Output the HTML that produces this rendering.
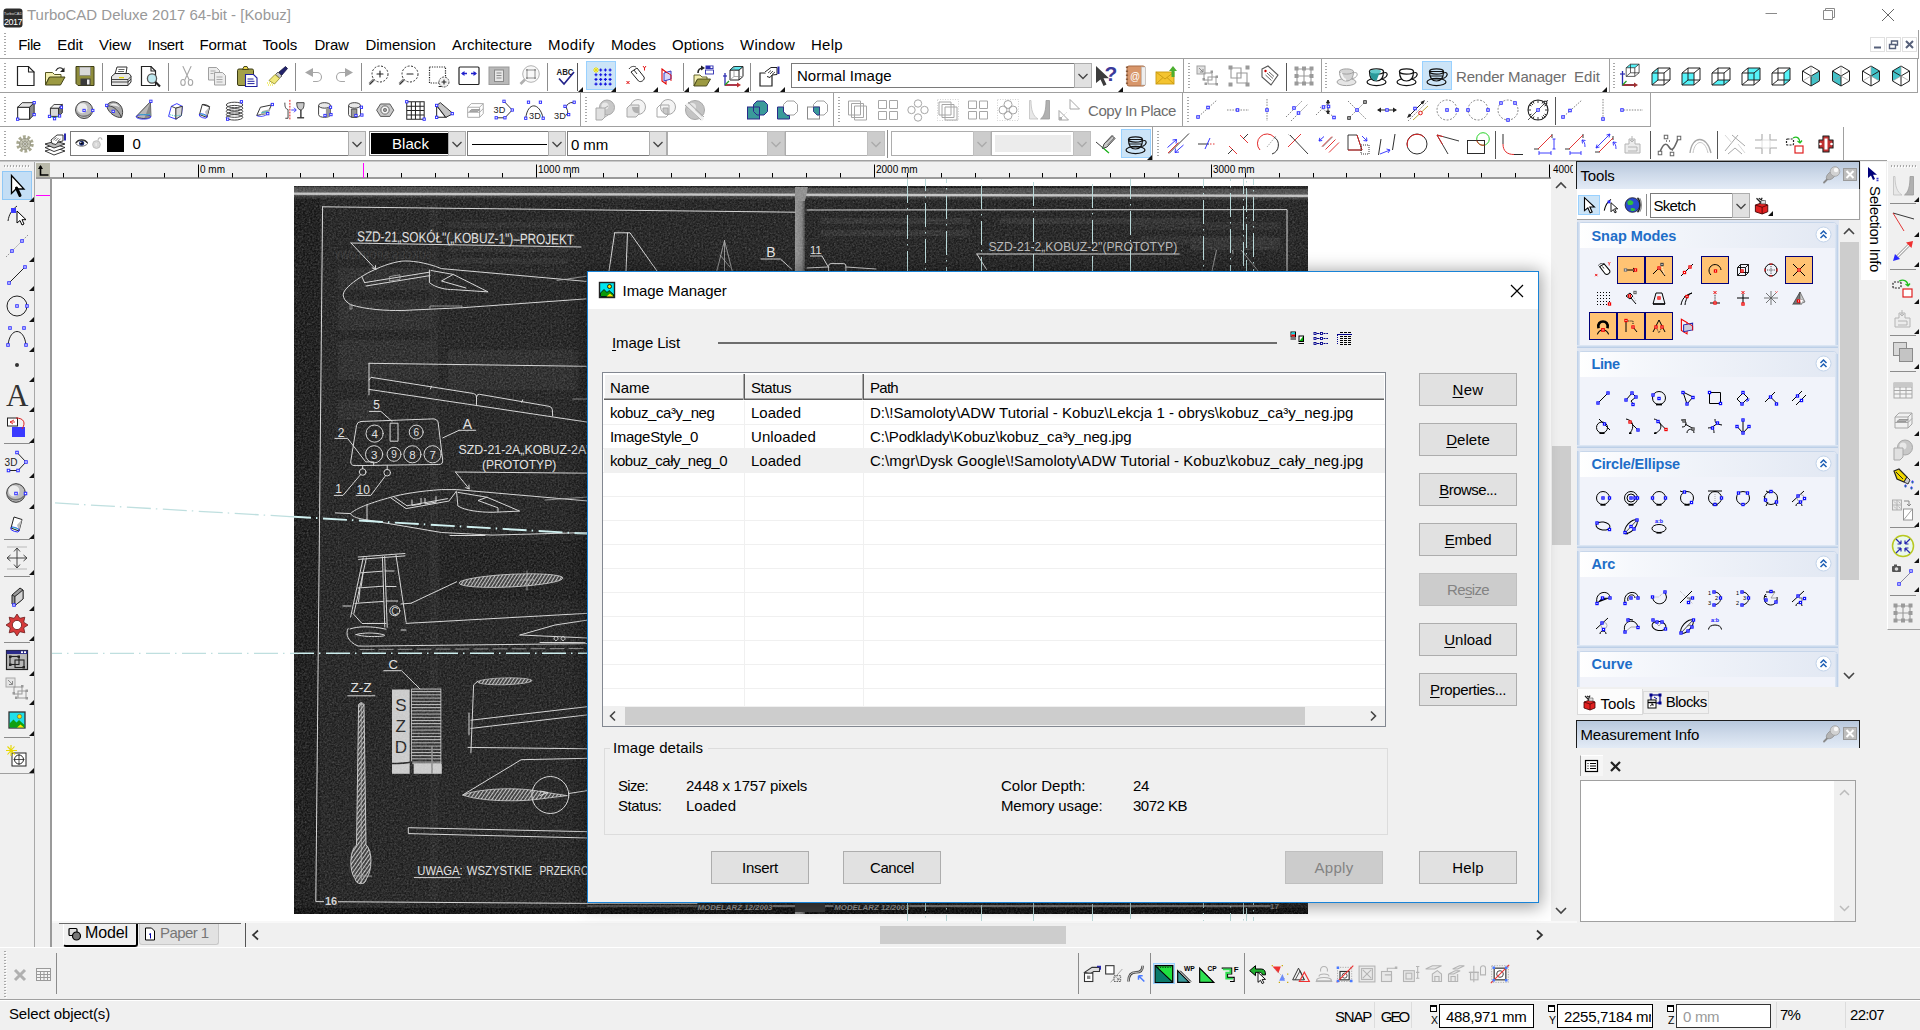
<!DOCTYPE html>
<html><head><meta charset="utf-8"><title>TurboCAD Deluxe 2017 64-bit - [Kobuz]</title>
<style>
html,body{margin:0;padding:0;}
body{width:1920px;height:1030px;overflow:hidden;background:#f0f0f0;position:relative;font-family:"Liberation Sans",sans-serif;font-size:15px;}
.a{position:absolute;display:block;box-sizing:border-box;}
.t{position:absolute;white-space:pre;display:block;}
u{text-decoration:underline;text-underline-offset:2px;text-decoration-thickness:1px;}
svg{overflow:visible;}
svg text{font-family:"Liberation Sans",sans-serif;}
</style></head><body>
<div class="a" style="left:0px;top:0px;width:1920px;height:30px;background:#fff;"></div>
<svg class="a" style="left:3px;top:8px;" width="20" height="20" viewBox="0 0 20 20"><rect x="0.5" y="0.5" width="19" height="19" rx="3" fill="#2b2b2b"/><text x="10" y="7" font-size="4" fill="#ddd" text-anchor="middle">TurboCAD</text><text x="10" y="16.5" font-size="9" fill="#fff" text-anchor="middle" letter-spacing="-0.5">2017</text></svg>
<span class="t" style="left:27px;top:7.30px;font-size:15px;line-height:15px;color:#999;letter-spacing:-0.016px;">TurboCAD Deluxe 2017 64-bit - [Kobuz]</span>
<svg class="a" style="left:1764px;top:4px;" width="20" height="20" viewBox="0 0 20 20"><path d="M1.500 9.500h11.500" stroke="#8a8a8a" stroke-width="1" fill="none"/></svg>
<svg class="a" style="left:1822px;top:7px;" width="14" height="14" viewBox="0 0 14 14"><path d="M1.500 3.500h9v9h-9z M3.500 3.500v-2h9v9h-2" stroke="#8a8a8a" stroke-width="1" fill="none"/></svg>
<svg class="a" style="left:1881px;top:8px;" width="14" height="14" viewBox="0 0 14 14"><path d="M1 1l12 12M13 1L1 13" stroke="#666" stroke-width="1" fill="none"/></svg>
<div class="a" style="left:0px;top:30px;width:1920px;height:131px;background:#fff;"></div>
<span class="t" style="left:18.3px;top:37.30px;font-size:15px;line-height:15px;color:#000;letter-spacing:-0.418px;">File</span>
<span class="t" style="left:57.3px;top:37.30px;font-size:15px;line-height:15px;color:#000;letter-spacing:-0.037px;">Edit</span>
<span class="t" style="left:99px;top:37.30px;font-size:15px;line-height:15px;color:#000;letter-spacing:-0.061px;">View</span>
<span class="t" style="left:147.8px;top:37.30px;font-size:15px;line-height:15px;color:#000;letter-spacing:-0.336px;">Insert</span>
<span class="t" style="left:199.4px;top:37.30px;font-size:15px;line-height:15px;color:#000;letter-spacing:-0.101px;">Format</span>
<span class="t" style="left:262.4px;top:37.30px;font-size:15px;line-height:15px;color:#000;letter-spacing:-0.043px;">Tools</span>
<span class="t" style="left:314.4px;top:37.30px;font-size:15px;line-height:15px;color:#000;letter-spacing:-0.151px;">Draw</span>
<span class="t" style="left:365.5px;top:37.30px;font-size:15px;line-height:15px;color:#000;letter-spacing:-0.062px;">Dimension</span>
<span class="t" style="left:452px;top:37.30px;font-size:15px;line-height:15px;color:#000;letter-spacing:-0.003px;">Architecture</span>
<span class="t" style="left:548px;top:37.30px;font-size:15px;line-height:15px;color:#000;letter-spacing:0.470px;">Modify</span>
<span class="t" style="left:611px;top:37.30px;font-size:15px;line-height:15px;color:#000;letter-spacing:-0.004px;">Modes</span>
<span class="t" style="left:672px;top:37.30px;font-size:15px;line-height:15px;color:#000;letter-spacing:0.044px;">Options</span>
<span class="t" style="left:740px;top:37.30px;font-size:15px;line-height:15px;color:#000;letter-spacing:0.275px;">Window</span>
<span class="t" style="left:811px;top:37.30px;font-size:15px;line-height:15px;color:#000;letter-spacing:0.287px;">Help</span>
<div class="a" style="left:4px;top:33px;width:2px;height:23px;background-image:repeating-linear-gradient(to bottom,#a8a8a8 0 1px,transparent 1px 3px);"></div>
<div class="a" style="left:5px;top:34px;width:2px;height:23px;background-image:repeating-linear-gradient(to bottom,#fff 0 1px,transparent 1px 3px);opacity:.9;"></div>
<div class="a" style="left:1870px;top:37px;width:15px;height:15px;background:#fff;border:1px solid #e0e0e0;"></div>
<div class="a" style="left:1886px;top:37px;width:15px;height:15px;background:#fff;border:1px solid #e0e0e0;"></div>
<div class="a" style="left:1902px;top:37px;width:15px;height:15px;background:#fff;border:1px solid #e0e0e0;"></div>
<svg class="a" style="left:1870px;top:37px;" width="15" height="15" viewBox="0 0 15 15"><path d="M4 10.5h7" stroke="#56607a" stroke-width="2" fill="none"/></svg>
<svg class="a" style="left:1886px;top:37px;" width="15" height="15" viewBox="0 0 15 15"><path d="M3.5 7.5h6v4h-6z M5.5 7v-3h6v4h-2" stroke="#56607a" stroke-width="1.4" fill="none"/></svg>
<svg class="a" style="left:1902px;top:37px;" width="15" height="15" viewBox="0 0 15 15"><path d="M4 4l7 7M11 4l-7 7" stroke="#56607a" stroke-width="2" fill="none"/></svg>
<div class="a" style="left:0px;top:58px;width:1918px;height:1px;background:#a0a0a0;"></div>
<div class="a" style="left:1918px;top:30px;width:1px;height:29px;background:#a0a0a0;"></div>
<div class="a" style="left:0px;top:59px;width:1184px;height:34px;background:#fff;border-right:1px solid #a0a0a0;border-bottom:1px solid #a0a0a0;"></div>
<div class="a" style="left:4px;top:63px;width:2px;height:26px;background-image:repeating-linear-gradient(to bottom,#a8a8a8 0 1px,transparent 1px 3px);"></div>
<div class="a" style="left:5px;top:64px;width:2px;height:26px;background-image:repeating-linear-gradient(to bottom,#fff 0 1px,transparent 1px 3px);opacity:.9;"></div>
<div class="a" style="left:1184px;top:59px;width:138px;height:34px;background:#fff;border-right:1px solid #a0a0a0;border-bottom:1px solid #a0a0a0;"></div>
<div class="a" style="left:1188px;top:63px;width:2px;height:26px;background-image:repeating-linear-gradient(to bottom,#a8a8a8 0 1px,transparent 1px 3px);"></div>
<div class="a" style="left:1189px;top:64px;width:2px;height:26px;background-image:repeating-linear-gradient(to bottom,#fff 0 1px,transparent 1px 3px);opacity:.9;"></div>
<div class="a" style="left:1322px;top:59px;width:288px;height:34px;background:#fff;border-right:1px solid #a0a0a0;border-bottom:1px solid #a0a0a0;"></div>
<div class="a" style="left:1325px;top:63px;width:2px;height:26px;background-image:repeating-linear-gradient(to bottom,#a8a8a8 0 1px,transparent 1px 3px);"></div>
<div class="a" style="left:1326px;top:64px;width:2px;height:26px;background-image:repeating-linear-gradient(to bottom,#fff 0 1px,transparent 1px 3px);opacity:.9;"></div>
<div class="a" style="left:1610px;top:59px;width:308px;height:34px;background:#fff;border-right:1px solid #a0a0a0;border-bottom:1px solid #a0a0a0;"></div>
<div class="a" style="left:1613px;top:63px;width:2px;height:26px;background-image:repeating-linear-gradient(to bottom,#a8a8a8 0 1px,transparent 1px 3px);"></div>
<div class="a" style="left:1614px;top:64px;width:2px;height:26px;background-image:repeating-linear-gradient(to bottom,#fff 0 1px,transparent 1px 3px);opacity:.9;"></div>
<div class="a" style="left:0px;top:93px;width:581px;height:34px;background:#fff;border-right:1px solid #a0a0a0;border-bottom:1px solid #a0a0a0;"></div>
<div class="a" style="left:4px;top:97px;width:2px;height:26px;background-image:repeating-linear-gradient(to bottom,#a8a8a8 0 1px,transparent 1px 3px);"></div>
<div class="a" style="left:5px;top:98px;width:2px;height:26px;background-image:repeating-linear-gradient(to bottom,#fff 0 1px,transparent 1px 3px);opacity:.9;"></div>
<div class="a" style="left:581px;top:93px;width:253px;height:34px;background:#fff;border-right:1px solid #a0a0a0;border-bottom:1px solid #a0a0a0;"></div>
<div class="a" style="left:585px;top:97px;width:2px;height:26px;background-image:repeating-linear-gradient(to bottom,#a8a8a8 0 1px,transparent 1px 3px);"></div>
<div class="a" style="left:586px;top:98px;width:2px;height:26px;background-image:repeating-linear-gradient(to bottom,#fff 0 1px,transparent 1px 3px);opacity:.9;"></div>
<div class="a" style="left:834px;top:93px;width:349px;height:34px;background:#fff;border-right:1px solid #a0a0a0;border-bottom:1px solid #a0a0a0;"></div>
<div class="a" style="left:838px;top:97px;width:2px;height:26px;background-image:repeating-linear-gradient(to bottom,#a8a8a8 0 1px,transparent 1px 3px);"></div>
<div class="a" style="left:839px;top:98px;width:2px;height:26px;background-image:repeating-linear-gradient(to bottom,#fff 0 1px,transparent 1px 3px);opacity:.9;"></div>
<div class="a" style="left:1183px;top:93px;width:468px;height:34px;background:#fff;border-right:1px solid #a0a0a0;border-bottom:1px solid #a0a0a0;"></div>
<div class="a" style="left:1187px;top:97px;width:2px;height:26px;background-image:repeating-linear-gradient(to bottom,#a8a8a8 0 1px,transparent 1px 3px);"></div>
<div class="a" style="left:1188px;top:98px;width:2px;height:26px;background-image:repeating-linear-gradient(to bottom,#fff 0 1px,transparent 1px 3px);opacity:.9;"></div>
<div class="a" style="left:0px;top:127px;width:1153px;height:34px;background:#fff;border-right:1px solid #a0a0a0;border-bottom:1px solid #a0a0a0;"></div>
<div class="a" style="left:4px;top:131px;width:2px;height:26px;background-image:repeating-linear-gradient(to bottom,#a8a8a8 0 1px,transparent 1px 3px);"></div>
<div class="a" style="left:5px;top:132px;width:2px;height:26px;background-image:repeating-linear-gradient(to bottom,#fff 0 1px,transparent 1px 3px);opacity:.9;"></div>
<div class="a" style="left:1153px;top:127px;width:691px;height:34px;background:#fff;border-right:1px solid #a0a0a0;border-bottom:1px solid #a0a0a0;"></div>
<div class="a" style="left:1157px;top:131px;width:2px;height:26px;background-image:repeating-linear-gradient(to bottom,#a8a8a8 0 1px,transparent 1px 3px);"></div>
<div class="a" style="left:1158px;top:132px;width:2px;height:26px;background-image:repeating-linear-gradient(to bottom,#fff 0 1px,transparent 1px 3px);opacity:.9;"></div>
<div class="a" style="left:0px;top:160px;width:1887px;height:1px;background:#a0a0a0;"></div>
<div class="a" style="left:0px;top:161px;width:1576px;height:1px;background:#c8c8c8;"></div>
<div class="a" style="left:791px;top:63px;width:301px;height:25px;background:#fff;border:1px solid #7a7a7a;"></div>
<div class="a" style="left:1074px;top:63px;width:18px;height:25px;background:#e1e1e1;border:1px solid #adadad;"></div>
<svg class="a" style="left:1077px;top:71.5px;" width="12" height="8" viewBox="0 0 12 8"><path d="M1.5 2l4.5 4.5L10.5 2" stroke="#444" stroke-width="1.3" fill="none"/></svg>
<span class="t" style="left:797px;top:67.80px;font-size:15px;line-height:15px;color:#000;letter-spacing:0.042px;">Normal Image</span>
<div class="a" style="left:70px;top:131px;width:296px;height:25px;background:#fff;border:1px solid #7a7a7a;"></div>
<div class="a" style="left:348px;top:131px;width:18px;height:25px;background:#e1e1e1;border:1px solid #adadad;"></div>
<svg class="a" style="left:351px;top:139.5px;" width="12" height="8" viewBox="0 0 12 8"><path d="M1.5 2l4.5 4.5L10.5 2" stroke="#444" stroke-width="1.3" fill="none"/></svg>
<div class="a" style="left:107px;top:135px;width:17px;height:17px;background:#000;"></div>
<span class="t" style="left:132.5px;top:136.30px;font-size:15px;line-height:15px;color:#000;">0</span>
<div class="a" style="left:369px;top:131px;width:97px;height:25px;background:#fff;border:1px solid #7a7a7a;"></div>
<div class="a" style="left:371px;top:133px;width:77px;height:21px;background:#000;"></div>
<span class="t" style="left:392px;top:136.30px;font-size:15px;line-height:15px;color:#fff;letter-spacing:0.064px;">Black</span>
<div class="a" style="left:448px;top:131px;width:18px;height:25px;background:#e1e1e1;border:1px solid #adadad;"></div>
<svg class="a" style="left:451px;top:139.5px;" width="12" height="8" viewBox="0 0 12 8"><path d="M1.5 2l4.5 4.5L10.5 2" stroke="#444" stroke-width="1.3" fill="none"/></svg>
<div class="a" style="left:467px;top:131px;width:99px;height:25px;background:#fff;border:1px solid #7a7a7a;"></div>
<div class="a" style="left:548px;top:131px;width:18px;height:25px;background:#e1e1e1;border:1px solid #adadad;"></div>
<svg class="a" style="left:551px;top:139.5px;" width="12" height="8" viewBox="0 0 12 8"><path d="M1.5 2l4.5 4.5L10.5 2" stroke="#444" stroke-width="1.3" fill="none"/></svg>
<div class="a" style="left:472px;top:144px;width:75px;height:1px;background:#000;"></div>
<div class="a" style="left:567px;top:131px;width:100px;height:25px;background:#fff;border:1px solid #7a7a7a;"></div>
<div class="a" style="left:649px;top:131px;width:18px;height:25px;background:#e1e1e1;border:1px solid #adadad;"></div>
<svg class="a" style="left:652px;top:139.5px;" width="12" height="8" viewBox="0 0 12 8"><path d="M1.5 2l4.5 4.5L10.5 2" stroke="#444" stroke-width="1.3" fill="none"/></svg>
<span class="t" style="left:571px;top:137.30px;font-size:15px;line-height:15px;color:#000;letter-spacing:-0.125px;">0 mm</span>
<div class="a" style="left:667px;top:131px;width:118px;height:25px;background:#fff;border:1px solid #adadad;"></div>
<div class="a" style="left:767px;top:131px;width:18px;height:25px;background:#cccccc;border:1px solid #bfbfbf;"></div>
<svg class="a" style="left:770px;top:139.5px;" width="12" height="8" viewBox="0 0 12 8"><path d="M1.5 2l4.5 4.5L10.5 2" stroke="#aaa" stroke-width="1.3" fill="none"/></svg>
<div class="a" style="left:785px;top:131px;width:100px;height:25px;background:#fff;border:1px solid #adadad;"></div>
<div class="a" style="left:867px;top:131px;width:18px;height:25px;background:#cccccc;border:1px solid #bfbfbf;"></div>
<svg class="a" style="left:870px;top:139.5px;" width="12" height="8" viewBox="0 0 12 8"><path d="M1.5 2l4.5 4.5L10.5 2" stroke="#aaa" stroke-width="1.3" fill="none"/></svg>
<div class="a" style="left:887px;top:130px;width:1px;height:28px;background:#8c8c8c;"></div>
<div class="a" style="left:891px;top:131px;width:100px;height:25px;background:#fff;border:1px solid #adadad;"></div>
<div class="a" style="left:973px;top:131px;width:18px;height:25px;background:#cccccc;border:1px solid #bfbfbf;"></div>
<svg class="a" style="left:976px;top:139.5px;" width="12" height="8" viewBox="0 0 12 8"><path d="M1.5 2l4.5 4.5L10.5 2" stroke="#aaa" stroke-width="1.3" fill="none"/></svg>
<div class="a" style="left:991px;top:131px;width:100px;height:25px;background:#fff;border:1px solid #adadad;"></div>
<div class="a" style="left:1073px;top:131px;width:18px;height:25px;background:#cccccc;border:1px solid #bfbfbf;"></div>
<svg class="a" style="left:1076px;top:139.5px;" width="12" height="8" viewBox="0 0 12 8"><path d="M1.5 2l4.5 4.5L10.5 2" stroke="#aaa" stroke-width="1.3" fill="none"/></svg>
<div class="a" style="left:995px;top:135px;width:76px;height:17px;background:#ececec;"></div>
<span class="t" style="left:1456px;top:69.30px;font-size:15px;line-height:15px;color:#6d6d6d;letter-spacing:-0.183px;">Render Manager</span>
<span class="t" style="left:1574px;top:69.30px;font-size:15px;line-height:15px;color:#6d6d6d;letter-spacing:0.038px;">Edit</span>
<span class="t" style="left:1088px;top:103.30px;font-size:15px;line-height:15px;color:#6d6d6d;letter-spacing:-0.414px;">Copy In Place</span>
<div class="a" style="left:0px;top:162px;width:35px;height:612px;background:#f0f0f0;border-right:1px solid #a8a8a8;border-bottom:1px solid #a0a0a0;"></div>
<div class="a" style="left:4px;top:165px;width:26px;height:2px;background-image:repeating-linear-gradient(to right,#a8a8a8 0 1px,transparent 1px 3px);"></div>
<div class="a" style="left:5px;top:166px;width:26px;height:2px;background-image:repeating-linear-gradient(to right,#fff 0 1px,transparent 1px 3px);opacity:.9;"></div>
<div class="a" style="left:2px;top:171px;width:30px;height:29px;background:#c4def5;border:1px solid #90c8f6;"></div>
<div class="a" style="left:4px;top:443px;width:26px;height:1px;background:#8c8c8c;"></div>
<div class="a" style="left:4px;top:539px;width:26px;height:1px;background:#8c8c8c;"></div>
<div class="a" style="left:4px;top:576px;width:26px;height:1px;background:#8c8c8c;"></div>
<div class="a" style="left:4px;top:642px;width:26px;height:1px;background:#8c8c8c;"></div>
<div class="a" style="left:4px;top:737px;width:26px;height:1px;background:#8c8c8c;"></div>
<div class="a" style="left:36px;top:163px;width:1515px;height:15px;background:#f0f0f0;"></div>
<div class="a" style="left:36px;top:177px;width:1515px;height:2px;background:#9a9a9a;"></div>
<div class="a" style="left:35px;top:179px;width:15px;height:768px;background:#f0f0f0;"></div>
<div class="a" style="left:34px;top:774px;width:1px;height:173px;background:#a8a8a8;"></div>
<div class="a" style="left:50px;top:177px;width:2px;height:770px;background:#9a9a9a;"></div>
<div class="a" style="left:36px;top:163px;width:14px;height:14px;background:#b9b9aa;"></div>
<svg class="a" style="left:37px;top:164px;" width="13" height="13" viewBox="0 0 13 13"><path d="M3.5 2v9h8" stroke="#000" stroke-width="1.6" fill="none"/><path d="M1 5l2.5-4 2.5 4z" fill="#000"/></svg>
<svg class="a" style="left:0px;top:163px;" width="1552" height="15" viewBox="0 0 1552 15"><path d="M63.5 10v4.500M97.5 10v4.500M131.5 10v4.500M164.5 10v4.500M198.5 1.500v13M232.5 10v4.500M266.5 10v4.500M300.5 10v4.500M333.5 10v4.500M367.5 10v4.500M401.5 10v4.500M435.5 10v4.500M468.5 10v4.500M502.5 10v4.500M536.5 1.500v13M570.5 10v4.500M603.5 10v4.500M637.5 10v4.500M671.5 10v4.500M705.5 10v4.500M739.5 10v4.500M772.5 10v4.500M806.5 10v4.500M840.5 10v4.500M874.5 1.500v13M907.5 10v4.500M941.5 10v4.500M975.5 10v4.500M1009.5 10v4.500M1042.5 10v4.500M1076.5 10v4.500M1110.5 10v4.500M1144.5 10v4.500M1178.5 10v4.500M1211.5 1.500v13M1245.5 10v4.500M1279.5 10v4.500M1313.5 10v4.500M1346.5 10v4.500M1380.5 10v4.500M1414.5 10v4.500M1448.5 10v4.500M1481.5 10v4.500M1515.5 10v4.500M1549.5 1.500v13" stroke="#000" stroke-width="1" fill="none"/></svg>
<span class="t" style="left:200px;top:164.53px;font-size:10px;line-height:10px;color:#000;">0 mm</span>
<span class="t" style="left:538px;top:164.53px;font-size:10px;line-height:10px;color:#000;">1000 mm</span>
<span class="t" style="left:876px;top:164.53px;font-size:10px;line-height:10px;color:#000;">2000 mm</span>
<span class="t" style="left:1213px;top:164.53px;font-size:10px;line-height:10px;color:#000;">3000 mm</span>
<div class="a" style="left:1551px;top:163px;width:26px;height:16px;background:#f0f0f0;"></div>
<span class="t" style="left:1553px;top:164.53px;font-size:10px;line-height:10px;color:#000;">4000</span>
<div class="a" style="left:363px;top:163px;width:1px;height:15px;background:#ff00ff;"></div>
<div class="a" style="left:36px;top:195px;width:14px;height:1px;background:#ff00ff;"></div>
<div class="a" style="left:52px;top:179px;width:1499px;height:742px;background:#fff;"></div>
<div class="a" style="left:1551px;top:179px;width:22px;height:742px;background:#f0f0f0;"></div>
<svg class="a" style="left:1554px;top:180px;" width="14" height="10" viewBox="0 0 14 10"><path d="M2 8l5-5 5 5" stroke="#444" stroke-width="1.6" fill="none"/></svg>
<svg class="a" style="left:1554px;top:906px;" width="14" height="10" viewBox="0 0 14 10"><path d="M2 2l5 5 5-5" stroke="#444" stroke-width="1.6" fill="none"/></svg>
<div class="a" style="left:1552px;top:446px;width:19px;height:99px;background:#cdcdcd;"></div>
<div class="a" style="left:1573px;top:162px;width:4px;height:760px;background:#f0f0f0;"></div>
<div class="a" style="left:52px;top:921px;width:1525px;height:2px;background:#f8f8f8;"></div>
<div class="a" style="left:52px;top:923px;width:1500px;height:24px;background:#f0f0f0;"></div>
<div class="a" style="left:50px;top:921px;width:2px;height:26px;background:#9a9a9a;"></div>
<div class="a" style="left:63px;top:923px;width:75px;height:24px;background:#f0f0f0;border-right:2px solid #000;border-bottom:2px solid #000;border-left:1px solid #fff;border-radius:0 0 3px 3px;"></div>
<span class="t" style="left:85px;top:925.21px;font-size:16px;line-height:16px;color:#000;letter-spacing:-0.116px;">Model</span>
<svg class="a" style="left:68px;top:927px;" width="14" height="14" viewBox="0 0 14 14"><rect x="1" y="1.5" width="8" height="7" rx="1" fill="#ddd" stroke="#000" stroke-width="1.2"/><circle cx="8.5" cy="9" r="4" fill="#777" stroke="#000" stroke-width="1.2"/></svg>
<div class="a" style="left:139px;top:923px;width:80px;height:22px;background:#e2e2e2;border:1px solid #c8c8c8;border-top:none;border-radius:0 0 3px 3px;"></div>
<div class="a" style="left:59px;top:923px;width:182px;height:1px;background:#696969;"></div>
<span class="t" style="left:160px;top:925.30px;font-size:15px;line-height:15px;color:#777;letter-spacing:-0.577px;">Paper 1</span>
<svg class="a" style="left:144px;top:927px;" width="12" height="14" viewBox="0 0 12 14"><path d="M1.5 1h6l3 3v9h-9z" fill="#fff" stroke="#000" stroke-width="1"/><path d="M5 7.5l1.5-1v5" stroke="#00a" stroke-width="1" fill="none"/></svg>
<div class="a" style="left:245px;top:923px;width:1px;height:24px;background:#555;"></div>
<svg class="a" style="left:250px;top:929px;" width="10" height="12" viewBox="0 0 10 12"><path d="M8 1.5L3 6l5 4.5" stroke="#333" stroke-width="1.7" fill="none"/></svg>
<svg class="a" style="left:1535px;top:929px;" width="10" height="12" viewBox="0 0 10 12"><path d="M2 1.5L7 6l-5 4.5" stroke="#333" stroke-width="1.7" fill="none"/></svg>
<div class="a" style="left:880px;top:926px;width:186px;height:18px;background:#cdcdcd;"></div>
<svg class="a" style="left:0;top:0;" width="1560" height="925" viewBox="0 0 1560 925"><defs><linearGradient id="topband" x1="0" y1="0" x2="0" y2="1"><stop offset="0" stop-color="#0c0c0c"/><stop offset="0.08" stop-color="#444"/><stop offset="0.46" stop-color="#4e4e4e"/><stop offset="0.54" stop-color="#c2c2c2"/><stop offset="0.64" stop-color="#c2c2c2"/><stop offset="0.74" stop-color="#3c3c3c"/><stop offset="1" stop-color="#1d1d1d"/></linearGradient><linearGradient id="fold" x1="0" y1="0" x2="1" y2="0"><stop offset="0" stop-color="#8e8e8e"/><stop offset="0.7" stop-color="#7c7c7c"/><stop offset="1" stop-color="#3a3a3a"/></linearGradient><pattern id="hat" width="3" height="3" patternUnits="userSpaceOnUse" patternTransform="rotate(-55)"><rect width="3" height="3" fill="#3a3a3a"/><path d="M0 0.5h3" stroke="#cfcfcf" stroke-width="0.9"/></pattern><pattern id="hlines" width="4" height="3.2" patternUnits="userSpaceOnUse"><rect width="4" height="3.2" fill="#2a2a2a"/><path d="M0 0.5h4" stroke="#cfcfcf" stroke-width="0.9"/></pattern><filter id="grain" x="0" y="0" width="100%" height="100%"><feTurbulence type="fractalNoise" baseFrequency="0.55" numOctaves="2" seed="7" result="n"/><feColorMatrix type="matrix" values="0 0 0 0 1  0 0 0 0 1  0 0 0 0 1  0.9 0.9 0.9 0 -1.05"/></filter><clipPath id="imgclip"><rect x="294" y="186" width="1014" height="728"/></clipPath></defs><g clip-path="url(#imgclip)"><rect x="294" y="186" width="1014" height="728" fill="#1d1d1d"/><rect x="294" y="186" width="26" height="728" fill="#151515"/><rect x="430" y="200" width="8" height="700" fill="#232323"/><rect x="440" y="540" width="148" height="60" fill="#181818"/><rect x="290" y="186" width="1024" height="13" fill="url(#topband)" transform="rotate(0.12 294 186)"/><rect x="294" y="908" width="1014" height="6" fill="#0a0a0a"/><rect x="795" y="187" width="10" height="727" fill="url(#fold)"/><path d="M795 187h13l-3 14h-10z" fill="#8a8a8a"/><rect x="338" y="268" width="92" height="22" fill="#262626" rx="2"/><rect x="338" y="300" width="96" height="30" fill="#262626" rx="2"/><rect x="338" y="340" width="100" height="40" fill="#262626" rx="2"/><rect x="338" y="400" width="40" height="20" fill="#262626" rx="2"/><rect x="448" y="222" width="128" height="6" fill="#262626" rx="2"/><rect x="448" y="234" width="128" height="6" fill="#262626" rx="2"/><rect x="448" y="246" width="120" height="6" fill="#262626" rx="2"/><rect x="448" y="258" width="120" height="6" fill="#262626" rx="2"/><rect x="448" y="350" width="130" height="40" fill="#262626" rx="2"/><rect x="1130" y="222" width="150" height="8" fill="#262626" rx="2"/><rect x="1140" y="236" width="140" height="8" fill="#262626" rx="2"/><text transform="translate(432 259) scale(-1 1)" font-size="11" font-weight="bold" fill="#2d2d2d" textLength="98" lengthAdjust="spacingAndGlyphs">SUKCES SPORTOWY</text><path d="M322.6 206.8L795 212.2M807 210L1287 209.6V640" stroke="#d4d4d4" stroke-width="1" fill="none" stroke-linecap="round" stroke-linejoin="round" stroke-width="1.9"/><path d="M322.6 206.8L315.8 901.6L588 903.4H697M773 906H833M910 906H1270" stroke="#d4d4d4" stroke-width="1" fill="none" stroke-linecap="round" stroke-linejoin="round" stroke-width="1.9"/><path d="M588 906h109" stroke="#a8a8a8" stroke-width="0.8" fill="none" stroke-linecap="round" stroke-linejoin="round"/><text x="357" y="241.2" font-size="14.5" fill="#e0e0e0" textLength="217" lengthAdjust="spacingAndGlyphs" transform="rotate(0.9 357 243)">SZD-21„SOKÓŁ"(„KOBUZ-1")–PROJEKT</text><path d="M351 243L581 247M351 243L375.8 269.3M375.8 269.3l-3.6-1.4M375.8 269.3l-.4-3.8" stroke="#d4d4d4" stroke-width="1" fill="none" stroke-linecap="round" stroke-linejoin="round"/><path d="M586 281.4L441.5 268.6C425 262 410 260.5 401.9 261.1C380 264 352 280 344.5 291C342 295 343 300 350.6 304.7C366 309.5 386 310.8 401.9 310.5L462.5 307.7L586 298.9" stroke="#d4d4d4" stroke-width="1" fill="none" stroke-linecap="round" stroke-linejoin="round"/><path d="M364.6 282.6L429.9 272.1M366 286L430 275.6M364.6 282.6L362 277M401.9 261.1" stroke="#d4d4d4" stroke-width="1" fill="none" stroke-linecap="round" stroke-linejoin="round"/><path d="M390 276.5l10-1.7v4.5l-10 1.7z" stroke="#a8a8a8" stroke-width="0.8" fill="none" stroke-linecap="round" stroke-linejoin="round"/><path d="M429.4 270L429.4 282.6C436 288 446 289.6 453.2 289.6L488.1 291.9L453.2 274.4L431 270.5M453.2 274.4L441.5 281L466 288" stroke="#d4d4d4" stroke-width="1" fill="none" stroke-linecap="round" stroke-linejoin="round"/><path d="M350 304v5h2v-4.5M430 308.5v-2.5h32v2" stroke="#a8a8a8" stroke-width="0.8" fill="none" stroke-linecap="round" stroke-linejoin="round"/><path d="M557 280.5l29-4.2" stroke="#a8a8a8" stroke-width="0.8" fill="none" stroke-linecap="round" stroke-linejoin="round"/><path d="M369 363.3V394.8M369 363.3L586.200 366.300M369 380L371 377.300L473.500 393.500q3 .6 3 3.500v7.500M476.500 397q0-3 3-2.700L549 406.300q3.200 .6 3.400 3.500l.2 6M369 389.400L588 422.200M431.500 386.300l-1 2.500M522.700 399.800l-1 2.500" stroke="#d4d4d4" stroke-width="1" fill="none" stroke-linecap="round" stroke-linejoin="round"/><path d="M573 399h15" stroke="#a8a8a8" stroke-width="0.8" fill="none" stroke-linecap="round" stroke-linejoin="round"/><text x="376.6" y="409.4" font-size="12" fill="#e0e0e0" text-anchor="middle">5</text><path d="M369.5 411.4H380.9L392.2 421.5" stroke="#d4d4d4" stroke-width="1" fill="none" stroke-linecap="round" stroke-linejoin="round"/><path d="M361 421.5L433 418.9Q437.5 418.8 438.2 423L442.7 460Q443.2 464.5 438.5 464.5L355 465.6Q350.2 465.6 350.8 461L356.5 425.5Q357 421.6 361 421.5Z" stroke="#d4d4d4" stroke-width="1" fill="none" stroke-linecap="round" stroke-linejoin="round"/><circle cx="374.6" cy="433.6" r="8.6" stroke="#d4d4d4" stroke-width="1" fill="none" stroke-linecap="round" stroke-linejoin="round"/><text x="374.6" y="437.8" font-size="11.5" fill="#e0e0e0" text-anchor="middle">4</text><circle cx="416.2" cy="432.1" r="7" stroke="#d4d4d4" stroke-width="1" fill="none" stroke-linecap="round" stroke-linejoin="round"/><text x="416.2" y="435.7" font-size="10" fill="#e0e0e0" text-anchor="middle">6</text><circle cx="374.1" cy="454.3" r="8.6" stroke="#d4d4d4" stroke-width="1" fill="none" stroke-linecap="round" stroke-linejoin="round"/><text x="374.1" y="458.5" font-size="11.5" fill="#e0e0e0" text-anchor="middle">3</text><circle cx="394" cy="454.3" r="7" stroke="#d4d4d4" stroke-width="1" fill="none" stroke-linecap="round" stroke-linejoin="round"/><text x="394" y="457.9" font-size="10" fill="#e0e0e0" text-anchor="middle">9</text><circle cx="412.4" cy="454.3" r="8.6" stroke="#d4d4d4" stroke-width="1" fill="none" stroke-linecap="round" stroke-linejoin="round"/><text x="412.4" y="458.5" font-size="11.5" fill="#e0e0e0" text-anchor="middle">8</text><circle cx="432.6" cy="454.3" r="8.6" stroke="#d4d4d4" stroke-width="1" fill="none" stroke-linecap="round" stroke-linejoin="round"/><text x="432.6" y="458.5" font-size="11.5" fill="#e0e0e0" text-anchor="middle">7</text><rect x="390.5" y="423.2" width="7.5" height="18" stroke="#d4d4d4" stroke-width="1" fill="none" stroke-linecap="round" stroke-linejoin="round"/><text x="467.5" y="428.6" font-size="14" fill="#e0e0e0" text-anchor="middle">A</text><path d="M459.1 430.3H475.6M459.1 430.3L442.7 437.9" stroke="#d4d4d4" stroke-width="1" fill="none" stroke-linecap="round" stroke-linejoin="round"/><text x="341.2" y="437" font-size="12" fill="#e0e0e0" text-anchor="middle">2</text><path d="M334.9 438.4H347.6L365.7 461.9h8v3.5" stroke="#d4d4d4" stroke-width="1" fill="none" stroke-linecap="round" stroke-linejoin="round"/><text x="338.7" y="493.2" font-size="12" fill="#e0e0e0" text-anchor="middle">1</text><path d="M334.2 495.4H343L360.6 474.6" stroke="#d4d4d4" stroke-width="1" fill="none" stroke-linecap="round" stroke-linejoin="round"/><circle cx="362.7" cy="472" r="3.3" stroke="#d4d4d4" stroke-width="1" fill="none" stroke-linecap="round" stroke-linejoin="round"/><text x="363.2" y="493.6" font-size="12" fill="#e0e0e0" text-anchor="middle">10</text><path d="M356.1 495.4H370.8L385.6 475.6" stroke="#d4d4d4" stroke-width="1" fill="none" stroke-linecap="round" stroke-linejoin="round"/><circle cx="387.2" cy="472.7" r="3.3" stroke="#d4d4d4" stroke-width="1" fill="none" stroke-linecap="round" stroke-linejoin="round"/><path d="M362.7 468.7v-3M387.2 469.4v-3.6" stroke="#d4d4d4" stroke-width="1" fill="none" stroke-linecap="round" stroke-linejoin="round"/><text x="458.6" y="454.3" font-size="13.5" fill="#e0e0e0" textLength="132" lengthAdjust="spacingAndGlyphs">SZD-21-2A„KOBUZ-2A"</text><text x="481.9" y="468.7" font-size="13.5" fill="#e0e0e0" textLength="74.4" lengthAdjust="spacingAndGlyphs">(PROTOTYP)</text><path d="M455.4 472L588 473.2M455.4 472L469.2 488.9l-3.6-1.2M469.2 488.9l-.3-3.8" stroke="#d4d4d4" stroke-width="1" fill="none" stroke-linecap="round" stroke-linejoin="round"/><path d="M335.4 512.9L350.6 513.6M588 501L456.6 489.6L441.5 489.6C420 491 402 494 391 497.2C372 502.5 356 508 350.6 513.6C352 517 360 519 367 519.9L441.5 532.5L492 535.1L588 532.5M367 504.8V519.9M450 535.5h35" stroke="#d4d4d4" stroke-width="1" fill="none" stroke-linecap="round" stroke-linejoin="round"/><path d="M391 498L406.1 508.6L449 501L456.6 490.9M394.5 497.3L407 505.8L447.5 498.7M412 500v5.5l9-1.5v-5.5M425 498.4v5.5l11-1.8v-5.6" stroke="#d4d4d4" stroke-width="1" fill="none" stroke-linecap="round" stroke-linejoin="round"/><path d="M456.6 492.1L457.9 506C465 510.5 480 512.3 492 512.3L519.7 511.1L486.9 497.2L458 492.4M486.9 497.2L478 500.5L498 507.8l0 4" stroke="#d4d4d4" stroke-width="1" fill="none" stroke-linecap="round" stroke-linejoin="round"/><path d="M545 500l43-3" stroke="#a8a8a8" stroke-width="0.8" fill="none" stroke-linecap="round" stroke-linejoin="round"/><path d="M358.2 557L404.9 553.5M358.6 559.4L405 555.9M363.2 557.8L350.6 617.1M366.4 558L354 613M396 555.3L406.1 622.2M384.7 556.5L387.2 627.2M382.4 556.8L384.8 627M361 572.8l21.5-1.6M358 588l25-1.8M355 603.4l28.5-2M353 613.5l9 10h24M363 573.5l-1.8 13M360 589l-1.5 13M385 571h9M386 586.5h10M386.3 601h11.5M343 606h8" stroke="#d4d4d4" stroke-width="1" fill="none" stroke-linecap="round" stroke-linejoin="round"/><circle cx="394.8" cy="610.8" r="5" stroke="#d4d4d4" stroke-width="1" fill="none" stroke-linecap="round" stroke-linejoin="round"/><text x="394.8" y="614.6" font-size="10" fill="#cfcfcf" text-anchor="middle">C</text><path d="M411.2 603.2L456.6 581.8M406.1 623.4L588 613.3M401 604l10.2-.8" stroke="#d4d4d4" stroke-width="1" fill="none" stroke-linecap="round" stroke-linejoin="round"/><ellipse cx="511" cy="580.6" rx="52" ry="6.3" fill="url(#hat)" stroke="#d0d0d0" stroke-width=".8" transform="rotate(-2.8 511 580.6)"/><path d="M527 571v19M521 580h13" stroke="#a8a8a8" stroke-width="0.8" fill="none" stroke-linecap="round" stroke-linejoin="round"/><path d="M348.1 628.5C345 634 348 642 358 646L365.7 646.1L588 643.6M350 629c8-3 22-3 36 .2M356 634.5c8-2 18-2 27 0s-18 3.5-27 0M401 630h5M520 635l35-10 33-5M520 635l68 3M540 642.5h45M556 636.5a2 2 0 1 0 .1 0M563 636.5a2 2 0 1 0 .1 0" stroke="#d4d4d4" stroke-width="1" fill="none" stroke-linecap="round" stroke-linejoin="round"/><path d="M360 649.5l228-1" stroke="#a8a8a8" stroke-width="0.8" fill="none" stroke-linecap="round" stroke-linejoin="round" stroke-dasharray="14 5"/><text x="393.3" y="668.6" font-size="13" fill="#e0e0e0" text-anchor="middle">C</text><path d="M383.8 670.7H401.5L420 689" stroke="#d4d4d4" stroke-width="1" fill="none" stroke-linecap="round" stroke-linejoin="round"/><text x="350.4" y="692.2" font-size="12.5" fill="#e0e0e0" textLength="21.2" lengthAdjust="spacingAndGlyphs">Z-Z</text><path d="M347.7 695.8H374.9" stroke="#d4d4d4" stroke-width="1" fill="none" stroke-linecap="round" stroke-linejoin="round"/><path d="M358.6 704.5q2.7-3.6 5.4 0L366 845C373 850 372 872 366.5 878.5q-1 5.5-6 5.2q-4.5-.3-5.6-5.2C349 871 349.5 850 356.5 845Z" fill="url(#hat)" stroke="#d0d0d0" stroke-width=".9"/><path d="M361.3 703v180M354.5 876h17M359 704.5h5" stroke="#a8a8a8" stroke-width="0.8" fill="none" stroke-linecap="round" stroke-linejoin="round"/><rect x="392" y="689.5" width="17.7" height="84.3" fill="#c9c9c9"/><text x="400.8" y="711" font-size="17" fill="#222" text-anchor="middle">S</text><text x="400.8" y="732" font-size="17" fill="#222" text-anchor="middle">Z</text><text x="400.8" y="752.5" font-size="17" fill="#222" text-anchor="middle">D</text><rect x="411.6" y="689" width="29.3" height="74.7" fill="url(#hlines)" stroke="#cfcfcf" stroke-width=".8"/><rect x="413.7" y="763.7" width="28.1" height="10.1" fill="#c9c9c9"/><path d="M392 763.5c8 0 17-1 19.5-1.5v12" stroke="#222" stroke-width="1.6" fill="none"/><path d="M432 746v28" stroke="#8a8a8a" stroke-width="1.6" fill="none"/><ellipse cx="504.8" cy="681.3" rx="27" ry="3.4" fill="url(#hat)" stroke="#d0d0d0" stroke-width=".7" transform="rotate(-1.5 504.8 681.3)"/><path d="M478 681L473.6 684.9L470.9 752.9M469 713v22M470.9 720.2L588 706.6M470.9 728.4L588 714.8M468.1 747.4L588 748.8M588 758.3L521.2 759.7L462.7 795" stroke="#d4d4d4" stroke-width="1" fill="none" stroke-linecap="round" stroke-linejoin="round"/><path d="M462.7 795C480 788 520 787 540 791.5L567.4 795.6L540 799C520 802 480 801.5 462.7 795Z" fill="url(#hat)" stroke="#d0d0d0" stroke-width=".8"/><circle cx="550.3" cy="795" r="18.5" stroke="#d4d4d4" stroke-width="1" fill="none" stroke-linecap="round" stroke-linejoin="round"/><path d="M568.8 793.5l19.2-3M540 791l8 1.5-8 3" stroke="#d4d4d4" stroke-width="1" fill="none" stroke-linecap="round" stroke-linejoin="round"/><path d="M588 831.7L408.3 827.7V833.6L588 838" stroke="#d4d4d4" stroke-width="1" fill="none" stroke-linecap="round" stroke-linejoin="round"/><text x="417.3" y="875.2" font-size="13.5" fill="#e0e0e0" textLength="45.4" lengthAdjust="spacingAndGlyphs">UWAGA:</text><text x="466.8" y="875.2" font-size="13.5" fill="#e0e0e0" textLength="65.3" lengthAdjust="spacingAndGlyphs">WSZYSTKIE</text><text x="539.4" y="875.2" font-size="13.5" fill="#e0e0e0" textLength="61.5" lengthAdjust="spacingAndGlyphs">PRZEKROJE</text><path d="M414.3 877.6H460" stroke="#d4d4d4" stroke-width="1" fill="none" stroke-linecap="round" stroke-linejoin="round"/><text x="325" y="905.4" font-size="11" font-weight="bold" fill="#cfcfcf">16</text><rect x="324" y="896" width="14" height="11" fill="#1d1d1d"/><text x="325" y="905.4" font-size="11" font-weight="bold" fill="#cfcfcf">16</text><text x="588" y="665" font-size="22" font-weight="bold" fill="#bbb">C</text><path d="M614.7 232.8L630 232.8L657 271M614.7 232.8L609 271M627.500 233l-1.500 38" stroke="#d4d4d4" stroke-width="1" fill="none" stroke-linecap="round" stroke-linejoin="round"/><path d="M724.5 240.5L716.8 271M724.5 240.5L732.2 271M724.5 240.5V271M720 255l10 12" stroke="#a8a8a8" stroke-width="0.8" fill="none" stroke-linecap="round" stroke-linejoin="round"/><text x="770.8" y="256.8" font-size="14" fill="#e0e0e0" text-anchor="middle">B</text><path d="M761 259H780.4L792 269.4" stroke="#d4d4d4" stroke-width="1" fill="none" stroke-linecap="round" stroke-linejoin="round"/><text x="815.8" y="254.2" font-size="11" fill="#e0e0e0" text-anchor="middle">11</text><path d="M810.4 256H822L828.6 267.5M828.6 271v-5q0-2.4 2.4-2.4h12.5q2.4 0 2.4 2.4v5M807 268l21 -1M846 267l30 2" stroke="#d4d4d4" stroke-width="1" fill="none" stroke-linecap="round" stroke-linejoin="round"/><text x="988.5" y="250.9" font-size="13.5" fill="#b4b4b4" textLength="188.8" lengthAdjust="spacingAndGlyphs">SZD-21-2„KOBUZ-2"(PROTOTYP)</text><path d="M976.9 254H1179.2M976.9 254L986.5 269.4" stroke="#d4d4d4" stroke-width="1" fill="none" stroke-linecap="round" stroke-linejoin="round"/><path d="M1217.7 244.4L1212 271M1217.7 244.4L1236 243.6L1258.2 271M1232 243.8l1 10" stroke="#a8a8a8" stroke-width="0.8" fill="none" stroke-linecap="round" stroke-linejoin="round"/><rect x="1190" y="238" width="90" height="12" fill="#2a2a2a" rx="2"/><rect x="820" y="218" width="150" height="6" fill="#2a2a2a" rx="2"/><rect x="820" y="230" width="150" height="6" fill="#2a2a2a" rx="2"/><rect x="1000" y="218" width="200" height="6" fill="#2a2a2a" rx="2"/><rect x="294" y="186" width="1014" height="728" filter="url(#grain)" opacity=".22"/><text x="697.5" y="909.5" font-size="7.5" font-weight="bold" font-style="italic" fill="#9a9a9a" textLength="75" lengthAdjust="spacingAndGlyphs">MODELARZ 12/2003</text><text x="834.3" y="909.5" font-size="7.5" font-weight="bold" font-style="italic" fill="#9a9a9a" textLength="75" lengthAdjust="spacingAndGlyphs">MODELARZ 12/2003</text><text x="1270" y="909" font-size="8" font-weight="bold" fill="#8a8a8a">17</text><rect x="795" y="902" width="30" height="10" fill="#3c3c3c"/></g><path d="M52 502.8L294 516.800" stroke="#bfdfdf" stroke-width="1.3" fill="none" stroke-dasharray="24 5 1.5 5.5" stroke-dashoffset="-3"/><path d="M294 516.800L588 533.800" stroke="#d2f2f2" stroke-width="1.900" fill="none" stroke-dasharray="24 5 1.5 5.5" stroke-dashoffset="7"/><path d="M52 653.3H294" stroke="#bfdfdf" stroke-width="1.3" fill="none" stroke-dasharray="24 5 1.5 5.5" stroke-dashoffset="14"/><path d="M294 653.300H588" stroke="#cdeeee" stroke-width="1.600" fill="none" stroke-dasharray="24 5 1.5 5.5" stroke-dashoffset="4"/><path d="M907.5 179V921" stroke="#b9d9d9" stroke-width="1" fill="none" stroke-dasharray="24 5 1.5 5.5" stroke-dashoffset="0"/><path d="M925.5 179V921" stroke="#b9d9d9" stroke-width="1" fill="none" stroke-dasharray="24 5 1.5 5.5" stroke-dashoffset="12"/><path d="M946.5 179V921" stroke="#b9d9d9" stroke-width="1" fill="none" stroke-dasharray="24 5 1.5 5.5" stroke-dashoffset="20"/><path d="M981.5 179V921" stroke="#b9d9d9" stroke-width="1" fill="none" stroke-dasharray="24 5 1.5 5.5" stroke-dashoffset="30"/><path d="M1033.5 179V921" stroke="#b9d9d9" stroke-width="1" fill="none" stroke-dasharray="24 5 1.5 5.5" stroke-dashoffset="33"/><path d="M1092.5 179V921" stroke="#b9d9d9" stroke-width="1" fill="none" stroke-dasharray="24 5 1.5 5.5" stroke-dashoffset="31"/><path d="M1130.5 179V921" stroke="#b9d9d9" stroke-width="1" fill="none" stroke-dasharray="24 5 1.5 5.5" stroke-dashoffset="4"/><path d="M1203.5 179V921" stroke="#b9d9d9" stroke-width="1" fill="none" stroke-dasharray="24 5 1.5 5.5" stroke-dashoffset="15"/><path d="M1230.5 179V921" stroke="#b9d9d9" stroke-width="1" fill="none" stroke-dasharray="24 5 1.5 5.5" stroke-dashoffset="22"/><path d="M1243.5 179V921" stroke="#b9d9d9" stroke-width="1" fill="none" stroke-dasharray="24 5 1.5 5.5" stroke-dashoffset="9"/><path d="M1246.5 179V921" stroke="#b9d9d9" stroke-width="1" fill="none" stroke-dasharray="24 5 1.5 5.5" stroke-dashoffset="27"/><path d="M1253.5 179V921" stroke="#b9d9d9" stroke-width="1" fill="none" stroke-dasharray="24 5 1.5 5.5" stroke-dashoffset="18"/></svg>
<div class="a" style="left:1576px;top:161px;width:284px;height:28px;background:linear-gradient(to bottom,#b7c7dc 0%,#cdd9e9 45%,#e3ebf6 100%);border-top:1px solid #1c1c1c;border-left:1px solid #1c1c1c;border-right:1px solid #1c1c1c;"></div>
<span class="t" style="left:1580.5px;top:167.70px;font-size:15px;line-height:15px;color:#000;letter-spacing:-0.163px;">Tools</span>
<svg class="a" style="left:1822px;top:165px;" width="20" height="20" viewBox="0 0 20 20"><path d="M2 17.500l5.500-5.500" stroke="#8a8a8a" stroke-width="1.800" stroke-linecap="round"/><ellipse cx="9" cy="10.500" rx="5.500" ry="3.200" fill="#b4b4b4" stroke="#8c8c8c" stroke-width=".7" transform="rotate(-40 9 10.500)"/><circle cx="13" cy="6.500" r="4.800" fill="#d2d2d2" stroke="#9a9a9a" stroke-width=".7"/><circle cx="14" cy="5" r="2.200" fill="#f8f8f8"/></svg>
<div class="a" style="left:1843px;top:168px;width:14px;height:13px;background:#bdbdbd;border:1px solid #9a9a9a;"></div>
<svg class="a" style="left:1843px;top:168px;" width="14" height="13" viewBox="0 0 14 13"><path d="M3.500 3l7 7M10.500 3l-7 7" stroke="#fff" stroke-width="2" fill="none"/></svg>
<div class="a" style="left:1577px;top:189px;width:283px;height:31px;background:#fff;border-right:1px solid #a0a0a0;border-bottom:1px solid #a0a0a0;"></div>
<div class="a" style="left:1578px;top:195px;width:22px;height:20px;background:#cce4f7;border:1px solid #99d1ff;"></div>
<div class="a" style="left:1646px;top:194px;width:1px;height:22px;background:#8c8c8c;"></div>
<div class="a" style="left:1650px;top:193px;width:100px;height:25px;background:#fff;border:1px solid #7a7a7a;"></div>
<div class="a" style="left:1732px;top:193px;width:18px;height:25px;background:#e1e1e1;border:1px solid #adadad;"></div>
<svg class="a" style="left:1735px;top:201.5px;" width="12" height="8" viewBox="0 0 12 8"><path d="M1.5 2l4.5 4.5L10.5 2" stroke="#444" stroke-width="1.3" fill="none"/></svg>
<span class="t" style="left:1653.4px;top:198.30px;font-size:15px;line-height:15px;color:#000;letter-spacing:-0.643px;">Sketch</span>
<div class="a" style="left:1577px;top:220px;width:283px;height:467px;background:#f0f0f0;"></div>
<div class="a" style="left:1577px;top:220px;width:262px;height:467px;background:#dfe6f2;"></div>
<div class="a" style="left:1839px;top:220px;width:21px;height:467px;background:#f0f0f0;"></div>
<div class="a" style="left:1840px;top:242px;width:19px;height:338px;background:#cdcdcd;"></div>
<svg class="a" style="left:1842px;top:226px;" width="14" height="10" viewBox="0 0 14 10"><path d="M2 8l5-5 5 5" stroke="#444" stroke-width="1.600" fill="none"/></svg>
<svg class="a" style="left:1842px;top:671px;" width="14" height="10" viewBox="0 0 14 10"><path d="M2 2l5 5 5-5" stroke="#444" stroke-width="1.600" fill="none"/></svg>
<div class="a" style="left:1577px;top:222px;width:261px;height:126px;background:#f1f3fa;border:1px solid #c7d6ea;border-radius:5px 5px 0 0;"></div>
<div class="a" style="left:1578px;top:223px;width:259px;height:25px;background:linear-gradient(to right,#ffffff 0%,#f6f8fc 20%,#e2e8f3 100%);border-radius:4px 4px 0 0;"></div>
<div class="a" style="left:1577px;top:222px;width:3px;height:126px;background:linear-gradient(to right,#b9cde6,#dfe8f5);"></div>
<div class="a" style="left:1835px;top:225px;width:3px;height:123px;background:linear-gradient(to left,#b9cde6,#dfe8f5);"></div>
<div class="a" style="left:1577px;top:345px;width:261px;height:3px;background:linear-gradient(to top,#b4c9e4,#e3ebf6);"></div>
<span class="t" style="left:1591.5px;top:228.73px;font-size:14.5px;line-height:14.5px;color:#1e6ec8;letter-spacing:-0.070px;font-weight:bold;">Snap Modes</span>
<svg class="a" style="left:1815px;top:226px;" width="17" height="17" viewBox="0 0 17 17"><circle cx="8.500" cy="8.500" r="7.500" fill="#fff" stroke="#c2d3ea" stroke-width="1"/><path d="M5.500 8l3-3 3 3M5.500 12l3-3 3 3" stroke="#1e5fb4" stroke-width="1.500" fill="none"/></svg>
<div class="a" style="left:1577px;top:350.5px;width:261px;height:97.5px;background:#f1f3fa;border:1px solid #c7d6ea;border-radius:5px 5px 0 0;"></div>
<div class="a" style="left:1578px;top:351.5px;width:259px;height:25px;background:linear-gradient(to right,#ffffff 0%,#f6f8fc 20%,#e2e8f3 100%);border-radius:4px 4px 0 0;"></div>
<div class="a" style="left:1577px;top:350.5px;width:3px;height:97.5px;background:linear-gradient(to right,#b9cde6,#dfe8f5);"></div>
<div class="a" style="left:1835px;top:353.5px;width:3px;height:94.5px;background:linear-gradient(to left,#b9cde6,#dfe8f5);"></div>
<div class="a" style="left:1577px;top:445px;width:261px;height:3px;background:linear-gradient(to top,#b4c9e4,#e3ebf6);"></div>
<span class="t" style="left:1591.5px;top:357.23px;font-size:14.5px;line-height:14.5px;color:#1e6ec8;letter-spacing:-0.452px;font-weight:bold;">Line</span>
<svg class="a" style="left:1815px;top:354.5px;" width="17" height="17" viewBox="0 0 17 17"><circle cx="8.500" cy="8.500" r="7.500" fill="#fff" stroke="#c2d3ea" stroke-width="1"/><path d="M5.500 8l3-3 3 3M5.500 12l3-3 3 3" stroke="#1e5fb4" stroke-width="1.500" fill="none"/></svg>
<div class="a" style="left:1577px;top:450.5px;width:261px;height:97.5px;background:#f1f3fa;border:1px solid #c7d6ea;border-radius:5px 5px 0 0;"></div>
<div class="a" style="left:1578px;top:451.5px;width:259px;height:25px;background:linear-gradient(to right,#ffffff 0%,#f6f8fc 20%,#e2e8f3 100%);border-radius:4px 4px 0 0;"></div>
<div class="a" style="left:1577px;top:450.5px;width:3px;height:97.5px;background:linear-gradient(to right,#b9cde6,#dfe8f5);"></div>
<div class="a" style="left:1835px;top:453.5px;width:3px;height:94.5px;background:linear-gradient(to left,#b9cde6,#dfe8f5);"></div>
<div class="a" style="left:1577px;top:545px;width:261px;height:3px;background:linear-gradient(to top,#b4c9e4,#e3ebf6);"></div>
<span class="t" style="left:1591.5px;top:457.23px;font-size:14.5px;line-height:14.5px;color:#1e6ec8;letter-spacing:-0.191px;font-weight:bold;">Circle/Ellipse</span>
<svg class="a" style="left:1815px;top:454.5px;" width="17" height="17" viewBox="0 0 17 17"><circle cx="8.500" cy="8.500" r="7.500" fill="#fff" stroke="#c2d3ea" stroke-width="1"/><path d="M5.500 8l3-3 3 3M5.500 12l3-3 3 3" stroke="#1e5fb4" stroke-width="1.500" fill="none"/></svg>
<div class="a" style="left:1577px;top:550.5px;width:261px;height:97.5px;background:#f1f3fa;border:1px solid #c7d6ea;border-radius:5px 5px 0 0;"></div>
<div class="a" style="left:1578px;top:551.5px;width:259px;height:25px;background:linear-gradient(to right,#ffffff 0%,#f6f8fc 20%,#e2e8f3 100%);border-radius:4px 4px 0 0;"></div>
<div class="a" style="left:1577px;top:550.5px;width:3px;height:97.5px;background:linear-gradient(to right,#b9cde6,#dfe8f5);"></div>
<div class="a" style="left:1835px;top:553.5px;width:3px;height:94.5px;background:linear-gradient(to left,#b9cde6,#dfe8f5);"></div>
<div class="a" style="left:1577px;top:645px;width:261px;height:3px;background:linear-gradient(to top,#b4c9e4,#e3ebf6);"></div>
<span class="t" style="left:1591.5px;top:557.23px;font-size:14.5px;line-height:14.5px;color:#1e6ec8;letter-spacing:-0.226px;font-weight:bold;">Arc</span>
<svg class="a" style="left:1815px;top:554.5px;" width="17" height="17" viewBox="0 0 17 17"><circle cx="8.500" cy="8.500" r="7.500" fill="#fff" stroke="#c2d3ea" stroke-width="1"/><path d="M5.500 8l3-3 3 3M5.500 12l3-3 3 3" stroke="#1e5fb4" stroke-width="1.500" fill="none"/></svg>
<div class="a" style="left:1577px;top:650.5px;width:261px;height:36.5px;background:#f1f3fa;border:1px solid #c7d6ea;border-radius:5px 5px 0 0;border-bottom:none;"></div>
<div class="a" style="left:1578px;top:651.5px;width:259px;height:25px;background:linear-gradient(to right,#ffffff 0%,#f6f8fc 20%,#e2e8f3 100%);border-radius:4px 4px 0 0;"></div>
<div class="a" style="left:1577px;top:650.5px;width:3px;height:36.5px;background:linear-gradient(to right,#b9cde6,#dfe8f5);"></div>
<div class="a" style="left:1835px;top:653.5px;width:3px;height:33.5px;background:linear-gradient(to left,#b9cde6,#dfe8f5);"></div>
<span class="t" style="left:1591.5px;top:657.23px;font-size:14.5px;line-height:14.5px;color:#1e6ec8;letter-spacing:-0.020px;font-weight:bold;">Curve</span>
<svg class="a" style="left:1815px;top:654.5px;" width="17" height="17" viewBox="0 0 17 17"><circle cx="8.500" cy="8.500" r="7.500" fill="#fff" stroke="#c2d3ea" stroke-width="1"/><path d="M5.500 8l3-3 3 3M5.500 12l3-3 3 3" stroke="#1e5fb4" stroke-width="1.500" fill="none"/></svg>
<div class="a" style="left:1617px;top:256px;width:28px;height:28px;background:#ffc373;border:1px solid #00007a;"></div>
<div class="a" style="left:1645px;top:256px;width:28px;height:28px;background:#ffc373;border:1px solid #00007a;"></div>
<div class="a" style="left:1701px;top:256px;width:28px;height:28px;background:#ffc373;border:1px solid #00007a;"></div>
<div class="a" style="left:1785px;top:256px;width:28px;height:28px;background:#ffc373;border:1px solid #00007a;"></div>
<div class="a" style="left:1589px;top:312px;width:28px;height:28px;background:#ffc373;border:1px solid #00007a;"></div>
<div class="a" style="left:1617px;top:312px;width:28px;height:28px;background:#ffc373;border:1px solid #00007a;"></div>
<div class="a" style="left:1645px;top:312px;width:28px;height:28px;background:#ffc373;border:1px solid #00007a;"></div>
<div class="a" style="left:1577px;top:687px;width:283px;height:33px;background:#f0f0f0;"></div>
<div class="a" style="left:1577px;top:689px;width:66px;height:26px;background:#fcfcfc;border:1px solid #dadada;border-top:none;"></div>
<div class="a" style="left:1643px;top:691px;width:66px;height:23px;background:#f0f0f0;border:1px solid #dadada;"></div>
<span class="t" style="left:1600.6px;top:695.70px;font-size:15px;line-height:15px;color:#000;letter-spacing:-0.103px;">Tools</span>
<span class="t" style="left:1665.8px;top:694.30px;font-size:15px;line-height:15px;color:#000;letter-spacing:-0.530px;">Blocks</span>
<div class="a" style="left:1576px;top:720px;width:284px;height:28px;background:linear-gradient(to bottom,#b7c7dc 0%,#cdd9e9 45%,#e3ebf6 100%);border-top:1px solid #1c1c1c;border-left:1px solid #1c1c1c;border-right:1px solid #1c1c1c;"></div>
<span class="t" style="left:1580.5px;top:726.70px;font-size:15px;line-height:15px;color:#000;letter-spacing:-0.131px;">Measurement Info</span>
<svg class="a" style="left:1822px;top:724px;" width="20" height="20" viewBox="0 0 20 20"><path d="M2 17.500l5.500-5.500" stroke="#8a8a8a" stroke-width="1.800" stroke-linecap="round"/><ellipse cx="9" cy="10.500" rx="5.500" ry="3.200" fill="#b4b4b4" stroke="#8c8c8c" stroke-width=".7" transform="rotate(-40 9 10.500)"/><circle cx="13" cy="6.500" r="4.800" fill="#d2d2d2" stroke="#9a9a9a" stroke-width=".7"/><circle cx="14" cy="5" r="2.200" fill="#f8f8f8"/></svg>
<div class="a" style="left:1843px;top:727px;width:14px;height:13px;background:#bdbdbd;border:1px solid #9a9a9a;"></div>
<svg class="a" style="left:1843px;top:727px;" width="14" height="13" viewBox="0 0 14 13"><path d="M3.500 3l7 7M10.500 3l-7 7" stroke="#fff" stroke-width="2" fill="none"/></svg>
<div class="a" style="left:1580px;top:755px;width:23px;height:21px;background:#f6f6f6;border-top:1px solid #fff;border-left:1px solid #a0a0a0;"></div>
<svg class="a" style="left:1585px;top:760px;" width="13" height="12" viewBox="0 0 13 12"><rect x="0.5" y="0.5" width="12" height="11" fill="#fff" stroke="#000" stroke-width="1.2"/><path d="M2.500 3.500h1M5 3.500h6M2.500 6h1M5 6h6M2.500 8.500h1M5 8.500h6" stroke="#000" stroke-width="1"/></svg>
<svg class="a" style="left:1609px;top:760px;" width="13" height="13" viewBox="0 0 13 13"><path d="M2 2l9 9M11 2l-9 9" stroke="#222" stroke-width="2.200" fill="none"/></svg>
<div class="a" style="left:1580px;top:780px;width:276px;height:142px;background:#fff;border:1px solid #a0a0a0;"></div>
<div class="a" style="left:1834px;top:781px;width:21px;height:140px;background:#f0f0f0;"></div>
<svg class="a" style="left:1838px;top:788px;" width="13" height="9" viewBox="0 0 13 9"><path d="M2 7l4.500-4.500 4.500 4.500" stroke="#bcbcbc" stroke-width="1.500" fill="none"/></svg>
<svg class="a" style="left:1838px;top:904px;" width="13" height="9" viewBox="0 0 13 9"><path d="M2 2l4.500 4.500 4.500-4.500" stroke="#bcbcbc" stroke-width="1.500" fill="none"/></svg>
<div class="a" style="left:1861px;top:162px;width:25px;height:118px;background:#fff;"></div>
<span class="t" style="left:1882.5px;top:185.7px;font-size:15px;line-height:15px;color:#000;transform-origin:0 0;transform:rotate(90deg);letter-spacing:-0.349px;">Selection Info</span>
<svg class="a" style="left:1866px;top:166px;" width="14" height="16" viewBox="0 0 14 16"><path d="M2 1v11l3-2.500 2 4.500 2-1-2-4.300h4z" fill="#00007a"/><path d="M10.500 12.500h2M10.500 14.500h2" stroke="#3a3ad0" stroke-width="1.600"/></svg>
<div class="a" style="left:1887px;top:162px;width:33px;height:468px;background:#f0f0f0;border-left:1px solid #fff;border-bottom:1px solid #a0a0a0;"></div>
<div class="a" style="left:1891px;top:165px;width:26px;height:2px;background-image:repeating-linear-gradient(to right,#a8a8a8 0 1px,transparent 1px 3px);"></div>
<div class="a" style="left:1892px;top:166px;width:26px;height:2px;background-image:repeating-linear-gradient(to right,#fff 0 1px,transparent 1px 3px);opacity:.9;"></div>
<div class="a" style="left:1890px;top:203px;width:26px;height:1px;background:#8c8c8c;"></div>
<div class="a" style="left:1890px;top:269px;width:26px;height:1px;background:#8c8c8c;"></div>
<div class="a" style="left:1890px;top:335px;width:26px;height:1px;background:#8c8c8c;"></div>
<div class="a" style="left:1890px;top:371px;width:26px;height:1px;background:#8c8c8c;"></div>
<div class="a" style="left:1890px;top:527px;width:26px;height:1px;background:#8c8c8c;"></div>
<div class="a" style="left:1890px;top:595px;width:26px;height:1px;background:#8c8c8c;"></div>
<div class="a" style="left:0px;top:947px;width:1920px;height:1px;background:#fff;"></div>
<div class="a" style="left:4px;top:951px;width:2px;height:46px;background-image:repeating-linear-gradient(to bottom,#a8a8a8 0 1px,transparent 1px 3px);"></div>
<div class="a" style="left:5px;top:952px;width:2px;height:46px;background-image:repeating-linear-gradient(to bottom,#fff 0 1px,transparent 1px 3px);opacity:.9;"></div>
<div class="a" style="left:56px;top:953px;width:1px;height:41px;background:#8c8c8c;"></div>
<svg class="a" style="left:13px;top:968px;" width="14" height="14" viewBox="0 0 14 14"><path d="M2 2l10 10M12 2L2 12" stroke="#b0b0b0" stroke-width="3" fill="none"/></svg>
<svg class="a" style="left:36px;top:968px;" width="15" height="14" viewBox="0 0 15 14"><rect x="0.5" y="0.5" width="14" height="12" fill="#f4f4f4" stroke="#9a9a9a"/><path d="M0.5 3.5h14M0.5 6.5h14M0.5 9.5h14M4.5 3.5v9M8 3.5v9M11.5 3.5v9" stroke="#9a9a9a" stroke-width="1" fill="none"/></svg>
<div class="a" style="left:1078px;top:953px;width:1px;height:41px;background:#8c8c8c;"></div>
<div class="a" style="left:1150px;top:953px;width:1px;height:41px;background:#8c8c8c;"></div>
<div class="a" style="left:1244px;top:953px;width:1px;height:41px;background:#8c8c8c;"></div>
<div class="a" style="left:1153px;top:963px;width:22px;height:21px;background:#cce4f7;border:1px solid #99d1ff;"></div>
<div class="a" style="left:0px;top:999px;width:1920px;height:1px;background:#a0a0a0;"></div>
<div class="a" style="left:0px;top:1000px;width:1920px;height:1px;background:#fff;"></div>
<span class="t" style="left:9px;top:1006.05px;font-size:15px;line-height:15px;color:#000;letter-spacing:-0.148px;">Select object(s)</span>
<span class="t" style="left:1335px;top:1008.80px;font-size:15px;line-height:15px;color:#000;letter-spacing:-1.212px;">SNAP</span>
<span class="t" style="left:1380.7px;top:1008.80px;font-size:15px;line-height:15px;color:#000;letter-spacing:-1.946px;">GEO</span>
<div class="a" style="left:1374px;top:1002px;width:1px;height:26px;background:#dcdcdc;"></div>
<div class="a" style="left:1411px;top:1002px;width:1px;height:26px;background:#dcdcdc;"></div>
<div class="a" style="left:1776px;top:1002px;width:1px;height:26px;background:#dcdcdc;"></div>
<div class="a" style="left:1845px;top:1002px;width:1px;height:26px;background:#dcdcdc;"></div>
<div class="a" style="left:1439px;top:1004px;width:95px;height:24px;background:#fff;border:1px solid #000;"></div>
<div class="a" style="left:1440px;top:1005px;width:92px;height:22px;overflow:hidden;"><span class="t" style="left:6px;top:3.80px;font-size:15px;line-height:15px;color:#000;letter-spacing:-0.3px;">488,971 mm</span></div>
<div class="a" style="left:1430px;top:1005px;width:7px;height:7px;background:#fff;border:1px solid #000;border-top-width:2px;"></div>
<span class="t" style="left:1431px;top:1015.11px;font-size:10.5px;line-height:10.5px;color:#000;">X</span>
<div class="a" style="left:1557px;top:1004px;width:96px;height:24px;background:#fff;border:1px solid #000;"></div>
<div class="a" style="left:1558px;top:1005px;width:93px;height:22px;overflow:hidden;"><span class="t" style="left:6px;top:3.80px;font-size:15px;line-height:15px;color:#000;letter-spacing:-0.3px;">2255,7184 mm</span></div>
<div class="a" style="left:1548px;top:1005px;width:7px;height:7px;background:#fff;border:1px solid #000;border-top-width:2px;"></div>
<span class="t" style="left:1549px;top:1015.11px;font-size:10.5px;line-height:10.5px;color:#000;">Y</span>
<div class="a" style="left:1676px;top:1004px;width:95px;height:24px;background:#fff;border:1px solid #333;"></div>
<div class="a" style="left:1677px;top:1005px;width:92px;height:22px;overflow:hidden;"><span class="t" style="left:6px;top:3.80px;font-size:15px;line-height:15px;color:#9a9a9a;letter-spacing:-0.3px;">0 mm</span></div>
<div class="a" style="left:1667px;top:1005px;width:7px;height:7px;background:#fff;border:1px solid #000;border-top-width:2px;"></div>
<span class="t" style="left:1668px;top:1015.11px;font-size:10.5px;line-height:10.5px;color:#000;">Z</span>
<span class="t" style="left:1780px;top:1007.30px;font-size:15px;line-height:15px;color:#000;letter-spacing:-0.840px;">7%</span>
<span class="t" style="left:1850px;top:1007.30px;font-size:15px;line-height:15px;color:#000;letter-spacing:-0.707px;">22:07</span>
<div class="a" style="left:587px;top:271px;width:952px;height:632px;background:#f0f0f0;border:1px solid #1883d7;box-shadow:0 2px 16px 2px rgba(0,0,0,.38);"></div>
<div class="a" style="left:588px;top:272px;width:950px;height:37px;background:#fff;"></div>
<svg class="a" style="left:599px;top:282px;" width="16" height="16" viewBox="0 0 16 16"><rect x="0.5" y="0.5" width="15" height="15" fill="#00e5ee" stroke="#222" stroke-width="1.4"/><path d="M1.5 14.5V11l3.5-3.5 3 3 2-2 4.5 4v2z" fill="#0a9a0a" stroke="#000" stroke-width=".8"/><circle cx="10.5" cy="4.5" r="2" fill="#ffe400" stroke="#000" stroke-width=".8"/><path d="M11 11.5l3.5 3h-7z" fill="#ffe400"/></svg>
<span class="t" style="left:622.6px;top:283.30px;font-size:15px;line-height:15px;color:#000;letter-spacing:-0.081px;">Image Manager</span>
<svg class="a" style="left:1509px;top:283px;" width="16" height="16" viewBox="0 0 16 16"><path d="M2 2l12 12M14 2L2 14" stroke="#000" stroke-width="1.2" fill="none"/></svg>
<span class="t" style="left:612px;top:335.30px;font-size:15px;line-height:15px;color:#000;letter-spacing:-0.120px;"><u>I</u>mage List</span>
<div class="a" style="left:718px;top:342px;width:559px;height:2px;background:#6d6d6d;"></div>
<svg class="a" style="left:1290px;top:331px;" width="16" height="16" viewBox="0 0 16 16"><rect x="1" y="1" width="4.500" height="5" fill="#fff" stroke="#000" stroke-width="1"/><rect x="1.500" y="1.500" width="3.500" height="2" fill="#00e0e8"/><rect x="1.500" y="3.500" width="3.500" height="2" fill="#e00000"/><path d="M.5 8h5.500" stroke="#000" stroke-width="1"/><rect x="9" y="5" width="4.500" height="5.500" fill="#fff" stroke="#000" stroke-width="1"/><path d="M9.500 10l3.500-4.500v4.500z" fill="#00b000"/><path d="M8.500 12.500h5.500" stroke="#000" stroke-width="1"/></svg>
<svg class="a" style="left:1313px;top:331px;" width="16" height="16" viewBox="0 0 16 16"><rect x="1" y="1.5" width="2" height="2" fill="#fff" stroke="#00008a" stroke-width=".9"/><path d="M3.500 2.5h3" stroke="#00008a" stroke-width="1"/><rect x="7.500" y="1.5" width="2" height="2" fill="#fff" stroke="#00008a" stroke-width=".9"/><path d="M10.500 2.5h4.500" stroke="#00008a" stroke-width="1" stroke-dasharray="2 .8"/><rect x="1" y="6.5" width="2" height="2" fill="#fff" stroke="#00008a" stroke-width=".9"/><path d="M3.500 7.5h3" stroke="#00008a" stroke-width="1"/><rect x="7.500" y="6.5" width="2" height="2" fill="#fff" stroke="#00008a" stroke-width=".9"/><path d="M10.500 7.5h4.500" stroke="#00008a" stroke-width="1" stroke-dasharray="2 .8"/><rect x="1" y="11.5" width="2" height="2" fill="#fff" stroke="#00008a" stroke-width=".9"/><path d="M3.500 12.5h3" stroke="#00008a" stroke-width="1"/><rect x="7.500" y="11.5" width="2" height="2" fill="#fff" stroke="#00008a" stroke-width=".9"/><path d="M10.500 12.5h4.500" stroke="#00008a" stroke-width="1" stroke-dasharray="2 .8"/></svg>
<svg class="a" style="left:1336px;top:331px;" width="16" height="16" viewBox="0 0 16 16"><path d="M1 3.500h15" stroke="#00008a" stroke-width="1"/><path d="M4 1.500h12" stroke="#000" stroke-width="1" stroke-dasharray="3 1"/><path d="M1.500 4v10" stroke="#00008a" stroke-width="1" stroke-dasharray="1 1"/><path d="M4 5.5h12" stroke="#000" stroke-width="1.200" stroke-dasharray="3 1"/><path d="M4 7.5h12" stroke="#000" stroke-width="1.200" stroke-dasharray="3 1"/><path d="M4 9.5h12" stroke="#000" stroke-width="1.200" stroke-dasharray="3 1"/><path d="M4 11.5h12" stroke="#000" stroke-width="1.200" stroke-dasharray="3 1"/><path d="M4 13.5h12" stroke="#000" stroke-width="1.200" stroke-dasharray="3 1"/></svg>
<div class="a" style="left:602px;top:372px;width:784px;height:355px;background:#fff;border:1px solid #828790;"></div>
<div class="a" style="left:605px;top:375px;width:779px;height:24px;background:#f0f0f0;"></div>
<div class="a" style="left:604px;top:398px;width:780px;height:1px;background:#a8a8a8;"></div>
<div class="a" style="left:604px;top:399px;width:780px;height:1px;background:#5f5f5f;"></div>
<div class="a" style="left:743px;top:374px;width:1px;height:26px;background:#a8a8a8;"></div>
<div class="a" style="left:744px;top:374px;width:1px;height:26px;background:#5f5f5f;"></div>
<div class="a" style="left:862px;top:374px;width:1px;height:26px;background:#a8a8a8;"></div>
<div class="a" style="left:863px;top:374px;width:1px;height:26px;background:#5f5f5f;"></div>
<span class="t" style="left:610px;top:379.80px;font-size:15px;line-height:15px;color:#000;letter-spacing:-0.128px;">Name</span>
<span class="t" style="left:751px;top:379.80px;font-size:15px;line-height:15px;color:#000;letter-spacing:-0.421px;">Status</span>
<span class="t" style="left:870px;top:379.80px;font-size:15px;line-height:15px;color:#000;letter-spacing:-0.714px;">Path</span>
<div class="a" style="left:603px;top:424px;width:782px;height:1px;background:#f0f0f0;"></div>
<div class="a" style="left:603px;top:448px;width:782px;height:1px;background:#f0f0f0;"></div>
<div class="a" style="left:603px;top:472px;width:782px;height:1px;background:#f0f0f0;"></div>
<div class="a" style="left:603px;top:496px;width:782px;height:1px;background:#f0f0f0;"></div>
<div class="a" style="left:603px;top:520px;width:782px;height:1px;background:#f0f0f0;"></div>
<div class="a" style="left:603px;top:544px;width:782px;height:1px;background:#f0f0f0;"></div>
<div class="a" style="left:603px;top:568px;width:782px;height:1px;background:#f0f0f0;"></div>
<div class="a" style="left:603px;top:592px;width:782px;height:1px;background:#f0f0f0;"></div>
<div class="a" style="left:603px;top:616px;width:782px;height:1px;background:#f0f0f0;"></div>
<div class="a" style="left:603px;top:640px;width:782px;height:1px;background:#f0f0f0;"></div>
<div class="a" style="left:603px;top:664px;width:782px;height:1px;background:#f0f0f0;"></div>
<div class="a" style="left:603px;top:688px;width:782px;height:1px;background:#f0f0f0;"></div>
<div class="a" style="left:603px;top:712px;width:782px;height:1px;background:#f0f0f0;"></div>
<div class="a" style="left:744px;top:401px;width:1px;height:305px;background:#f0f0f0;"></div>
<div class="a" style="left:863px;top:401px;width:1px;height:305px;background:#f0f0f0;"></div>
<div class="a" style="left:604px;top:449px;width:781px;height:23px;background:#f0f0f0;"></div>
<span class="t" style="left:610px;top:405.30px;font-size:15px;line-height:15px;color:#000;letter-spacing:-0.398px;">kobuz_ca³y_neg</span>
<span class="t" style="left:751px;top:405.30px;font-size:15px;line-height:15px;color:#000;letter-spacing:-0.009px;">Loaded</span>
<span class="t" style="left:870px;top:405.30px;font-size:15px;line-height:15px;color:#000;letter-spacing:0.011px;">D:\!Samoloty\ADW Tutorial - Kobuz\Lekcja 1 - obrys\kobuz_ca³y_neg.jpg</span>
<span class="t" style="left:610px;top:429.30px;font-size:15px;line-height:15px;color:#000;letter-spacing:-0.310px;">ImageStyle_0</span>
<span class="t" style="left:751px;top:429.30px;font-size:15px;line-height:15px;color:#000;letter-spacing:0.098px;">Unloaded</span>
<span class="t" style="left:870px;top:429.30px;font-size:15px;line-height:15px;color:#000;letter-spacing:-0.125px;">C:\Podklady\Kobuz\kobuz_ca³y_neg.jpg</span>
<span class="t" style="left:610px;top:453.30px;font-size:15px;line-height:15px;color:#000;letter-spacing:-0.506px;">kobuz_cały_neg_0</span>
<span class="t" style="left:751px;top:453.30px;font-size:15px;line-height:15px;color:#000;letter-spacing:-0.009px;">Loaded</span>
<span class="t" style="left:870px;top:453.30px;font-size:15px;line-height:15px;color:#000;letter-spacing:0.036px;">C:\mgr\Dysk Google\!Samoloty\ADW Tutorial - Kobuz\kobuz_cały_neg.jpg</span>
<div class="a" style="left:603px;top:706px;width:782px;height:20px;background:#f0f0f0;"></div>
<div class="a" style="left:625px;top:707px;width:680px;height:18px;background:#cdcdcd;"></div>
<svg class="a" style="left:608px;top:710px;" width="10" height="12" viewBox="0 0 10 12"><path d="M7 1.500L2.500 6l4.500 4.500" stroke="#444" stroke-width="1.600" fill="none"/></svg>
<svg class="a" style="left:1368px;top:710px;" width="10" height="12" viewBox="0 0 10 12"><path d="M3 1.500L7.500 6l-4.500 4.500" stroke="#444" stroke-width="1.600" fill="none"/></svg>
<div class="a" style="left:604px;top:748px;width:784px;height:87px;border:1px solid #dcdcdc;"></div>
<div class="a" style="left:610px;top:739px;width:98px;height:18px;background:#f0f0f0;"></div>
<span class="t" style="left:613px;top:740.30px;font-size:15px;line-height:15px;color:#000;letter-spacing:0.060px;">Image details</span>
<span class="t" style="left:618px;top:778.30px;font-size:15px;line-height:15px;color:#000;letter-spacing:-0.669px;">Size:</span>
<span class="t" style="left:686px;top:778.30px;font-size:15px;line-height:15px;color:#000;letter-spacing:-0.227px;">2448 x 1757 pixels</span>
<span class="t" style="left:618px;top:798.30px;font-size:15px;line-height:15px;color:#000;letter-spacing:-0.456px;">Status:</span>
<span class="t" style="left:686px;top:798.30px;font-size:15px;line-height:15px;color:#000;letter-spacing:-0.009px;">Loaded</span>
<span class="t" style="left:1001px;top:778.30px;font-size:15px;line-height:15px;color:#000;letter-spacing:0.024px;">Color Depth:</span>
<span class="t" style="left:1133px;top:778.30px;font-size:15px;line-height:15px;color:#000;letter-spacing:-0.342px;">24</span>
<span class="t" style="left:1001px;top:798.30px;font-size:15px;line-height:15px;color:#000;letter-spacing:-0.144px;">Memory usage:</span>
<span class="t" style="left:1133px;top:798.30px;font-size:15px;line-height:15px;color:#000;letter-spacing:-0.506px;">3072 KB</span>
<div class="a" style="left:1419px;top:373px;width:98px;height:33px;background:#e1e1e1;border:1px solid #adadad;"></div>
<span class="t" style="left:1452.5px;top:382.10px;font-size:15px;line-height:15px;color:#000;letter-spacing:0.331px;"><u>N</u>ew</span>
<div class="a" style="left:1419px;top:423px;width:98px;height:33px;background:#e1e1e1;border:1px solid #adadad;"></div>
<span class="t" style="left:1446.25px;top:432.10px;font-size:15px;line-height:15px;color:#000;letter-spacing:0.023px;"><u>D</u>elete</span>
<div class="a" style="left:1419px;top:473px;width:98px;height:33px;background:#e1e1e1;border:1px solid #adadad;"></div>
<span class="t" style="left:1439.25px;top:482.10px;font-size:15px;line-height:15px;color:#000;letter-spacing:-0.558px;"><u>B</u>rowse...</span>
<div class="a" style="left:1419px;top:523px;width:98px;height:33px;background:#e1e1e1;border:1px solid #adadad;"></div>
<span class="t" style="left:1444.75px;top:532.10px;font-size:15px;line-height:15px;color:#000;letter-spacing:-0.205px;"><u>E</u>mbed</span>
<div class="a" style="left:1419px;top:573px;width:98px;height:33px;background:#cccccc;border:1px solid #bfbfbf;"></div>
<span class="t" style="left:1447px;top:582.10px;font-size:15px;line-height:15px;color:#838383;letter-spacing:-0.642px;">Re<u>s</u>ize</span>
<div class="a" style="left:1419px;top:623px;width:98px;height:33px;background:#e1e1e1;border:1px solid #adadad;"></div>
<span class="t" style="left:1444.25px;top:632.10px;font-size:15px;line-height:15px;color:#000;letter-spacing:-0.006px;"><u>U</u>nload</span>
<div class="a" style="left:1419px;top:673px;width:98px;height:33px;background:#e1e1e1;border:1px solid #adadad;"></div>
<span class="t" style="left:1430px;top:682.10px;font-size:15px;line-height:15px;color:#000;letter-spacing:-0.374px;"><u>P</u>roperties...</span>
<div class="a" style="left:711px;top:851px;width:98px;height:33px;background:#e1e1e1;border:1px solid #adadad;"></div>
<span class="t" style="left:742px;top:860.10px;font-size:15px;line-height:15px;color:#000;letter-spacing:-0.252px;">Insert</span>
<div class="a" style="left:843px;top:851px;width:98px;height:33px;background:#e1e1e1;border:1px solid #adadad;"></div>
<span class="t" style="left:870px;top:860.10px;font-size:15px;line-height:15px;color:#000;letter-spacing:-0.449px;">Cancel</span>
<div class="a" style="left:1285px;top:851px;width:98px;height:33px;background:#cccccc;border:1px solid #bfbfbf;"></div>
<span class="t" style="left:1314.5px;top:860.10px;font-size:15px;line-height:15px;color:#838383;letter-spacing:0.296px;">Apply</span>
<div class="a" style="left:1419px;top:851px;width:98px;height:33px;background:#e1e1e1;border:1px solid #adadad;"></div>
<span class="t" style="left:1452.25px;top:860.10px;font-size:15px;line-height:15px;color:#000;letter-spacing:0.162px;">Help</span>
<svg class="a" style="left:13px;top:64px;" width="24" height="24" viewBox="0 0 24 24"><path d="M4.5 2.5h11l5.5 5.5v13.5h-16.500z" stroke="#222" stroke-width="1.2" fill="#fff" /><path d="M15.500 2.500v5.500h5.500" stroke="#222" stroke-width="1.1" fill="none" stroke-linecap="round" stroke-linejoin="round" /></svg>
<svg class="a" style="left:43px;top:64px;" width="24" height="24" viewBox="0 0 24 24"><path d="M2.500 8.500h7l2 2h6.500v3h-12l-3.500 7.500z" fill="#f3efb0" stroke="#555520" stroke-width="1"/><path d="M2.500 21l4-8h15.500l-4.500 8z" fill="#9c9a42" stroke="#444418" stroke-width="1"/><path d="M13 6.500c2-3.500 5.500-3.500 7.500-.5" stroke="#222" stroke-width="1.1" fill="none" stroke-linecap="round" stroke-linejoin="round" /><path d="M21.500 3.500v4.500h-4.500z" fill="#222"/></svg>
<svg class="a" style="left:73px;top:64px;" width="24" height="24" viewBox="0 0 24 24"><path d="M3 2.500h18v19h-16l-2-2z" fill="#8e8c3c" stroke="#3c3c14" stroke-width="1"/><rect x="6.500" y="3" width="11" height="8.500" fill="#d8d8d8" stroke="#777" stroke-width=".6"/><rect x="7.500" y="14.500" width="10" height="7" fill="#3a3a3a"/><rect x="14" y="15.500" width="2.500" height="5" fill="#eee"/></svg>
<div class="a" style="left:102px;top:63px;width:1px;height:28px;background:#8c8c8c;"></div>
<svg class="a" style="left:109px;top:64px;" width="24" height="24" viewBox="0 0 24 24"><path d="M6 10l2-7h10l-1 7" fill="#fff" stroke="#333" stroke-width="1"/><path d="M9.500 5.500h6M9 7.500h6" stroke="#555" stroke-width=".9"/><path d="M2.500 12.500l3.500-3h14l2 2.500v6l-3 3.500h-16.500z" fill="#e6e6e6" stroke="#333" stroke-width="1"/><path d="M2.500 15.500h16.500l3-3M2.500 18h16.500l3-3M19 15.500v6" stroke="#333" stroke-width=".9" fill="none"/><rect x="10" y="13" width="5" height="1.300" fill="#e8d800"/></svg>
<svg class="a" style="left:138px;top:64px;" width="24" height="24" viewBox="0 0 24 24"><path d="M3.500 2.500h9.500l4.500 4.500v14.500h-14z" stroke="#222" stroke-width="1.200" fill="#fff" /><path d="M13 2.500v4.500h4.500" stroke="#222" stroke-width="1.1" fill="none" stroke-linecap="round" stroke-linejoin="round" /><circle cx="14" cy="14.500" r="4.600" fill="#bfe9f0" stroke="#555" stroke-width="1.300"/><path d="M17.500 18l4.500 4.500" stroke="#222" stroke-width="2.200"/></svg>
<div class="a" style="left:168px;top:63px;width:1px;height:28px;background:#8c8c8c;"></div>
<svg class="a" style="left:175px;top:64px;" width="24" height="24" viewBox="0 0 24 24"><path d="M8 2.500l6 13M16 2.500l-6 13" stroke="#a6a6a6" stroke-width="1.1" fill="none" stroke-linecap="round" stroke-linejoin="round" /><ellipse cx="8" cy="18.500" rx="2.200" ry="3" stroke="#a6a6a6" stroke-width="1.1" fill="none" stroke-linecap="round" stroke-linejoin="round"/><ellipse cx="15.500" cy="18.500" rx="2.200" ry="3" stroke="#a6a6a6" stroke-width="1.1" fill="none" stroke-linecap="round" stroke-linejoin="round"/></svg>
<svg class="a" style="left:205px;top:64px;" width="24" height="24" viewBox="0 0 24 24"><path d="M3.500 3.500h8l3 3v9.500h-11z" fill="#ececec" stroke="#a0a0a0"/><path d="M9.500 8.500h8l3 3v9.500h-11z" fill="#ececec" stroke="#a0a0a0"/><path d="M5.500 7h5M5.500 9.500h3M11.500 13h6M11.500 15.500h6M11.500 18h6" stroke="#a8a8a8" stroke-width="1"/></svg>
<svg class="a" style="left:235px;top:64px;" width="24" height="24" viewBox="0 0 24 24"><rect x="2.500" y="5" width="16" height="16.500" rx="1.500" fill="#a3a04a" stroke="#3c3c14"/><path d="M7.500 5.500l1.500-3h3l1.500 3z" fill="#e9d44a" stroke="#3c3c14" stroke-width=".9"/><path d="M10.500 10.500h8l3.500 3.500v8.500h-11.500z" fill="#fff" stroke="#2020a0" stroke-width="1.100"/><path d="M12.500 15h6M12.500 17.300h7M12.500 19.600h7" stroke="#2020a0" stroke-width="1"/></svg>
<svg class="a" style="left:265px;top:64px;" width="24" height="24" viewBox="0 0 24 24"><path d="M20.500 2.500l2 2-6 7-3-3z" fill="#22226a" stroke="#111140" stroke-width=".8"/><path d="M13 8l4 4-2.500 2-4-3.500z" fill="#c8c8c8" stroke="#444" stroke-width=".8"/><path d="M10 10.500l4.500 4-5 5.500-5.500-3.500z" fill="#f0e87c" stroke="#8a8420" stroke-width=".8"/><path d="M2 19h6M3 21h5" stroke="#e8e000" stroke-width="1.200" stroke-dasharray="1 1"/></svg>
<div class="a" style="left:295px;top:63px;width:1px;height:28px;background:#8c8c8c;"></div>
<svg class="a" style="left:302px;top:64px;" width="24" height="24" viewBox="0 0 24 24"><path d="M10 8.500h5a4.500 4.500 0 0 1 0 9h-3.500" stroke="#a6a6a6" stroke-width="1.1" fill="none" stroke-linecap="round" stroke-linejoin="round" stroke-width="1.600"/><path d="M3 8.500l8-4.500v9z" fill="#a6a6a6"/></svg>
<svg class="a" style="left:332px;top:64px;" width="24" height="24" viewBox="0 0 24 24"><path d="M14 8.500h-5a4.500 4.500 0 0 0 0 9h3.500" stroke="#a6a6a6" stroke-width="1.1" fill="none" stroke-linecap="round" stroke-linejoin="round" stroke-width="1.600"/><path d="M21 8.500l-8-4.500v9z" fill="#a6a6a6"/></svg>
<div class="a" style="left:361px;top:63px;width:1px;height:28px;background:#8c8c8c;"></div>
<svg class="a" style="left:367px;top:64px;" width="24" height="24" viewBox="0 0 24 24"><circle cx="13" cy="10" r="8" stroke="#333" stroke-width="1" fill="#fff" stroke-dasharray="2 1.500"/><path d="M10 10h6M13 7v6" stroke="#222" stroke-width="1.1" fill="none" stroke-linecap="round" stroke-linejoin="round" /><path d="M7 15.500l-4.500 4.500" stroke="#888" stroke-width="2.600"/><path d="M6.500 16.500l-4 4" stroke="#333" stroke-width="1"/></svg>
<svg class="a" style="left:397px;top:64px;" width="24" height="24" viewBox="0 0 24 24"><circle cx="13" cy="10" r="8" stroke="#333" stroke-width="1" fill="#fff" stroke-dasharray="2 1.500"/><path d="M10 10h6" stroke="#222" stroke-width="1.1" fill="none" stroke-linecap="round" stroke-linejoin="round" /><path d="M7 15.500l-4.500 4.500" stroke="#888" stroke-width="2.600"/><path d="M6.500 16.500l-4 4" stroke="#333" stroke-width="1"/></svg>
<svg class="a" style="left:427px;top:64px;" width="24" height="24" viewBox="0 0 24 24"><rect x="2.500" y="3" width="16" height="16" stroke="#222" stroke-width="1.200" fill="none" stroke-dasharray="1.200 1.200"/><circle cx="17" cy="18" r="5" fill="#f0f0f0" stroke="#444" stroke-width=".9" stroke-dasharray="2 1"/><path d="M15 18h4M17 16v4M12 22.500h2" stroke="#222" stroke-width="1.1" fill="none" stroke-linecap="round" stroke-linejoin="round" /></svg>
<svg class="a" style="left:457px;top:64px;" width="24" height="24" viewBox="0 0 24 24"><rect x="2" y="3" width="20" height="17.500" rx="1" fill="#fff" stroke="#222" stroke-width="1.200"/><path d="M5 9.500h5M14 9.500h5" stroke="#2222cc" stroke-width="1.300"/><path d="M4 9.500l3.500-2.500v5zM20 9.500l-3.500-2.500v5z" fill="#2222cc"/></svg>
<svg class="a" style="left:487px;top:64px;" width="24" height="24" viewBox="0 0 24 24"><rect x="2" y="3" width="20" height="17.500" fill="#b8b8b8" stroke="#9a9a9a"/><rect x="7.500" y="6" width="9" height="11.500" fill="#e6e6e6" stroke="#8a8a8a"/><path d="M9.500 9h5M9.500 11.500h5M9.500 14h5" stroke="#8a8a8a"/></svg>
<svg class="a" style="left:518px;top:64px;" width="24" height="24" viewBox="0 0 24 24"><circle cx="13" cy="10" r="8.300" stroke="#b4b4b4" stroke-width="1" fill="#f8f8f8"/><rect x="9" y="6" width="8" height="8" fill="none" stroke="#9a9a9a" stroke-width="1.100"/><path d="M8 5h2v2h-2zM16 5h2v2h-2zM8 13h2v2h-2zM16 13h2v2h-2z" fill="#9a9a9a"/><path d="M7 15.500l-4.500 4.500" stroke="#b0b0b0" stroke-width="2.600"/></svg>
<div class="a" style="left:547px;top:63px;width:1px;height:28px;background:#8c8c8c;"></div>
<svg class="a" style="left:553px;top:64px;" width="24" height="24" viewBox="0 0 24 24"><text x="12" y="11" font-size="9.500" font-weight="bold" fill="#222" text-anchor="middle" textLength="17" lengthAdjust="spacingAndGlyphs">ABC</text><path d="M6 14.500l5 5.500 10-12" stroke="#22228a" stroke-width="1.700" fill="none"/></svg>
<div class="a" style="left:577px;top:63px;width:1px;height:28px;background:#555;"></div>
<svg class="a" style="left:578px;top:87px;" width="5" height="5" viewBox="0 0 5 5"><path d="M5 0v5h-5z" fill="#111"/></svg>
<div class="a" style="left:586px;top:61px;width:30px;height:29px;background:#cce4f7;border:1px solid #99d1ff;"></div>
<svg class="a" style="left:589px;top:64px;" width="24" height="24" viewBox="0 0 24 24"><path d="M5.5 10.7h3M7 9.2v3" stroke="#1010e0" stroke-width="1.100"/><path d="M5.5 15.4h3M7 13.9v3" stroke="#1010e0" stroke-width="1.100"/><path d="M5.5 20.1h3M7 18.6v3" stroke="#1010e0" stroke-width="1.100"/><path d="M10.2 6h3M11.7 4.5v3" stroke="#1010e0" stroke-width="1.100"/><path d="M10.2 10.7h3M11.7 9.2v3" stroke="#1010e0" stroke-width="1.100"/><path d="M10.2 15.4h3M11.7 13.9v3" stroke="#1010e0" stroke-width="1.100"/><path d="M10.2 20.1h3M11.7 18.6v3" stroke="#1010e0" stroke-width="1.100"/><path d="M14.9 6h3M16.4 4.5v3" stroke="#1010e0" stroke-width="1.100"/><path d="M14.9 10.7h3M16.4 9.2v3" stroke="#1010e0" stroke-width="1.100"/><path d="M14.9 15.4h3M16.4 13.9v3" stroke="#1010e0" stroke-width="1.100"/><path d="M14.9 20.1h3M16.4 18.6v3" stroke="#1010e0" stroke-width="1.100"/><path d="M19.6 6h3M21.1 4.5v3" stroke="#1010e0" stroke-width="1.100"/><path d="M19.6 10.7h3M21.1 9.2v3" stroke="#1010e0" stroke-width="1.100"/><path d="M19.6 15.4h3M21.1 13.9v3" stroke="#1010e0" stroke-width="1.100"/><path d="M19.6 20.1h3M21.1 18.6v3" stroke="#1010e0" stroke-width="1.100"/><path d="M4 6h6M7 3v6M5 4l4 4M9 4l-4 4" stroke="#f0e000" stroke-width="1"/></svg>
<svg class="a" style="left:611px;top:87px;" width="5" height="5" viewBox="0 0 5 5"><path d="M5 0v5h-5z" fill="#111"/></svg>
<svg class="a" style="left:624px;top:64px;" width="24" height="24" viewBox="0 0 24 24"><path d="M7 8l6-4 7 9c1.500 2.500-3 6-5.500 4z" fill="#fff" stroke="#222" stroke-width="1"/><path d="M10 6l3 4M5 5c2-3 5-3 7-2" stroke="#222" stroke-width=".9" fill="none"/><path d="M2.500 17l3 3M5.500 17l-3 3" stroke="#e00000" stroke-width="1"/><path d="M19 2l1.500 2 1.500-2M20.500 4v2.500" stroke="#e00000" stroke-width=".9" fill="none"/></svg>
<svg class="a" style="left:653px;top:87px;" width="5" height="5" viewBox="0 0 5 5"><path d="M5 0v5h-5z" fill="#111"/></svg>
<svg class="a" style="left:654px;top:64px;" width="24" height="24" viewBox="0 0 24 24"><path d="M8 5l4 3v12l-4-3z" fill="none" stroke="#e00000" stroke-width="1.100"/><path d="M10 9l7-2v8l-7 2z" fill="#d8d8f8" stroke="#3a3ac0" stroke-width="1"/><path d="M12 8l5 3v6" stroke="#e00000" stroke-width=".9" fill="none"/></svg>
<svg class="a" style="left:684px;top:87px;" width="5" height="5" viewBox="0 0 5 5"><path d="M5 0v5h-5z" fill="#111"/></svg>
<div class="a" style="left:683px;top:63px;width:1px;height:28px;background:#8c8c8c;"></div>
<svg class="a" style="left:691px;top:64px;" width="24" height="24" viewBox="0 0 24 24"><path d="M3 11h6l2 2h5v3h-10l-3 6z" fill="#f3efb0" stroke="#555520" stroke-width=".9"/><path d="M3 22l3.500-7h13l-4 7z" fill="#9c9a42" stroke="#444418" stroke-width=".9"/><path d="M7 9c0-3 2-5 5-5" stroke="#222" stroke-width="1.600" fill="none"/><path d="M10 1.500l4 2.500-4 2.500z" fill="#222"/><rect x="14.500" y="1.500" width="8" height="3.500" fill="#2a2ab0"/><rect x="14.500" y="6" width="8" height="4" fill="#fff" stroke="#2a2ab0" stroke-width=".9"/><rect x="19.500" y="2.300" width="2" height="1.800" fill="#fff"/></svg>
<svg class="a" style="left:714px;top:87px;" width="5" height="5" viewBox="0 0 5 5"><path d="M5 0v5h-5z" fill="#111"/></svg>
<svg class="a" style="left:721px;top:64px;" width="24" height="24" viewBox="0 0 24 24"><path d="M9 6l4-3.500h9v10l-4 3.500h-9z" fill="#fff" stroke="#222" stroke-width="1"/><path d="M9 6h9v10M18 6l4-3.500" stroke="#222" stroke-width="1" fill="none"/><path d="M9 6l4-3.500h9l-4 3.500z" fill="#5fe8f0" stroke="#222" stroke-width=".8"/><path d="M13 2.500v10h9M13 12.500l-4 3.500" stroke="#888" stroke-width=".7" fill="none"/><path d="M4 9v12h13" stroke="#2a2ab0" stroke-width="1.300" fill="none"/><path d="M2 12h4" stroke="#2a2ab0" stroke-width="1.200"/><path d="M4 21h14" stroke="#c03030" stroke-width="1.600"/><path d="M20 21l-4-2.500v5z" fill="#c03030"/><path d="M4 21l4-4" stroke="#20a020" stroke-width="1.300"/></svg>
<svg class="a" style="left:744px;top:87px;" width="5" height="5" viewBox="0 0 5 5"><path d="M5 0v5h-5z" fill="#111"/></svg>
<div class="a" style="left:750px;top:63px;width:1px;height:28px;background:#8c8c8c;"></div>
<svg class="a" style="left:757px;top:64px;" width="24" height="24" viewBox="0 0 24 24"><path d="M3 9h12v13h-12z" fill="#fff" stroke="#222" stroke-width="1.200"/><path d="M8 8l6-4.500h6v7l-5 .5-2 2.500-3-1" fill="#fff" stroke="#222" stroke-width="1"/><path d="M14 6.500l-3 2.500M16 7l-3 3M18 8l-3 2.500" stroke="#222" stroke-width=".8"/><path d="M21.500 2.500v7.500" stroke="#2a2ab0" stroke-width="2"/></svg>
<svg class="a" style="left:780px;top:87px;" width="5" height="5" viewBox="0 0 5 5"><path d="M5 0v5h-5z" fill="#111"/></svg>
<svg class="a" style="left:1094px;top:64px;" width="24" height="24" viewBox="0 0 24 24"><path d="M2 2v17l4.500-3.500 3 6.500 3-1.500-3-6.200h5.500z" fill="#3c3c3c"/><text x="17" y="17" font-size="21" font-weight="bold" fill="#3a3a9a" text-anchor="middle">?</text></svg>
<svg class="a" style="left:1118px;top:87px;" width="5" height="5" viewBox="0 0 5 5"><path d="M5 0v5h-5z" fill="#111"/></svg>
<svg class="a" style="left:1124px;top:64px;" width="24" height="24" viewBox="0 0 24 24"><rect x="3" y="2" width="18" height="20" rx="2" fill="#d8966a" stroke="#a86a44"/><rect x="17.500" y="3" width="4" height="18" fill="#eee" stroke="#bbb" stroke-width=".6"/><path d="M3 2.500v19" stroke="#8a5a3a" stroke-width="2.200" stroke-dasharray="1.500 2.500"/><text x="11" y="15.500" font-size="10" fill="#fff" text-anchor="middle">@</text></svg>
<svg class="a" style="left:1154px;top:64px;" width="24" height="24" viewBox="0 0 24 24"><rect x="2" y="8" width="18" height="12" fill="#f4c430" stroke="#c89a10" stroke-width=".9"/><path d="M2 8l9 7 9-7M2 20l7-6.500M20 20l-7-6.500" stroke="#c89a10" stroke-width=".9" fill="none"/><path d="M19 2l4 5h-2.500v6h-3v-6h-2.500z" fill="#4caf30"/></svg>
<svg class="a" style="left:1196px;top:64px;" width="24" height="24" viewBox="0 0 24 24"><rect x="1" y="2" width="8" height="8" fill="#e0e0e0" stroke="#a0a0a0"/><path d="M3 4l4 4M7 5v3h-3" stroke="#8a8a8a" stroke-width="1" fill="none"/><rect x="8" y="9" width="8" height="7" fill="none" stroke="#9a9a9a"/><rect x="12" y="13" width="8" height="7" fill="none" stroke="#9a9a9a"/><path d="M6.500 14h2.500v2.500h-2.500zM14.500 6.500h2.500v2.500h-2.500zM19.500 11.500h2.500v2.500h-2.500zM8.500 18.500h2.500v2.500h-2.500zM19.500 19h2.500v2.500h-2.500z" fill="#9a9a9a"/></svg>
<svg class="a" style="left:1227px;top:64px;" width="24" height="24" viewBox="0 0 24 24"><path d="M4 4h10v10h-10zM10 9h10v10h-10z" fill="none" stroke="#9a9a9a" stroke-width="1.100"/><path d="M1.500 1.500h4v4h-4zM18.500 1.500h4v4h-4zM1.500 18.500h4v4h-4zM18.500 18.500h4v4h-4z" fill="#9a9a9a"/></svg>
<svg class="a" style="left:1257px;top:64px;" width="24" height="24" viewBox="0 0 24 24"><path d="M5 5l6-3 10 9-7 10-9-8z" fill="#fff" stroke="#555" stroke-width="1.100"/><circle cx="8.500" cy="7" r="1.200" fill="#c00"/><path d="M10 9l6 5.500M8.500 11l6 5.500M12 8l5 4.500" stroke="#555" stroke-width=".9"/></svg>
<div class="a" style="left:1286px;top:63px;width:1px;height:28px;background:#555;"></div>
<svg class="a" style="left:1292px;top:64px;" width="24" height="24" viewBox="0 0 24 24"><path d="M5 5h14v14h-14zM12 5v14M5 12h14" fill="none" stroke="#9a9a9a" stroke-width="1.100"/><path d="M2.500 2.500h4v4h-4zM10 2.500h4v4h-4zM17.500 2.500h4v4h-4zM2.500 10h4v4h-4zM17.500 10h4v4h-4zM2.500 17.500h4v4h-4zM10 17.500h4v4h-4zM17.500 17.500h4v4h-4z" fill="#9a9a9a"/></svg>
<svg class="a" style="left:1335px;top:64px;" width="24" height="24" viewBox="0 0 24 24"><ellipse cx="11.500" cy="18" rx="9.500" ry="3.600" fill="#e6e6e6" stroke="#a0a0a0" stroke-width="1"/><path d="M4.500 7.500c0 6 2.500 9.500 7 9.500s7-3.500 7-9.500z" fill="#d4d4d4" stroke="#a0a0a0" stroke-width="1"/><ellipse cx="11.500" cy="7.500" rx="7" ry="2.600" fill="#d4d4d4" stroke="#a0a0a0" stroke-width="1"/><path d="M18.300 9c3.500-1.500 5 1 3 3.500c-1.200 1.500-3 2-4.500 2" fill="none" stroke="#a0a0a0" stroke-width="1"/><path d="M6 8.500c1 5 3 7 5 7.500" stroke="#f4f4f4" stroke-width="2" fill="none"/></svg>
<svg class="a" style="left:1365px;top:64px;" width="24" height="24" viewBox="0 0 24 24"><ellipse cx="11.500" cy="18" rx="9.500" ry="3.600" fill="#fff" stroke="#111" stroke-width="1.2"/><path d="M4.500 7.500c0 6 2.500 9.500 7 9.500s7-3.500 7-9.500z" fill="#fff" stroke="#111" stroke-width="1.2"/><ellipse cx="11.500" cy="7.500" rx="7" ry="2.600" fill="#fff" stroke="#111" stroke-width="1.2"/><path d="M18.300 9c3.500-1.500 5 1 3 3.500c-1.200 1.500-3 2-4.500 2" fill="none" stroke="#111" stroke-width="1.2"/><path d="M5 8.500c0 5 2 8 6.500 8.300l3-8z" fill="#2a9a9a"/><ellipse cx="10.500" cy="7.500" rx="5.500" ry="1.900" fill="#6cc"/></svg>
<svg class="a" style="left:1395px;top:64px;" width="24" height="24" viewBox="0 0 24 24"><ellipse cx="11.500" cy="18" rx="9.500" ry="3.600" fill="#fff" stroke="#111" stroke-width="1.2"/><path d="M4.500 7.500c0 6 2.500 9.500 7 9.500s7-3.500 7-9.500z" fill="#fff" stroke="#111" stroke-width="1.2"/><ellipse cx="11.500" cy="7.500" rx="7" ry="2.600" fill="#fff" stroke="#111" stroke-width="1.2"/><path d="M18.300 9c3.500-1.500 5 1 3 3.500c-1.200 1.500-3 2-4.500 2" fill="none" stroke="#111" stroke-width="1.2"/></svg>
<div class="a" style="left:1422px;top:61px;width:30px;height:29px;background:#cce4f7;border:1px solid #99d1ff;"></div>
<svg class="a" style="left:1425px;top:64px;" width="24" height="24" viewBox="0 0 24 24"><ellipse cx="11.500" cy="18" rx="9.500" ry="3.600" fill="none" stroke="#111" stroke-width="1.2"/><path d="M4.500 7.500c0 6 2.500 9.500 7 9.500s7-3.500 7-9.500z" fill="none" stroke="#111" stroke-width="1.2"/><ellipse cx="11.500" cy="7.500" rx="7" ry="2.600" fill="none" stroke="#111" stroke-width="1.2"/><path d="M18.300 9c3.500-1.500 5 1 3 3.500c-1.200 1.500-3 2-4.500 2" fill="none" stroke="#111" stroke-width="1.2"/><path d="M5.500 12h12M7.500 15h8" stroke="#111" stroke-width="1" fill="none"/></svg>
<svg class="a" style="left:1602px;top:87px;" width="5" height="5" viewBox="0 0 5 5"><path d="M5 0v5h-5z" fill="#111"/></svg>
<svg class="a" style="left:1618px;top:64px;" width="24" height="24" viewBox="0 0 24 24"><g transform="translate(6,-2) scale(.72)"><path d="M3 8l6-5h12l-6 5z" fill="#55f4fa"/><path d="M3 8h12v12h-12zM9 3h12v12h-12zM3 8l6-5M15 8l6-5M3 20l6-5M15 20l6-5" fill="none" stroke="#222" stroke-width="1"/></g><path d="M4.500 7v14h12" stroke="#2a2ab0" stroke-width="1.300" fill="none"/><path d="M2 10h5" stroke="#2a2ab0" stroke-width="1.200"/><path d="M4.500 21h13" stroke="#a03030" stroke-width="1.800"/><path d="M20 21l-4-2.500v5z" fill="#a03030"/><path d="M4.500 21l4-4" stroke="#20a020" stroke-width="1.300"/></svg>
<svg class="a" style="left:1649px;top:65px;" width="24" height="24" viewBox="0 0 24 24"><path d="M3 8l6-5v12l-6 5z" fill="#55f4fa"/><path d="M3 8h12v12h-12zM9 3h12v12h-12zM3 8l6-5M15 8l6-5M3 20l6-5M15 20l6-5" fill="none" stroke="#222" stroke-width="1"/></svg>
<svg class="a" style="left:1679px;top:65px;" width="24" height="24" viewBox="0 0 24 24"><path d="M3 8h12v12h-12z" fill="#55f4fa"/><path d="M3 8h12v12h-12zM9 3h12v12h-12zM3 8l6-5M15 8l6-5M3 20l6-5M15 20l6-5" fill="none" stroke="#222" stroke-width="1"/></svg>
<svg class="a" style="left:1709px;top:65px;" width="24" height="24" viewBox="0 0 24 24"><path d="M3 20l6-5h12l-6 5z" fill="#55f4fa"/><path d="M3 8h12v12h-12zM9 3h12v12h-12zM3 8l6-5M15 8l6-5M3 20l6-5M15 20l6-5" fill="none" stroke="#222" stroke-width="1"/></svg>
<svg class="a" style="left:1739px;top:65px;" width="24" height="24" viewBox="0 0 24 24"><path d="M9 3h12v12h-12z" fill="#55f4fa"/><path d="M3 8h12v12h-12zM9 3h12v12h-12zM3 8l6-5M15 8l6-5M3 20l6-5M15 20l6-5" fill="none" stroke="#222" stroke-width="1"/></svg>
<svg class="a" style="left:1769px;top:65px;" width="24" height="24" viewBox="0 0 24 24"><path d="M15 8l6-5v12l-6 5z" fill="#55f4fa"/><path d="M3 8h12v12h-12zM9 3h12v12h-12zM3 8l6-5M15 8l6-5M3 20l6-5M15 20l6-5" fill="none" stroke="#222" stroke-width="1"/></svg>
<svg class="a" style="left:1799px;top:64px;" width="24" height="24" viewBox="0 0 24 24"><path d="M12 12L20.500 7V17L12 22z" fill="#22b8c0" fill-opacity=".85"/><path d="M12 2L20.500 7V17L12 22L3.500 17V7z" fill="none" stroke="#222" stroke-width="1"/><path d="M12 12V22M12 12L3.500 7M12 12L20.500 7" stroke="#222" stroke-width="1"/><path d="M12 2v10M12 12L3.500 17M12 12L20.500 17" stroke="#9a9a9a" stroke-width=".7"/></svg>
<svg class="a" style="left:1829px;top:64px;" width="24" height="24" viewBox="0 0 24 24"><path d="M12 12L3.500 7V17L12 22z" fill="#22b8c0" fill-opacity=".85"/><path d="M12 2L20.500 7V17L12 22L3.500 17V7z" fill="none" stroke="#222" stroke-width="1"/><path d="M12 12V22M12 12L3.500 7M12 12L20.500 7" stroke="#222" stroke-width="1"/><path d="M12 2v10M12 12L3.500 17M12 12L20.500 17" stroke="#9a9a9a" stroke-width=".7"/></svg>
<svg class="a" style="left:1859px;top:64px;" width="24" height="24" viewBox="0 0 24 24"><path d="M12 2L20.500 7V17L12 12z" fill="#22b8c0" fill-opacity=".85"/><path d="M12 2L20.500 7V17L12 22L3.500 17V7z" fill="none" stroke="#222" stroke-width="1"/><path d="M12 12V22M12 12L3.500 7M12 12L20.500 7" stroke="#222" stroke-width="1"/><path d="M12 2v10M12 12L3.500 17M12 12L20.500 17" stroke="#9a9a9a" stroke-width=".7"/></svg>
<svg class="a" style="left:1889px;top:64px;" width="24" height="24" viewBox="0 0 24 24"><path d="M12 2L3.500 7V17L12 12z" fill="#22b8c0" fill-opacity=".85"/><path d="M12 2L20.500 7V17L12 22L3.500 17V7z" fill="none" stroke="#222" stroke-width="1"/><path d="M12 12V22M12 12L3.500 7M12 12L20.500 7" stroke="#222" stroke-width="1"/><path d="M12 2v10M12 12L3.500 17M12 12L20.500 17" stroke="#9a9a9a" stroke-width=".7"/></svg>
<svg class="a" style="left:14px;top:99px;" width="22" height="22" viewBox="0 0 24 24"><path d="M4 9h13v13h-13z" fill="#fff" stroke="#222" stroke-width="1.100"/><path d="M4 9l5-5h13l-5 5z" fill="#e4e4e4" stroke="#222" stroke-width="1"/><path d="M17 9l5-5v13l-5 5z" fill="#8e8e8e" stroke="#222" stroke-width="1"/><rect x="2.75" y="20.75" width="2.5" height="2.5" fill="#fff" stroke="#2a2aff" stroke-width="1"/><rect x="20.75" y="2.75" width="2.5" height="2.5" fill="#fff" stroke="#2a2aff" stroke-width="1"/><rect x="20.75" y="15.75" width="2.5" height="2.5" fill="#fff" stroke="#2a2aff" stroke-width="1"/></svg>
<svg class="a" style="left:44px;top:99px;" width="22" height="22" viewBox="0 0 24 24"><path d="M7 10h9v9h-9z" fill="#d8d8d8" stroke="#222" stroke-width="1"/><path d="M7 10l4-4h9l-4 4z" fill="#f0f0f0" stroke="#222" stroke-width=".9"/><path d="M16 10l4-4v9l-4 4z" fill="#777" stroke="#222" stroke-width=".9"/><path d="M7 19l4 2 5-2" stroke="#30c0c0" stroke-width=".9" fill="none"/><rect x="4.75" y="17.75" width="2.5" height="2.5" fill="#fff" stroke="#2a2aff" stroke-width="1"/><rect x="10.25" y="20.25" width="2.5" height="2.5" fill="#fff" stroke="#2a2aff" stroke-width="1"/><rect x="15.75" y="17.25" width="2.5" height="2.5" fill="#fff" stroke="#2a2aff" stroke-width="1"/><rect x="17.75" y="7.75" width="2.5" height="2.5" fill="#fff" stroke="#2a2aff" stroke-width="1"/></svg>
<svg class="a" style="left:74px;top:99px;" width="22" height="22" viewBox="0 0 24 24"><circle cx="11" cy="12" r="9.300" fill="#bdbdbd" stroke="#333" stroke-width="1"/><circle cx="9" cy="10" r="5.500" fill="#ececec"/><path d="M3 15c3 5 12 5 16 0" stroke="#777" stroke-width="1.500" fill="none"/><rect x="9.75" y="11.25" width="2.5" height="2.5" fill="#fff" stroke="#2a2aff" stroke-width="1"/><rect x="19.25" y="11.25" width="2.5" height="2.5" fill="#fff" stroke="#2a2aff" stroke-width="1"/></svg>
<svg class="a" style="left:104px;top:99px;" width="22" height="22" viewBox="0 0 24 24"><path d="M3 8c1-5 9-7 14-2c4 4 4 10 2 14c-5 1-14-4-16-12z" fill="#a8a8a8" stroke="#333" stroke-width="1"/><path d="M3 8c4-2 12 2 16 12" stroke="#333" stroke-width=".9" fill="none"/><path d="M6 7c4-4 9-2 11 2c-3-2-8-2-11-2z" fill="#e8e8e8"/><rect x="1.75" y="5.75" width="2.5" height="2.5" fill="#fff" stroke="#2a2aff" stroke-width="1"/><rect x="8.75" y="12.25" width="2.5" height="2.5" fill="#fff" stroke="#2a2aff" stroke-width="1"/></svg>
<svg class="a" style="left:133px;top:99px;" width="22" height="22" viewBox="0 0 24 24"><path d="M19 3l.5 16c-3 3-12 3-16 0z" fill="#b8b8b8" stroke="#333" stroke-width="1"/><path d="M19 3l.5 16c-2 1.500-5 2-7 2z" fill="#8a8a8a"/><ellipse cx="11.500" cy="19.500" rx="8" ry="2.500" fill="none" stroke="#2a2aff" stroke-width=".9"/><path d="M7 16.500c3 1 8 1 12 0" stroke="#30c0c0" stroke-width=".9" fill="none"/><rect x="18.25" y="1.25" width="2.5" height="2.5" fill="#fff" stroke="#2a2aff" stroke-width="1"/></svg>
<svg class="a" style="left:164px;top:99px;" width="22" height="22" viewBox="0 0 24 24"><path d="M8 8l6-3 6 3-1 10-6 4-8-3z" fill="#fff" stroke="#2a2aff" stroke-width="1"/><path d="M8 8l5 2 7-2M13 10v12" stroke="#222" stroke-width=".9" fill="none"/><path d="M13 10l7-2-1 10-6 4z" fill="#d8d8d8" stroke="#222" stroke-width=".8"/><path d="M6 17l6 1.500 7-1" stroke="#30c0c0" stroke-width=".9" stroke-dasharray="1.500 1" fill="none"/></svg>
<svg class="a" style="left:194px;top:99px;" width="22" height="22" viewBox="0 0 24 24"><path d="M9 6l8 2.500-3 11.500-8-3z" fill="#fff" stroke="#222" stroke-width="1"/><path d="M14 20l3-11.500c-2-2-6-3-8-2.500" fill="none" stroke="#222" stroke-width=".9"/><path d="M12 14l5-5.500-3 11.500z" fill="#bdbdbd"/><ellipse cx="10" cy="18.500" rx="4.500" ry="2" fill="none" stroke="#2a2aff" stroke-width=".9" transform="rotate(18 10 18.500)"/><path d="M7 16l6 2" stroke="#30c0c0" stroke-width=".9"/></svg>
<svg class="a" style="left:224px;top:99px;" width="22" height="22" viewBox="0 0 24 24"><ellipse cx="11.500" cy="6.5" rx="9" ry="3" fill="none" stroke="#333" stroke-width="1"/><ellipse cx="11.500" cy="10" rx="9" ry="3" fill="none" stroke="#333" stroke-width="1"/><ellipse cx="11.500" cy="13.5" rx="9" ry="3" fill="none" stroke="#333" stroke-width="1"/><ellipse cx="11.500" cy="17" rx="9" ry="3" fill="none" stroke="#333" stroke-width="1"/><ellipse cx="11.500" cy="20" rx="9" ry="3" fill="none" stroke="#333" stroke-width="1"/><rect x="17.75" y="1.75" width="2.5" height="2.5" fill="#fff" stroke="#2a2aff" stroke-width="1"/><rect x="2.75" y="20.75" width="2.5" height="2.5" fill="#fff" stroke="#2a2aff" stroke-width="1"/></svg>
<svg class="a" style="left:254px;top:99px;" width="22" height="22" viewBox="0 0 24 24"><path d="M7 9l12-2.500-4 9-12 2.500z" fill="#fff" stroke="#222" stroke-width="1"/><path d="M9 13l9-2-2 4.500-9 2z" fill="#b0b0b0"/><path d="M3 18c3 2 9 1 12-2" stroke="#2a2aff" stroke-width=".9" fill="none"/><path d="M8 15l7-1.500" stroke="#30c0c0" stroke-width=".9"/><rect x="18.75" y="4.75" width="2.5" height="2.5" fill="#fff" stroke="#2a2aff" stroke-width="1"/><rect x="13.75" y="14.75" width="2.5" height="2.5" fill="#fff" stroke="#2a2aff" stroke-width="1"/></svg>
<svg class="a" style="left:283px;top:99px;" width="22" height="22" viewBox="0 0 24 24"><path d="M2 4c0 5 1 7 3.500 7.500v9.500M5.500 21h-3" stroke="#333" stroke-width="1" fill="none"/><path d="M7.500 1v22" stroke="#e00000" stroke-width="1" stroke-dasharray="2 1.200"/><path d="M9 12h5M12 9.500l2.500 2.500-2.500 2.500" stroke="#2a2aff" stroke-width="1" fill="none"/><path d="M15 4h8c0 5-1 7.500-3.500 8v8.500h3.500-7.500 4v-8.500c-3-.5-4.500-3-4.500-8z" fill="#c8c8c8" stroke="#333" stroke-width="1"/></svg>
<svg class="a" style="left:314px;top:99px;" width="22" height="22" viewBox="0 0 24 24"><path d="M5 7v10c0 4 13 4 13 0v-10" fill="#fff" stroke="#333" stroke-width="1"/><ellipse cx="11.500" cy="7" rx="6.500" ry="3" fill="#e8e8e8" stroke="#333" stroke-width="1"/><path d="M13 10v10c3-.5 5-1.500 5-3v-10c0 1.500-2 2.700-5 3z" fill="#9a9a9a"/><rect x="16.75" y="7.75" width="2.5" height="2.5" fill="#fff" stroke="#2a2aff" stroke-width="1"/><rect x="10.75" y="16.75" width="2.5" height="2.5" fill="#fff" stroke="#2a2aff" stroke-width="1"/><rect x="17.25" y="15.75" width="2.5" height="2.5" fill="#fff" stroke="#2a2aff" stroke-width="1"/></svg>
<svg class="a" style="left:344px;top:99px;" width="22" height="22" viewBox="0 0 24 24"><path d="M5 7v10c0 4 13 4 13 0v-10" fill="#fff" stroke="#333" stroke-width="1"/><ellipse cx="11.500" cy="7" rx="6.500" ry="3" fill="#e8e8e8" stroke="#333" stroke-width="1"/><path d="M8 11v9h6v-9z" fill="#9a9a9a" stroke="#333" stroke-width=".8"/><rect x="17.75" y="7.75" width="2.5" height="2.5" fill="#fff" stroke="#2a2aff" stroke-width="1"/><rect x="11.75" y="16.75" width="2.5" height="2.5" fill="#fff" stroke="#2a2aff" stroke-width="1"/><rect x="18.25" y="16.25" width="2.5" height="2.5" fill="#fff" stroke="#2a2aff" stroke-width="1"/></svg>
<svg class="a" style="left:374px;top:99px;" width="22" height="22" viewBox="0 0 24 24"><path d="M6 4h12l5 8-5 8h-12l-5-8z" fill="#c8c8c8" stroke="#333" stroke-width="1" transform="translate(2 2) scale(.85)"/><circle cx="12" cy="12" r="4.500" fill="#f4f4f4" stroke="#555" stroke-width=".9"/><circle cx="12" cy="12" r="1.800" fill="#999" stroke="#555" stroke-width=".7"/></svg>
<svg class="a" style="left:404px;top:99px;" width="22" height="22" viewBox="0 0 24 24"><path d="M3 3h19v19h-19zM3 8h19M3 12.500h19M3 17.500h19M8 3v19M12.500 3v19M17.500 3v19" fill="none" stroke="#222" stroke-width="1.100"/><rect x="1.75" y="1.75" width="2.5" height="2.5" fill="#fff" stroke="#2a2aff" stroke-width="1"/><rect x="20.75" y="20.75" width="2.5" height="2.5" fill="#fff" stroke="#2a2aff" stroke-width="1"/></svg>
<svg class="a" style="left:433px;top:99px;" width="22" height="22" viewBox="0 0 24 24"><path d="M4 7v13h10z" fill="#fff" stroke="#222" stroke-width="1.100"/><path d="M4 7l4-3 14 12-8 4z" fill="#c4c4c4" stroke="#222" stroke-width="1"/><rect x="2.75" y="5.75" width="2.5" height="2.5" fill="#fff" stroke="#2a2aff" stroke-width="1"/><rect x="2.75" y="18.75" width="2.5" height="2.5" fill="#fff" stroke="#2a2aff" stroke-width="1"/><rect x="19.75" y="14.75" width="2.5" height="2.5" fill="#fff" stroke="#2a2aff" stroke-width="1"/></svg>
<svg class="a" style="left:464px;top:99px;" width="22" height="22" viewBox="0 0 24 24"><path d="M4 9l4-4h13v11l-4 4h-13zM4 9h13l4-4M17 9v11M4 14.500h13l4-4" fill="none" stroke="#a6a6a6" stroke-width="1"/><path d="M6 13.500l2-2h9l-2 2z" fill="#b0b0b0" stroke="#8a8a8a" stroke-width=".8"/></svg>
<svg class="a" style="left:493px;top:99px;" width="22" height="22" viewBox="0 0 24 24"><text x="7" y="15.500" font-size="10" fill="#222" text-anchor="middle">3D</text><path d="M12 2.500l9 9.500-8 8.500h-9" stroke="#222" stroke-width="1" fill="none"/><rect x="10.75" y="1.25" width="2.5" height="2.5" fill="#fff" stroke="#2a2aff" stroke-width="1"/><rect x="19.75" y="10.75" width="2.5" height="2.5" fill="#fff" stroke="#2a2aff" stroke-width="1"/><rect x="11.75" y="19.25" width="2.5" height="2.5" fill="#fff" stroke="#2a2aff" stroke-width="1"/><rect x="2.25" y="19.25" width="2.5" height="2.5" fill="#fff" stroke="#2a2aff" stroke-width="1"/></svg>
<svg class="a" style="left:523px;top:99px;" width="22" height="22" viewBox="0 0 24 24"><path d="M3 21c2-18 15-18 19 0" stroke="#222" stroke-width="1" fill="none"/><text x="13" y="21.500" font-size="10" fill="#222" text-anchor="middle">3D</text><rect x="1.75" y="19.75" width="2.5" height="2.5" fill="#fff" stroke="#2a2aff" stroke-width="1"/><rect x="20.75" y="19.75" width="2.5" height="2.5" fill="#fff" stroke="#2a2aff" stroke-width="1"/><rect x="4.75" y="2.25" width="2.5" height="2.5" fill="#fff" stroke="#2a2aff" stroke-width="1"/><rect x="17.75" y="2.25" width="2.5" height="2.5" fill="#fff" stroke="#2a2aff" stroke-width="1"/></svg>
<svg class="a" style="left:554px;top:99px;" width="22" height="22" viewBox="0 0 24 24"><text x="6.500" y="22" font-size="10" fill="#222" text-anchor="middle">3D</text><path d="M13 18c6-6-4-8 3-13c3-2 5-1 6 0" stroke="#222" stroke-width="1" fill="none"/><rect x="10.75" y="6.75" width="2.5" height="2.5" fill="#fff" stroke="#2a2aff" stroke-width="1"/><rect x="20.75" y="2.25" width="2.5" height="2.5" fill="#fff" stroke="#2a2aff" stroke-width="1"/><rect x="14.75" y="15.75" width="2.5" height="2.5" fill="#fff" stroke="#2a2aff" stroke-width="1"/></svg>
<svg class="a" style="left:593px;top:98px;" width="24" height="24" viewBox="0 0 24 24"><circle cx="14" cy="9.500" r="7.500" fill="#c8c8c8" stroke="#a8a8a8" stroke-width="1" /><circle cx="12" cy="8" r="3.500" fill="#e8e8e8"/><path d="M3 10h9v9l-3 3h-6z" fill="#e0e0e0" stroke="#a8a8a8" stroke-width="1" /><path d="M12 10l3-2M12 19l3-2" stroke="#a8a8a8" stroke-width="1"  fill="none"/></svg>
<svg class="a" style="left:623px;top:98px;" width="24" height="24" viewBox="0 0 24 24"><circle cx="15" cy="9" r="7.500" fill="#f4f4f4" stroke="#a8a8a8" stroke-width="1" /><path d="M4 10l3-3h9v9l-3 3h-9z" fill="#e4e4e4" stroke="#a8a8a8" stroke-width="1" /><path d="M9 9h7v6c-4 1-7-2-7-6z" fill="#b0b0b0"/></svg>
<svg class="a" style="left:653px;top:98px;" width="24" height="24" viewBox="0 0 24 24"><circle cx="15" cy="9" r="7.500" fill="#f4f4f4" stroke="#a8a8a8" stroke-width="1" /><path d="M4 10l3-3h9v9l-3 3h-9z" fill="none" stroke="#a8a8a8" stroke-width="1" /><path d="M10 10h5v6h-3c-2-1-2-3-2-6z" fill="#c8c8c8" stroke="#a8a8a8" stroke-width="1" /></svg>
<svg class="a" style="left:683px;top:98px;" width="24" height="24" viewBox="0 0 24 24"><circle cx="12" cy="12" r="9.500" fill="#c4c4c4" stroke="#a8a8a8" stroke-width="1" /><circle cx="9" cy="9" r="4" fill="#e6e6e6"/><path d="M3 6l17 16" stroke="#f0f0f0" stroke-width="3.500"/><path d="M2 7l16 15M5 4l16 15" stroke="#a8a8a8" stroke-width="1"  fill="none"/></svg>
<svg class="a" style="left:745px;top:98px;" width="24" height="24" viewBox="0 0 24 24"><rect x="2.500" y="9" width="12" height="12" fill="#3a9a9a" stroke="#2a2a8a" stroke-width="1"/><path d="M12 3h7l3.500 3.500v7l-3.500 3.500h-7l-3.500-3.500v-7z" fill="#3a9a9a" stroke="#2a2a8a" stroke-width="1"/><path d="M8.500 9h6v8" fill="none" stroke="#2a2a8a" stroke-width="1"/></svg>
<svg class="a" style="left:775px;top:98px;" width="24" height="24" viewBox="0 0 24 24"><path d="M12 3h7l3.500 3.500v7l-3.500 3.500h-7l-3.500-3.500v-7z" fill="#fff" stroke="#a0a0a0" stroke-width="1"/><path d="M2.500 9h6v5l3.500 3.500h2.500v3.500h-12z" fill="#3a9a9a" stroke="#2a2a8a" stroke-width="1"/></svg>
<svg class="a" style="left:805px;top:98px;" width="24" height="24" viewBox="0 0 24 24"><rect x="2.500" y="9" width="12" height="12" fill="#fff" stroke="#8a8a8a" stroke-width="1"/><path d="M12 3h7l3.500 3.500v7l-3.500 3.500h-7l-3.500-3.500v-7z" fill="none" stroke="#a0a0a0" stroke-width="1"/><path d="M8.500 9h6v8h-2.500l-3.500-3.500z" fill="#3a9a9a" stroke="#2a2a8a" stroke-width=".8"/></svg>
<svg class="a" style="left:846px;top:98px;" width="24" height="24" viewBox="0 0 24 24"><path d="M2.500 3h12v14h-12zM5.500 5.500h12v14h-12zM8.500 8h12v14h-12z" fill="none" stroke="#a6a6a6" stroke-width="1"/></svg>
<svg class="a" style="left:876px;top:98px;" width="24" height="24" viewBox="0 0 24 24"><path d="M2.500 2.500h8v8h-8zM13.500 2.500h8v8h-8zM2.500 13.500h8v8h-8zM13.500 13.500h8v8h-8z" fill="none" stroke="#a6a6a6" stroke-width="1"/></svg>
<svg class="a" style="left:906px;top:98px;" width="24" height="24" viewBox="0 0 24 24"><circle cx="12" cy="5.500" r="3.700" fill="none" stroke="#a6a6a6" stroke-width="1"/><circle cx="5.500" cy="12" r="3.700" fill="none" stroke="#a6a6a6" stroke-width="1"/><circle cx="18.500" cy="12" r="3.700" fill="none" stroke="#a6a6a6" stroke-width="1"/><circle cx="12" cy="19.500" r="3.700" fill="none" stroke="#a6a6a6" stroke-width="1"/></svg>
<svg class="a" style="left:936px;top:98px;" width="24" height="24" viewBox="0 0 24 24"><rect x="1.500" y="1.500" width="21" height="21" fill="none" stroke="#c8c8c8" stroke-width=".8" stroke-dasharray="1 1.500"/><path d="M3 4h12v13h-12zM6 6.500h12v13h-12zM9 9h12v13h-12z" fill="none" stroke="#a6a6a6" stroke-width="1"/></svg>
<svg class="a" style="left:966px;top:98px;" width="24" height="24" viewBox="0 0 24 24"><path d="M2.500 3h8v7.500h-8zM13.500 3h8v7.500h-8zM2.500 13.500h8v7.500h-8zM13.500 13.500h8v7.500h-8z" fill="none" stroke="#a6a6a6" stroke-width="1"/></svg>
<svg class="a" style="left:996px;top:98px;" width="24" height="24" viewBox="0 0 24 24"><rect x="1.500" y="1.500" width="21" height="21" fill="none" stroke="#c8c8c8" stroke-width=".8" stroke-dasharray="1 1.500"/><circle cx="12" cy="6.500" r="4" fill="none" stroke="#a6a6a6" stroke-width="1"/><circle cx="7" cy="12" r="4" fill="none" stroke="#a6a6a6" stroke-width="1"/><circle cx="17" cy="12" r="4" fill="none" stroke="#a6a6a6" stroke-width="1"/><circle cx="12" cy="17.500" r="4" fill="none" stroke="#a6a6a6" stroke-width="1"/></svg>
<svg class="a" style="left:1027px;top:98px;" width="24" height="24" viewBox="0 0 24 24"><path d="M2.500 2.500v18.500h8.500c-5-3-7-9-7-18.500z" fill="#e8e8e8" stroke="#c0c0c0" stroke-width=".8"/><path d="M19 2.500h3.500v18.500h-9c4-3 5.500-9 5.500-18.500z" fill="#b0b0b0" stroke="#9a9a9a" stroke-width=".8"/></svg>
<svg class="a" style="left:1057px;top:98px;" width="24" height="24" viewBox="0 0 24 24"><path d="M13 1.500v9.500h9.500z" fill="none" stroke="#a6a6a6" stroke-width="1"/><path d="M2 12.500v9.500h9.500z" fill="none" stroke="#a6a6a6" stroke-width="1"/><path d="M2 19h3v3h-3z" fill="#b0b0b0"/><path d="M5 19l5-5" stroke="#c8c8c8" stroke-width=".9" stroke-dasharray="1.500 1"/></svg>
<svg class="a" style="left:1195px;top:98px;" width="24" height="24" viewBox="0 0 24 24"><path d="M2 20L22 2" stroke="#777" stroke-width=".9" fill="none" stroke-dasharray="1.500 1.200"/><rect x="1.75" y="17.75" width="2.5" height="2.5" fill="#fff" stroke="#2a2aff" stroke-width="1"/><rect x="11.75" y="8.25" width="2.5" height="2.5" fill="#fff" stroke="#2a2aff" stroke-width="1"/></svg>
<svg class="a" style="left:1226px;top:98px;" width="24" height="24" viewBox="0 0 24 24"><path d="M1 12h22" stroke="#777" stroke-width=".9" fill="none" stroke-dasharray="1.500 1.200"/><rect x="10.25" y="10.75" width="2.5" height="2.5" fill="#fff" stroke="#2a2aff" stroke-width="1"/></svg>
<svg class="a" style="left:1255px;top:98px;" width="24" height="24" viewBox="0 0 24 24"><path d="M12 1v22" stroke="#777" stroke-width=".9" fill="none" stroke-dasharray="1.500 1.200"/><rect x="10.75" y="10.75" width="2.5" height="2.5" fill="#fff" stroke="#2a2aff" stroke-width="1"/></svg>
<svg class="a" style="left:1285px;top:98px;" width="24" height="24" viewBox="0 0 24 24"><path d="M1 19L17 3M6 23L23 6" stroke="#777" stroke-width=".9" fill="none" stroke-dasharray="1.500 1.200"/><rect x="7.75" y="8.75" width="2.5" height="2.5" fill="#fff" stroke="#2a2aff" stroke-width="1"/><rect x="12.25" y="13.75" width="2.5" height="2.5" fill="#fff" stroke="#2a2aff" stroke-width="1"/></svg>
<svg class="a" style="left:1315px;top:98px;" width="24" height="24" viewBox="0 0 24 24"><path d="M1 17L13 5M5 9l14 10" stroke="#777" stroke-width=".9" fill="none" stroke-dasharray="1.500 1.200"/><path d="M13 2v14M13 2l-1.500 3h3zM13 16l-1.500-3h3z" stroke="#222" stroke-width=".9" fill="#222"/><rect x="7.25" y="7.75" width="2.5" height="2.5" fill="#fff" stroke="#2a2aff" stroke-width="1"/><rect x="12.25" y="7.25" width="2.5" height="2.5" fill="#fff" stroke="#2a2aff" stroke-width="1"/><rect x="17.75" y="18.25" width="2.5" height="2.5" fill="#fff" stroke="#2a2aff" stroke-width="1"/></svg>
<svg class="a" style="left:1345px;top:98px;" width="24" height="24" viewBox="0 0 24 24"><path d="M3 3l18 18M3 21L21 3" stroke="#777" stroke-width=".9" fill="none" stroke-dasharray="1.500 1.200"/><rect x="10.75" y="10.75" width="2.5" height="2.5" fill="#fff" stroke="#2a2aff" stroke-width="1"/><rect x="18.75" y="2.75" width="2.5" height="2.5" fill="#fff" stroke="#222" stroke-width="1"/><rect x="2.75" y="18.75" width="2.5" height="2.5" fill="#fff" stroke="#222" stroke-width="1"/></svg>
<svg class="a" style="left:1375px;top:98px;" width="24" height="24" viewBox="0 0 24 24"><path d="M3 12h18" stroke="#222" stroke-width="1"/><path d="M2 12l4-2.500v5zM22 12l-4-2.500v5z" fill="#222"/><rect x="10.75" y="10.75" width="2.5" height="2.5" fill="#fff" stroke="#2a2aff" stroke-width="1"/></svg>
<svg class="a" style="left:1405px;top:98px;" width="24" height="24" viewBox="0 0 24 24"><path d="M3 19L19 3" stroke="#222" stroke-width="1"/><path d="M2 20l2-4.500 2.500 2.500zM20 2l-2 4.500-2.500-2.500z" fill="#222"/><path d="M8 22L23 8" stroke="#b0a020" stroke-width=".9"/><path d="M3 23L23 3" stroke="#777" stroke-width=".9" fill="none" stroke-dasharray="1.500 1.200"/><rect x="8.75" y="9.25" width="2.5" height="2.5" fill="#fff" stroke="#2a2aff" stroke-width="1"/><circle cx="15.500" cy="15" r="1.800" fill="#fff" stroke="#e00000" stroke-width=".9"/></svg>
<svg class="a" style="left:1435px;top:98px;" width="24" height="24" viewBox="0 0 24 24"><circle cx="12" cy="12" r="10" stroke="#777" stroke-width=".9" fill="none" stroke-dasharray="2 1.500"/><rect x="10.75" y="10.75" width="2.5" height="2.5" fill="#fff" stroke="#2a2aff" stroke-width="1"/><rect x="20.75" y="10.75" width="2.5" height="2.5" fill="#fff" stroke="#2a2aff" stroke-width="1"/></svg>
<svg class="a" style="left:1466px;top:98px;" width="24" height="24" viewBox="0 0 24 24"><circle cx="12" cy="12" r="10" stroke="#777" stroke-width=".9" fill="none" stroke-dasharray="2 1.500"/><rect x="0.75" y="10.75" width="2.5" height="2.5" fill="#fff" stroke="#2a2aff" stroke-width="1"/><rect x="20.75" y="10.75" width="2.5" height="2.5" fill="#fff" stroke="#2a2aff" stroke-width="1"/></svg>
<svg class="a" style="left:1496px;top:98px;" width="24" height="24" viewBox="0 0 24 24"><circle cx="12" cy="12" r="10" stroke="#777" stroke-width=".9" fill="none" stroke-dasharray="2 1.500"/><rect x="3.75" y="3.75" width="2.5" height="2.5" fill="#fff" stroke="#2a2aff" stroke-width="1"/><rect x="17.75" y="3.75" width="2.5" height="2.5" fill="#fff" stroke="#2a2aff" stroke-width="1"/><rect x="10.75" y="20.75" width="2.5" height="2.5" fill="#fff" stroke="#2a2aff" stroke-width="1"/></svg>
<svg class="a" style="left:1526px;top:98px;" width="24" height="24" viewBox="0 0 24 24"><circle cx="12" cy="12" r="10" stroke="#222" stroke-width="1.100" fill="none"/><path d="M12 2v3M12 19v3M2 12h3M19 12h3M5 5l2 2M17 17l2 2M19 5l-2 2M7 17l-2 2M7 3.500l1 2M17 3.500l-1 2M3.500 7l2 1M20.500 7l-2 1M3.500 17l2-1M20.500 17l-2-1M7 20.500l1-2M17 20.500l-1-2" stroke="#222" stroke-width=".9"/><path d="M2 22L22 2" stroke="#444" stroke-width=".9"/><rect x="10.75" y="10.75" width="2.5" height="2.5" fill="#fff" stroke="#2a2aff" stroke-width="1"/><rect x="18.25" y="3.25" width="2.5" height="2.5" fill="#fff" stroke="#222" stroke-width="1"/></svg>
<div class="a" style="left:1555px;top:97px;width:1px;height:28px;background:#555;"></div>
<svg class="a" style="left:1560px;top:98px;" width="24" height="24" viewBox="0 0 24 24"><path d="M2 20L22 2" stroke="#777" stroke-width=".9" fill="none" stroke-dasharray="1.500 1.200"/><rect x="1.75" y="17.75" width="2.5" height="2.5" fill="#fff" stroke="#2a2aff" stroke-width="1"/><rect x="8.75" y="11.25" width="2.5" height="2.5" fill="#fff" stroke="#2a2aff" stroke-width="1"/></svg>
<svg class="a" style="left:1591px;top:98px;" width="24" height="24" viewBox="0 0 24 24"><path d="M12 1v22" stroke="#777" stroke-width=".9" fill="none" stroke-dasharray="1.500 1.200"/><rect x="10.75" y="19.75" width="2.5" height="2.5" fill="#fff" stroke="#2a2aff" stroke-width="1"/></svg>
<svg class="a" style="left:1620px;top:98px;" width="24" height="24" viewBox="0 0 24 24"><path d="M1 12h22" stroke="#777" stroke-width=".9" fill="none" stroke-dasharray="1.500 1.200"/><rect x="0.75" y="10.75" width="2.5" height="2.5" fill="#fff" stroke="#2a2aff" stroke-width="1"/></svg>
<svg class="a" style="left:13px;top:132px;" width="24" height="24" viewBox="0 0 24 24"><circle cx="12" cy="12" r="7" fill="none" stroke="#a8a890" stroke-width="3.500" stroke-dasharray="2.700 1.700"/><circle cx="12" cy="12" r="5.500" fill="#c8c8b8" stroke="#8a8a78" stroke-width=".8"/><circle cx="12" cy="12" r="2.500" fill="#f0f0f0" stroke="#8a8a78" stroke-width=".8"/><path d="M12 6.500v11M6.500 12h11M8 8l8 8M16 8l-8 8" stroke="#9a9a88" stroke-width=".8"/></svg>
<svg class="a" style="left:43px;top:132px;" width="24" height="24" viewBox="0 0 24 24"><path d="M2 19l9 4 11-4-9-3z" fill="#fff" stroke="#222" stroke-width=".9"/><path d="M2 15.500l9 4 11-4-9-3z" fill="#fff" stroke="#222" stroke-width=".9"/><path d="M2 12l9 4 11-4-9-3z" fill="#b8b8b8" stroke="#222" stroke-width=".9"/><path d="M8 8l6-5h6v6l-5 1-2 2.500-4-1z" fill="#fff" stroke="#222" stroke-width=".9"/><path d="M13.500 5.500l-3 2.500M15.500 6l-3 3M17.500 7l-3 2.500" stroke="#222" stroke-width=".7"/><path d="M22 1.500v7" stroke="#2a2ab0" stroke-width="2"/></svg>
<svg class="a" style="left:74.5px;top:138px;" width="14" height="11.2" viewBox="0 0 20 16"><path d="M1 8c4-6 13-6 17 0c-4 5-13 5-17 0z" fill="#fff" stroke="#333" stroke-width="1"/><circle cx="9.500" cy="7.500" r="3.600" fill="#1a2a6a"/><circle cx="9.500" cy="7.500" r="1.500" fill="#000"/><circle cx="8.300" cy="6.300" r=".9" fill="#fff"/><path d="M1 7c4-6 13-6 17 0" stroke="#222" stroke-width="1.600" fill="none"/></svg>
<svg class="a" style="left:91px;top:136px;" width="12.5" height="14" viewBox="0 0 16 18"><circle cx="7" cy="11" r="5" fill="#d8d8d8" stroke="#b0b0b0" stroke-width=".9"/><path d="M9 6c0-5 5-5 5-1" stroke="#b8b8b8" stroke-width="1.300" fill="none"/><path d="M6.500 9v4" stroke="#f4f4f4" stroke-width="1.200"/></svg>
<svg class="a" style="left:1093px;top:132px;" width="24" height="24" viewBox="0 0 24 24"><path d="M3 10l13 11" stroke="#222" stroke-width=".9"/><path d="M9 15l7 6" stroke="#20c020" stroke-width="1.100"/><path d="M11 12l8-8.500 3 3-8 8.500-4.500 1.500z" fill="#c8c8c8" stroke="#333" stroke-width=".9"/><path d="M13 10.500l7-7M14.500 13l7-7.500" stroke="#555" stroke-width=".7"/></svg>
<div class="a" style="left:1121px;top:129px;width:30px;height:29px;background:#cce4f7;border:1px solid #99d1ff;"></div>
<svg class="a" style="left:1124px;top:132px;" width="24" height="24" viewBox="0 0 24 24"><ellipse cx="11.500" cy="18" rx="9.500" ry="3.600" fill="none" stroke="#111" stroke-width="1.2"/><path d="M4.500 7.500c0 6 2.500 9.500 7 9.500s7-3.500 7-9.500z" fill="none" stroke="#111" stroke-width="1.2"/><ellipse cx="11.500" cy="7.500" rx="7" ry="2.600" fill="none" stroke="#111" stroke-width="1.2"/><path d="M18.300 9c3.500-1.500 5 1 3 3.500c-1.200 1.500-3 2-4.500 2" fill="none" stroke="#111" stroke-width="1.2"/><path d="M5.500 12h12M7.500 15h8" stroke="#111" stroke-width="1" fill="none"/></svg>
<svg class="a" style="left:1147px;top:155px;" width="5" height="5" viewBox="0 0 5 5"><path d="M5 0v5h-5z" fill="#111"/></svg>
<svg class="a" style="left:1165px;top:132px;" width="24" height="24" viewBox="0 0 24 24"><path d="M4 21.500L24 1.500" stroke="#222" stroke-width=".9"/><path d="M3 21L13.500 10.500" stroke="#e02020" stroke-width=".9"/><path d="M2.500 15.500L11.500 7.500M11.500 7.500l-4 .5M11.500 7.500l-.5 4M18.500 13L10 20.500M10 20.500l4-.5M10 20.500l.5-4" stroke="#2a2aff" stroke-width=".95" fill="none"/></svg>
<svg class="a" style="left:1196px;top:132px;" width="24" height="24" viewBox="0 0 24 24"><path d="M2 12h11" stroke="#222" stroke-width=".9"/><path d="M9 17L14 6" stroke="#2a2aff" stroke-width=".95"/><path d="M14 12h5" stroke="#e02020" stroke-width=".9" stroke-dasharray="1.500 1.500"/></svg>
<svg class="a" style="left:1226px;top:132px;" width="24" height="24" viewBox="0 0 24 24"><path d="M14 3l8 8M3 14l8 8" stroke="#e02020" stroke-width=".9"/><path d="M22 2l-5 5M7 17l-5 5" stroke="#222" stroke-width=".9"/></svg>
<svg class="a" style="left:1256px;top:132px;" width="24" height="24" viewBox="0 0 24 24"><path d="M4 18a9.500 9.500 0 0 1 14-13" stroke="#e02020" stroke-width=".95" fill="none"/><path d="M18 5a9.500 9.500 0 0 1-2 17" stroke="#222" stroke-width=".95" fill="none"/><path d="M11 15L20 4" stroke="#999" stroke-width=".8" stroke-dasharray="1.500 1"/></svg>
<svg class="a" style="left:1285px;top:132px;" width="24" height="24" viewBox="0 0 24 24"><path d="M3 15L16 2" stroke="#e02020" stroke-width=".9"/><path d="M5 3l18 19" stroke="#222" stroke-width=".9"/><path d="M3 2l4 4" stroke="#999" stroke-width=".8" stroke-dasharray="1 1"/></svg>
<svg class="a" style="left:1316px;top:132px;" width="24" height="24" viewBox="0 0 24 24"><path d="M7 15.500L17 5.500M10.500 18.500L20.500 8.500M14 21.500L24 11.500" stroke="#e02020" stroke-width=".9" transform="translate(-1 -1)"/><path d="M7 15.500L17 5.500" stroke="#222" stroke-width=".5" transform="translate(-.5 -.5)"/><path d="M8 4.500l-5 4.500M3 9l.8-3.200M3 9l3.200-.5" stroke="#2a2aff" stroke-width=".95" fill="none"/></svg>
<svg class="a" style="left:1346px;top:132px;" width="24" height="24" viewBox="0 0 24 24"><path d="M2 3h9l5 15h-14z" fill="none" stroke="#222" stroke-width=".9"/><path d="M11 3l5 15h-14" fill="none" stroke="#e02020" stroke-width=".9"/><rect x="15" y="13" width="8" height="9" fill="none" stroke="#222" stroke-width=".9" stroke-dasharray="1 1"/><path d="M16 4l5 5M21 9l-.5-3.500M21 9l-3.500-.5" stroke="#2a2aff" stroke-width=".9" fill="none"/></svg>
<svg class="a" style="left:1376px;top:132px;" width="24" height="24" viewBox="0 0 24 24"><path d="M5 7l-2.500 16M19 2l-2.500 16" stroke="#222" stroke-width=".95"/><path d="M4 22l10-4M14 18l-3.500-1M14 18l-2 3" stroke="#2a2aff" stroke-width=".9" fill="none"/></svg>
<svg class="a" style="left:1405px;top:132px;" width="24" height="24" viewBox="0 0 24 24"><circle cx="12" cy="12" r="10" fill="none" stroke="#222" stroke-width=".95"/><path d="M2.500 15a10 10 0 0 1 16.500-10" stroke="#e02020" stroke-width=".95" fill="none"/></svg>
<svg class="a" style="left:1435px;top:132px;" width="24" height="24" viewBox="0 0 24 24"><path d="M2 3l22 6" stroke="#222" stroke-width=".9"/><path d="M2 3l11 19" stroke="#222" stroke-width=".9"/><path d="M2 3l5.500 9.500M2 3l6 1.600" stroke="#e02020" stroke-width=".95"/></svg>
<svg class="a" style="left:1465px;top:132px;" width="24" height="24" viewBox="0 0 24 24"><circle cx="18" cy="7" r="6.300" fill="none" stroke="#20d020" stroke-width=".95"/><rect x="2.500" y="8.500" width="17" height="13" fill="none" stroke="#222" stroke-width=".95"/><path d="M11.800 8.500a6.300 6.300 0 0 0 7.700 4.600" stroke="#e02020" stroke-width=".95" fill="none"/></svg>
<div class="a" style="left:1495px;top:131px;width:1px;height:28px;background:#555;"></div>
<svg class="a" style="left:1500px;top:132px;" width="24" height="24" viewBox="0 0 24 24"><path d="M3 2v10" stroke="#222" stroke-width=".95"/><path d="M3 12c0 7 4 10.500 11 10.500" stroke="#e02020" stroke-width=".95" fill="none"/><path d="M14 22.500h9" stroke="#222" stroke-width=".95"/></svg>
<svg class="a" style="left:1532px;top:132px;" width="24" height="24" viewBox="0 0 24 24"><path d="M2 17h5M20 2v4" stroke="#222" stroke-width=".9"/><path d="M6 17L20 3" stroke="#e02020" stroke-width=".9"/><path d="M7 21h12M7 19v4M19 19v4M11 21h4" stroke="#2a2aff" stroke-width=".9" fill="none" stroke-dasharray="4 4"/><path d="M22 7v10M20.500 7h3M20.500 17h3" stroke="#2a2aff" stroke-width=".9" fill="none"/></svg>
<svg class="a" style="left:1563px;top:132px;" width="24" height="24" viewBox="0 0 24 24"><path d="M2 17h5M20 2v4" stroke="#222" stroke-width=".9"/><path d="M6 17L20 3" stroke="#e02020" stroke-width=".9"/><path d="M7 21h11M7 19v4M18 19v4" stroke="#2a2aff" stroke-width=".9" fill="none"/><path d="M22 15c0-4-1-6-3-7M19 8l3.500.5M19 8l.5 3.500" stroke="#2a2aff" stroke-width=".9" fill="none"/></svg>
<svg class="a" style="left:1593px;top:132px;" width="24" height="24" viewBox="0 0 24 24"><path d="M2 20h5M20 4v4" stroke="#222" stroke-width=".9"/><path d="M6 20L20 6" stroke="#e02020" stroke-width=".9"/><path d="M3 16L17 2M3 16l1-3.500M3 16l3.500-1M17 2l-1 3.500M17 2l-3.500 1" stroke="#2a2aff" stroke-width=".9" fill="none"/><path d="M23 17c0-4-1-6-3-7M20 10l3.500.5M20 10l.5 3.500" stroke="#2a2aff" stroke-width=".9" fill="none"/></svg>
<svg class="a" style="left:1621px;top:132px;" width="24" height="24" viewBox="0 0 24 24"><path d="M4 12h4v-5h6v5h5v9h-15z" fill="#ececec" stroke="#b4b4b4" stroke-width="1"/><path d="M7 15h9v4h-9M11 4v6M9 8l2 2 2-2" fill="none" stroke="#b4b4b4" stroke-width="1"/></svg>
<div class="a" style="left:1650px;top:131px;width:1px;height:28px;background:#555;"></div>
<svg class="a" style="left:1657px;top:132px;" width="24" height="24" viewBox="0 0 24 24"><path d="M3 20c3-8 6-10 9-5s5 2 9-8" stroke="#666" stroke-width="1.600" fill="none"/><rect x="1.25" y="19.25" width="3.5" height="3.5" fill="#fff" stroke="#666" stroke-width="1"/><rect x="7.25" y="3.25" width="3.5" height="3.5" fill="#fff" stroke="#666" stroke-width="1"/><rect x="20.25" y="4.25" width="3.5" height="3.5" fill="#fff" stroke="#666" stroke-width="1"/><rect x="13.25" y="20.25" width="3.5" height="3.5" fill="#fff" stroke="#666" stroke-width="1"/><path d="M9 9h1M12 9h1M15 18h1" stroke="#666" stroke-width="1.500"/></svg>
<svg class="a" style="left:1688px;top:132px;" width="24" height="24" viewBox="0 0 24 24"><path d="M2 21c2-18 17-18 21 0" stroke="#a8a8a8" stroke-width="1.300" fill="none"/><path d="M5 21c2-14 12-14 15 0" stroke="#c4c4c4" stroke-width="1" fill="none"/></svg>
<div class="a" style="left:1717px;top:131px;width:1px;height:28px;background:#555;"></div>
<svg class="a" style="left:1723px;top:132px;" width="24" height="24" viewBox="0 0 24 24"><path d="M2 19L15 3M9 3l13 11" stroke="#a8a8a8" stroke-width="1"/><path d="M5 22l7-6 7 6" stroke="#a8a8a8" stroke-width="1" fill="none"/><path d="M2 3l7 8M15 12l7 9" stroke="#d4d4d4" stroke-width=".9"/></svg>
<svg class="a" style="left:1754px;top:132px;" width="24" height="24" viewBox="0 0 24 24"><path d="M8 2v6h-7M16 2v6h7M8 22v-6h-7M16 22v-6h7" stroke="#a8a8a8" stroke-width="1.100" fill="none"/><path d="M8 8h8v8h-8z" stroke="#dcdcdc" stroke-width=".9" fill="none"/></svg>
<svg class="a" style="left:1785px;top:132px;" width="24" height="24" viewBox="0 0 24 24"><rect x="1.500" y="7" width="7" height="6" fill="none" stroke="#222" stroke-width="1.200" stroke-dasharray="2 1.200" rx="1"/><rect x="10" y="14" width="8" height="7" fill="#fff" stroke="#e02020" stroke-width="1.200"/><path d="M8 6c4-2 7 0 7 5M15 11l-2.500-2M15 11l2-2.500" stroke="#20c020" stroke-width="1.300" fill="none"/></svg>
<svg class="a" style="left:1814px;top:132px;" width="24" height="24" viewBox="0 0 24 24"><path d="M9 4h6v4h4v8h-4v4h-6v-4h-4v-8h4z" fill="#c03030" stroke="#222" stroke-width="1.200" stroke-linejoin="round" transform="rotate(0 12 12)"/><rect x="10" y="6" width="4" height="12" fill="#fff" stroke="#c03030" stroke-width="1"/><circle cx="6.500" cy="12" r="1.300" fill="#fff"/><circle cx="17.500" cy="12" r="1.300" fill="#fff"/></svg>
<svg class="a" style="left:1580px;top:196px;" width="18" height="18" viewBox="0 0 16 16"><path d="M4 1.500v11.500l3-2.500 2 4.500 1.800-.8-2-4.400h4z" fill="#fff" stroke="#000" stroke-width="1"/></svg>
<svg class="a" style="left:1602px;top:196px;" width="18" height="18" viewBox="0 0 16 16"><path d="M2 13c1-5 3-8 6-10" stroke="#000" stroke-width=".9" fill="none"/><rect x="5" y="4" width="2.500" height="2.500" fill="#2a2aff"/><path d="M8 6v8l2-2 1.500 3 1.200-.6-1.500-3h2.800z" fill="#fff" stroke="#000" stroke-width=".8"/></svg>
<svg class="a" style="left:1624px;top:196px;" width="18" height="18" viewBox="0 0 16 16"><circle cx="7.500" cy="8" r="6.500" fill="#2a4ad0" stroke="#223" stroke-width=".8"/><path d="M3 5c2-2 4-1 5 0s0 3-2 3-3 0-3-3zM6 11c2-1 4 0 4 1s-2 2-4 1z" fill="#30c040"/><path d="M12 1.500c3 3 3 10 0 13" stroke="#222" stroke-width="1.300" fill="none"/><path d="M14 2c2 3 2 9 0 12" stroke="#888" stroke-width="1" fill="none"/></svg>
<svg class="a" style="left:1751.5px;top:196px;" width="18" height="18" viewBox="0 0 16 16"><path d="M3 8l6-2 5 2v6l-5 2-6-2z" fill="#e02020" stroke="#400" stroke-width=".8"/><path d="M3 8l6 2 5-2M9 10v6" stroke="#400" stroke-width=".7" fill="none"/><path d="M4 2l4 4M9 1.500l-2 5M6 2l5 3" stroke="#222" stroke-width="1.100"/><path d="M8 4h4v3h-4z" fill="#ddd" stroke="#555" stroke-width=".6"/></svg>
<svg class="a" style="left:1768px;top:211px;" width="5" height="5" viewBox="0 0 5 5"><path d="M5 0v5h-5z" fill="#111"/></svg>
<svg class="a" style="left:1594px;top:261px;" width="18" height="18" viewBox="0 0 16 16"><path d="M5 5l4-2.500 5 6c1 2-2 4.500-4 3z" fill="#fff" stroke="#000" stroke-width=".9"/><path d="M7 4l2 3M4 4c1-2 3-2 5-1.500" stroke="#000" stroke-width=".8" fill="none" stroke-dasharray="1 .6"/><path d="M1 11.500l2 2M3 11.500l-2 2" stroke="#e00" stroke-width=".8"/><path d="M12.500 1l1 1.300 1-1.300M13.500 2.300v1.700" stroke="#e00" stroke-width=".7" fill="none"/></svg>
<svg class="a" style="left:1623px;top:262px;" width="16" height="16" viewBox="0 0 16 16"><path d="M4 8h8M10 6l2.500 2-2.500 2" stroke="#000" stroke-width="1" fill="none" /><rect x="1.4" y="6.9" width="2.200" height="2.200" fill="#fff" stroke="#777" stroke-width="1.150"/><rect x="11.4" y="6.9" width="2.200" height="2.200" fill="#fff" stroke="#f00000" stroke-width="1.150"/></svg>
<svg class="a" style="left:1651px;top:262px;" width="16" height="16" viewBox="0 0 16 16"><path d="M2 12l6-6 6 8" stroke="#000" stroke-width="1" fill="none" /><path d="M8 6l2.500-3.500M10.500 3l3 10" stroke="#fff" stroke-width=".9" stroke-dasharray="1 1" fill="none"/><rect x="6.9" y="4.9" width="2.200" height="2.200" fill="#fff" stroke="#f00000" stroke-width="1.150"/><rect x="9.9" y="1.4" width="2.200" height="2.200" fill="#fff" stroke="#444" stroke-width="1.150"/></svg>
<svg class="a" style="left:1679px;top:262px;" width="16" height="16" viewBox="0 0 16 16"><path d="M2 14L14 2" stroke="#000" stroke-width="1" fill="none" /><rect x="4.4" y="9.4" width="2.200" height="2.200" fill="#fff" stroke="#f00000" stroke-width="1.150"/><rect x="9.9" y="3.9" width="2.200" height="2.200" fill="#fff" stroke="#f00000" stroke-width="1.150"/></svg>
<svg class="a" style="left:1707px;top:262px;" width="16" height="16" viewBox="0 0 16 16"><path d="M4 13a6 6 0 1 1 10-5" stroke="#000" stroke-width="1" fill="none" /><rect x="7.4" y="7.9" width="2.200" height="2.200" fill="#fff" stroke="#f00000" stroke-width="1.150"/></svg>
<svg class="a" style="left:1735px;top:262px;" width="16" height="16" viewBox="0 0 16 16"><path d="M2.500 5.500h8v8h-8zM5.500 2.500h8v8h-8zM2.500 5.500l3-3M10.500 5.500l3-3M2.500 13.500l3-3M10.500 13.500l3-3" stroke="#000" stroke-width=".9" fill="none"/><rect x="5.9" y="7.9" width="2.200" height="2.200" fill="#fff" stroke="#f00000" stroke-width="1.150"/></svg>
<svg class="a" style="left:1763px;top:262px;" width="16" height="16" viewBox="0 0 16 16"><circle cx="8" cy="8" r="6" stroke="#000" stroke-width="1" fill="none"/><path d="M8 4v8M4 8h8" stroke="#000" stroke-width=".7" stroke-dasharray="1 .8"/><path d="M6.800 1.200l1.200 1.600 1.200-1.600M6.800 14.800l1.200-1.600 1.200 1.600M1.200 6.800l1.600 1.200-1.600 1.200M14.800 6.800l-1.600 1.200 1.600 1.200" stroke="#e00" stroke-width=".9" fill="none"/></svg>
<svg class="a" style="left:1791px;top:262px;" width="16" height="16" viewBox="0 0 16 16"><path d="M2 2l12 12M2 14L14 2" stroke="#000" stroke-width="1" fill="none" /><rect x="6.9" y="6.9" width="2.200" height="2.200" fill="#fff" stroke="#f00000" stroke-width="1.150"/></svg>
<svg class="a" style="left:1595px;top:290px;" width="16" height="16" viewBox="0 0 16 16"><rect x="2" y="2" width="1" height="1" fill="#000"/><rect x="2" y="5" width="1" height="1" fill="#000"/><rect x="2" y="8" width="1" height="1" fill="#000"/><rect x="2" y="11" width="1" height="1" fill="#000"/><rect x="2" y="14" width="1" height="1" fill="#000"/><rect x="5" y="2" width="1" height="1" fill="#000"/><rect x="5" y="5" width="1" height="1" fill="#000"/><rect x="5" y="8" width="1" height="1" fill="#000"/><rect x="5" y="11" width="1" height="1" fill="#000"/><rect x="5" y="14" width="1" height="1" fill="#000"/><rect x="8" y="2" width="1" height="1" fill="#000"/><rect x="8" y="5" width="1" height="1" fill="#000"/><rect x="8" y="8" width="1" height="1" fill="#000"/><rect x="8" y="11" width="1" height="1" fill="#000"/><rect x="8" y="14" width="1" height="1" fill="#000"/><rect x="11" y="2" width="1" height="1" fill="#000"/><rect x="11" y="5" width="1" height="1" fill="#000"/><rect x="11" y="8" width="1" height="1" fill="#000"/><rect x="11" y="11" width="1" height="1" fill="#000"/><rect x="11" y="14" width="1" height="1" fill="#000"/><rect x="14" y="2" width="1" height="1" fill="#000"/><rect x="14" y="5" width="1" height="1" fill="#000"/><rect x="14" y="8" width="1" height="1" fill="#000"/><rect x="14" y="11" width="1" height="1" fill="#000"/><rect x="13.4" y="12.9" width="2.200" height="2.200" fill="#fff" stroke="#f00000" stroke-width="1.150"/></svg>
<svg class="a" style="left:1623px;top:290px;" width="16" height="16" viewBox="0 0 16 16"><path d="M3 6l4-3 3 3-3 3zM8 8l5 6" stroke="#000" stroke-width="1" fill="none" /><path d="M9 5l4 6" stroke="#999" stroke-width=".7" stroke-dasharray="1 1"/><rect x="5.4" y="4.9" width="2.200" height="2.200" fill="#fff" stroke="#f00000" stroke-width="1.150"/><rect x="10.9" y="1.4" width="2.200" height="2.200" fill="#fff" stroke="#666" stroke-width="1.150"/></svg>
<svg class="a" style="left:1651px;top:290px;" width="16" height="16" viewBox="0 0 16 16"><path d="M2 14l3-11h6l3 11z" stroke="#000" stroke-width="1" fill="none" /><path d="M2 14h12" stroke="#000" stroke-width="1.400"/><rect x="6.9" y="6.9" width="2.200" height="2.200" fill="#fff" stroke="#f00000" stroke-width="1.150"/></svg>
<svg class="a" style="left:1679px;top:290px;" width="16" height="16" viewBox="0 0 16 16"><path d="M2 15c1-6 4-10 11-12M6 15c0-3 2-8 4-10M5 7l8-4" stroke="#000" stroke-width="1" fill="none" /><rect x="6.9" y="5.4" width="2.200" height="2.200" fill="#fff" stroke="#f00000" stroke-width="1.150"/></svg>
<svg class="a" style="left:1707px;top:290px;" width="16" height="16" viewBox="0 0 16 16"><path d="M3 13h10" stroke="#000" stroke-width="1" fill="none" /><path d="M8 13v-9" stroke="#000" stroke-width=".9" stroke-dasharray="1.200 1"/><path d="M6.500 1l3 3M9.500 1l-3 3" stroke="#e00" stroke-width="1"/><rect x="6.9" y="11.9" width="2.200" height="2.200" fill="#fff" stroke="#f00000" stroke-width="1.150"/></svg>
<svg class="a" style="left:1735px;top:290px;" width="16" height="16" viewBox="0 0 16 16"><path d="M2 8h12M8 4v10" stroke="#000" stroke-width="1" fill="none" /><path d="M6.500 1l3 3M9.500 1l-3 3" stroke="#e00" stroke-width="1"/><rect x="6.9" y="12.9" width="2.200" height="2.200" fill="#fff" stroke="#f00000" stroke-width="1.150"/></svg>
<svg class="a" style="left:1763px;top:290px;" width="16" height="16" viewBox="0 0 16 16"><path d="M8 1v14M1 8h14M3 3l10 10M3 13L13 3" stroke="#555" stroke-width=".8"/><path d="M12.500 1.500l1 1 1-1" stroke="#e00" stroke-width=".8" fill="none"/></svg>
<svg class="a" style="left:1791px;top:290px;" width="16" height="16" viewBox="0 0 16 16"><path d="M2 14l7-12v12z" fill="#777" stroke="#333" stroke-width=".7"/><path d="M9 2l5 10-5 2z" fill="#ccc" stroke="#555" stroke-width=".7"/><path d="M1 14.500h10" stroke="#999" stroke-width=".8"/><path d="M8 9l5 1-3 4z" fill="#fff" stroke="#888" stroke-width=".6"/><rect x="6.4" y="9.9" width="2.200" height="2.200" fill="#fff" stroke="#f00000" stroke-width="1.150"/></svg>
<svg class="a" style="left:1594px;top:317px;" width="18" height="18" viewBox="0 0 16 16"><path d="M4 10c-2-8 10-8 8 0" stroke="#000" stroke-width="2.400" fill="none"/><path d="M3 15.500c1-3 3-4 5-4s4 1 5 4" stroke="#000" stroke-width="1" fill="none"/><rect x="6.9" y="10.4" width="2.200" height="2.200" fill="#fff" stroke="#f00000" stroke-width="1.150"/></svg>
<svg class="a" style="left:1623px;top:318px;" width="16" height="16" viewBox="0 0 16 16"><path d="M3 14V3" stroke="#000" stroke-width="1" fill="none" /><path d="M3 3h7v4" stroke="#000" stroke-width=".9" stroke-dasharray="1.200 1" fill="none"/><path d="M10 9l4 5" stroke="#000" stroke-width="1" fill="none" /><rect x="1.9" y="1.4" width="2.200" height="2.200" fill="#fff" stroke="#f00000" stroke-width="1.150"/><rect x="8.9" y="7.9" width="2.200" height="2.200" fill="#fff" stroke="#f00000" stroke-width="1.150"/></svg>
<svg class="a" style="left:1651px;top:318px;" width="16" height="16" viewBox="0 0 16 16"><path d="M2 14L8 2l6 12" stroke="#000" stroke-width="1" fill="none" /><path d="M5 9l3 6 3-6" stroke="#000" stroke-width=".8" stroke-dasharray="1 1" fill="none"/><rect x="3.9" y="7.9" width="2.200" height="2.200" fill="#fff" stroke="#f00000" stroke-width="1.150"/><rect x="9.9" y="7.9" width="2.200" height="2.200" fill="#fff" stroke="#f00000" stroke-width="1.150"/></svg>
<svg class="a" style="left:1678px;top:317px;" width="18" height="18" viewBox="0 0 16 16"><path d="M3 2l5 3v10l-5-3z" fill="none" stroke="#e00" stroke-width="1"/><path d="M5 7l8-1.500v6l-8 1.500z" fill="#ccd" stroke="#22a" stroke-width=".9"/><path d="M8 5l5 3v4" stroke="#e00" stroke-width=".8" fill="none"/></svg>
<svg class="a" style="left:1595px;top:389.5px;" width="16" height="16" viewBox="0 0 16 16"><path d="M3 13L13 3" stroke="#000" stroke-width="1" fill="none" /><rect x="1.9" y="11.9" width="2.200" height="2.200" fill="#fff" stroke="#0a0aff" stroke-width="1.150"/><rect x="11.9" y="1.9" width="2.200" height="2.200" fill="#fff" stroke="#0a0aff" stroke-width="1.150"/></svg>
<svg class="a" style="left:1623px;top:389.5px;" width="16" height="16" viewBox="0 0 16 16"><path d="M3 10l6-7 4 4-5 4 3 4" stroke="#000" stroke-width="1" fill="none" /><rect x="1.9" y="8.9" width="2.200" height="2.200" fill="#fff" stroke="#0a0aff" stroke-width="1.150"/><rect x="7.9" y="1.9" width="2.200" height="2.200" fill="#fff" stroke="#0a0aff" stroke-width="1.150"/><rect x="11.9" y="5.9" width="2.200" height="2.200" fill="#fff" stroke="#0a0aff" stroke-width="1.150"/><rect x="8.9" y="13.4" width="2.200" height="2.200" fill="#fff" stroke="#0a0aff" stroke-width="1.150"/></svg>
<svg class="a" style="left:1651px;top:389.5px;" width="16" height="16" viewBox="0 0 16 16"><circle cx="8" cy="8" r="6.500" stroke="#000" stroke-width="1" fill="none"/><path d="M5 14.500h6" stroke="#000" stroke-width="1.800"/><rect x="6.9" y="7.4" width="2.200" height="2.200" fill="#fff" stroke="#0a0aff" stroke-width="1.150"/><rect x="0.9" y="3.9" width="2.200" height="2.200" fill="#fff" stroke="#0a0aff" stroke-width="1.150"/></svg>
<svg class="a" style="left:1679px;top:389.5px;" width="16" height="16" viewBox="0 0 16 16"><path d="M4 2l10 5-6 7z" stroke="#000" stroke-width="1" fill="none" /><rect x="2.9" y="1.4" width="2.200" height="2.200" fill="#fff" stroke="#0a0aff" stroke-width="1.150"/><rect x="12.9" y="6.4" width="2.200" height="2.200" fill="#fff" stroke="#0a0aff" stroke-width="1.150"/><rect x="6.9" y="12.9" width="2.200" height="2.200" fill="#fff" stroke="#0a0aff" stroke-width="1.150"/></svg>
<svg class="a" style="left:1707px;top:389.5px;" width="16" height="16" viewBox="0 0 16 16"><path d="M2.500 2.500h11v11h-11z" stroke="#000" stroke-width="1" fill="none" stroke-width="1.300"/><rect x="1.4" y="1.4" width="2.200" height="2.200" fill="#fff" stroke="#0a0aff" stroke-width="1.150"/><rect x="12.4" y="12.4" width="2.200" height="2.200" fill="#fff" stroke="#0a0aff" stroke-width="1.150"/></svg>
<svg class="a" style="left:1735px;top:389.5px;" width="16" height="16" viewBox="0 0 16 16"><path d="M2 9l6-6 5 5-6 6z" stroke="#000" stroke-width="1" fill="none" /><rect x="6.9" y="1.4" width="2.200" height="2.200" fill="#fff" stroke="#0a0aff" stroke-width="1.150"/><rect x="5.9" y="12.9" width="2.200" height="2.200" fill="#fff" stroke="#0a0aff" stroke-width="1.150"/><path d="M12 9v3M12 9h2.500M12 9l2 2" stroke="#1414ff" stroke-width=".9" fill="none"/></svg>
<svg class="a" style="left:1763px;top:389.5px;" width="16" height="16" viewBox="0 0 16 16"><path d="M2 12L12 2M7.500 7l6 6" stroke="#000" stroke-width="1" fill="none" /><rect x="6.4" y="5.9" width="2.200" height="2.200" fill="#fff" stroke="#0a0aff" stroke-width="1.150"/><rect x="12.4" y="12.9" width="2.200" height="2.200" fill="#fff" stroke="#0a0aff" stroke-width="1.150"/></svg>
<svg class="a" style="left:1791px;top:389.5px;" width="16" height="16" viewBox="0 0 16 16"><path d="M1 11L11 1M5 15L15 5" stroke="#000" stroke-width="1" fill="none" /><rect x="5.4" y="4.9" width="2.200" height="2.200" fill="#fff" stroke="#0a0aff" stroke-width="1.150"/><rect x="9.4" y="9.4" width="2.200" height="2.200" fill="#fff" stroke="#0a0aff" stroke-width="1.150"/></svg>
<svg class="a" style="left:1595px;top:418px;" width="16" height="16" viewBox="0 0 16 16"><circle cx="7" cy="9.500" r="5.500" stroke="#000" stroke-width="1" fill="none"/><path d="M4 1l11 11" stroke="#000" stroke-width="1" fill="none" /><path d="M4.500 15.200h5" stroke="#000" stroke-width="1.600"/><rect x="8.4" y="4.9" width="2.200" height="2.200" fill="#fff" stroke="#0a0aff" stroke-width="1.150"/></svg>
<svg class="a" style="left:1623px;top:418px;" width="16" height="16" viewBox="0 0 16 16"><path d="M3 1c7 1 9 8 4 14M7 4l8 8" stroke="#000" stroke-width="1" fill="none" /><path d="M6 15.200h2.500" stroke="#000" stroke-width="1.600"/><rect x="5.9" y="2.9" width="2.200" height="2.200" fill="#fff" stroke="#f00000" stroke-width="1.150"/><rect x="13.9" y="10.9" width="2.200" height="2.200" fill="#fff" stroke="#0a0aff" stroke-width="1.150"/></svg>
<svg class="a" style="left:1651px;top:418px;" width="16" height="16" viewBox="0 0 16 16"><path d="M3 1c9 2 9 12 1 14M7 3.500l8 8" stroke="#000" stroke-width="1" fill="none" /><path d="M3 15.200h2.500" stroke="#000" stroke-width="1.600"/><rect x="5.9" y="2.4" width="2.200" height="2.200" fill="#fff" stroke="#0a0aff" stroke-width="1.150"/><rect x="13.9" y="10.4" width="2.200" height="2.200" fill="#fff" stroke="#f00000" stroke-width="1.150"/></svg>
<svg class="a" style="left:1679px;top:418px;" width="16" height="16" viewBox="0 0 16 16"><path d="M2 2h5M3 9c5 0 5-5 2-7M6 6l9 5M8 15c0-5 7-5 7 0" stroke="#000" stroke-width="1" fill="none" /><rect x="3.9" y="1.9" width="2.200" height="2.200" fill="#fff" stroke="#444" stroke-width="1.150"/><rect x="12.9" y="9.9" width="2.200" height="2.200" fill="#fff" stroke="#444" stroke-width="1.150"/></svg>
<svg class="a" style="left:1707px;top:418px;" width="16" height="16" viewBox="0 0 16 16"><path d="M8 1c0 4 1 5 7 6M1 10c5-1 6 1 6 5M4 10l7-5" stroke="#000" stroke-width="1" fill="none" /><rect x="4.4" y="8.9" width="2.200" height="2.200" fill="#fff" stroke="#0a0aff" stroke-width="1.150"/><rect x="9.4" y="3.9" width="2.200" height="2.200" fill="#fff" stroke="#0a0aff" stroke-width="1.150"/></svg>
<svg class="a" style="left:1735px;top:418px;" width="16" height="16" viewBox="0 0 16 16"><path d="M8 2v13M2.500 9l5.500 6 5.500-6" stroke="#000" stroke-width="1" fill="none" /><rect x="6.9" y="0.9" width="2.200" height="2.200" fill="#fff" stroke="#0a0aff" stroke-width="1.150"/><rect x="0.9" y="7.4" width="2.200" height="2.200" fill="#fff" stroke="#0a0aff" stroke-width="1.150"/><rect x="12.9" y="7.4" width="2.200" height="2.200" fill="#fff" stroke="#0a0aff" stroke-width="1.150"/><rect x="6.9" y="13.9" width="2.200" height="2.200" fill="#fff" stroke="#0a0aff" stroke-width="1.150"/></svg>
<svg class="a" style="left:1595px;top:489.5px;" width="16" height="16" viewBox="0 0 16 16"><circle cx="8" cy="8" r="6.500" stroke="#000" stroke-width="1" fill="none"/><path d="M5.500 14.800h5" stroke="#000" stroke-width="1.800"/><rect x="6.9" y="6.9" width="2.200" height="2.200" fill="#fff" stroke="#0a0aff" stroke-width="1.150"/><rect x="13.4" y="6.9" width="2.200" height="2.200" fill="#fff" stroke="#0a0aff" stroke-width="1.150"/></svg>
<svg class="a" style="left:1623px;top:489.5px;" width="16" height="16" viewBox="0 0 16 16"><circle cx="8" cy="8" r="6.500" stroke="#000" stroke-width="1" fill="none"/><path d="M5.500 14.800h5" stroke="#000" stroke-width="1.800"/><circle cx="8" cy="8" r="4" stroke="#000" stroke-width="1" fill="none"/><rect x="6.9" y="6.9" width="2.200" height="2.200" fill="#fff" stroke="#0a0aff" stroke-width="1.150"/><rect x="10.9" y="6.9" width="2.200" height="2.200" fill="#fff" stroke="#0a0aff" stroke-width="1.150"/><rect x="13.4" y="6.9" width="2.200" height="2.200" fill="#fff" stroke="#0a0aff" stroke-width="1.150"/></svg>
<svg class="a" style="left:1651px;top:489.5px;" width="16" height="16" viewBox="0 0 16 16"><circle cx="8" cy="8" r="6.500" stroke="#000" stroke-width="1" fill="none"/><path d="M5.500 14.800h5" stroke="#000" stroke-width="1.800"/><rect x="0.4" y="6.9" width="2.200" height="2.200" fill="#fff" stroke="#0a0aff" stroke-width="1.150"/><rect x="13.4" y="6.9" width="2.200" height="2.200" fill="#fff" stroke="#0a0aff" stroke-width="1.150"/></svg>
<svg class="a" style="left:1679px;top:489.5px;" width="16" height="16" viewBox="0 0 16 16"><circle cx="8" cy="8" r="6.500" stroke="#000" stroke-width="1" fill="none"/><path d="M5.500 14.800h5" stroke="#000" stroke-width="1.800"/><path d="M1 1l6 2" stroke="#000" stroke-width="1" fill="none" /><rect x="4.4" y="0.9" width="2.200" height="2.200" fill="#fff" stroke="#0a0aff" stroke-width="1.150"/><rect x="11.4" y="11.4" width="2.200" height="2.200" fill="#fff" stroke="#0a0aff" stroke-width="1.150"/></svg>
<svg class="a" style="left:1707px;top:489.5px;" width="16" height="16" viewBox="0 0 16 16"><circle cx="8" cy="8" r="6.500" stroke="#000" stroke-width="1" fill="none"/><path d="M5.500 14.800h5" stroke="#000" stroke-width="1.800"/><path d="M1 1h14" stroke="#000" stroke-width="1" fill="none" stroke-width="1.300"/><path d="M8 2v12" stroke="#888" stroke-width=".7" stroke-dasharray="1 1"/><rect x="13.4" y="6.9" width="2.200" height="2.200" fill="#fff" stroke="#0a0aff" stroke-width="1.150"/><rect x="6.9" y="13.4" width="2.200" height="2.200" fill="#fff" stroke="#0a0aff" stroke-width="1.150"/></svg>
<svg class="a" style="left:1735px;top:489.5px;" width="16" height="16" viewBox="0 0 16 16"><circle cx="8" cy="8" r="6.500" stroke="#000" stroke-width="1" fill="none"/><rect x="2.4" y="1.9" width="2.200" height="2.200" fill="#fff" stroke="#0a0aff" stroke-width="1.150"/><rect x="11.4" y="1.9" width="2.200" height="2.200" fill="#fff" stroke="#0a0aff" stroke-width="1.150"/><rect x="6.9" y="13.4" width="2.200" height="2.200" fill="#fff" stroke="#0a0aff" stroke-width="1.150"/></svg>
<svg class="a" style="left:1763px;top:489.5px;" width="16" height="16" viewBox="0 0 16 16"><circle cx="8" cy="8" r="6.500" stroke="#000" stroke-width="1" fill="none"/><path d="M3 1l4 2M1 6l2 5M3 16l2-4M14 16l-2-4" stroke="#000" stroke-width="1" fill="none" /><rect x="6.9" y="0.4" width="2.200" height="2.200" fill="#fff" stroke="#0a0aff" stroke-width="1.150"/><rect x="1.4" y="8.9" width="2.200" height="2.200" fill="#fff" stroke="#0a0aff" stroke-width="1.150"/><rect x="12.4" y="10.9" width="2.200" height="2.200" fill="#fff" stroke="#0a0aff" stroke-width="1.150"/></svg>
<svg class="a" style="left:1791px;top:489.5px;" width="16" height="16" viewBox="0 0 16 16"><path d="M1 12L13 1M5 16c0-4 6-4 6 0" stroke="#000" stroke-width="1" fill="none" /><circle cx="9.500" cy="8" r="3.500" stroke="#999" stroke-width=".8" fill="none"/><rect x="5.9" y="4.9" width="2.200" height="2.200" fill="#fff" stroke="#0a0aff" stroke-width="1.150"/><rect x="12.4" y="7.4" width="2.200" height="2.200" fill="#fff" stroke="#0a0aff" stroke-width="1.150"/><rect x="8.4" y="10.9" width="2.200" height="2.200" fill="#fff" stroke="#0a0aff" stroke-width="1.150"/></svg>
<svg class="a" style="left:1595px;top:518px;" width="16" height="16" viewBox="0 0 16 16"><ellipse cx="8" cy="8" rx="7" ry="4" stroke="#000" stroke-width="1" fill="none" transform="rotate(8 8 8)"/><rect x="0.9" y="3.9" width="2.200" height="2.200" fill="#fff" stroke="#0a0aff" stroke-width="1.150"/><rect x="13.4" y="10.4" width="2.200" height="2.200" fill="#fff" stroke="#0a0aff" stroke-width="1.150"/></svg>
<svg class="a" style="left:1623px;top:518px;" width="16" height="16" viewBox="0 0 16 16"><ellipse cx="8" cy="8.500" rx="8.500" ry="3.800" stroke="#000" stroke-width="1" fill="none" transform="rotate(-48 8 8.500)"/><path d="M2 15L14 2" stroke="#000" stroke-width=".7"/><path d="M2 15.500h3" stroke="#000" stroke-width="1.600"/><rect x="12.9" y="0.9" width="2.200" height="2.200" fill="#fff" stroke="#0a0aff" stroke-width="1.150"/><rect x="6.9" y="7.4" width="2.200" height="2.200" fill="#fff" stroke="#0a0aff" stroke-width="1.150"/><rect x="0.9" y="13.4" width="2.200" height="2.200" fill="#fff" stroke="#0a0aff" stroke-width="1.150"/><rect x="9.9" y="9.9" width="2.200" height="2.200" fill="#fff" stroke="#0a0aff" stroke-width="1.150"/></svg>
<svg class="a" style="left:1651px;top:518px;" width="16" height="16" viewBox="0 0 16 16"><ellipse cx="8" cy="10.500" rx="7" ry="4" stroke="#000" stroke-width="1" fill="none"/><path d="M5.500 14.800h5" stroke="#000" stroke-width="1.600"/><text x="8" y="4.500" font-size="5.500" font-weight="bold" fill="#1414ff" text-anchor="middle">a:b</text></svg>
<svg class="a" style="left:1595px;top:589.5px;" width="16" height="16" viewBox="0 0 16 16"><path d="M2 13c-3-12 13-14 13-5" stroke="#000" stroke-width="1" fill="none" /><path d="M2 13l5-5h8" stroke="#555" stroke-width=".7"/><rect x="0.9" y="12.4" width="2.200" height="2.200" fill="#fff" stroke="#0a0aff" stroke-width="1.150"/><rect x="6.4" y="6.9" width="2.200" height="2.200" fill="#fff" stroke="#0a0aff" stroke-width="1.150"/><rect x="13.9" y="6.9" width="2.200" height="2.200" fill="#fff" stroke="#0a0aff" stroke-width="1.150"/></svg>
<svg class="a" style="left:1623px;top:589.5px;" width="16" height="16" viewBox="0 0 16 16"><path d="M2 13c-3-12 13-14 13-5M5 11c-2-7 7-8 7-3" stroke="#000" stroke-width="1" fill="none" /><rect x="0.9" y="12.4" width="2.200" height="2.200" fill="#fff" stroke="#0a0aff" stroke-width="1.150"/><rect x="6.9" y="6.9" width="2.200" height="2.200" fill="#fff" stroke="#0a0aff" stroke-width="1.150"/><rect x="13.9" y="6.9" width="2.200" height="2.200" fill="#fff" stroke="#0a0aff" stroke-width="1.150"/></svg>
<svg class="a" style="left:1651px;top:589.5px;" width="16" height="16" viewBox="0 0 16 16"><path d="M1.500 7c1 9 13 9 14 0l-1.500-5" stroke="#000" stroke-width="1" fill="none" /><path d="M1.500 7h6l6-5" stroke="#888" stroke-width=".7" stroke-dasharray="1 1" fill="none"/><rect x="0.4" y="5.9" width="2.200" height="2.200" fill="#fff" stroke="#0a0aff" stroke-width="1.150"/><rect x="12.9" y="0.9" width="2.200" height="2.200" fill="#fff" stroke="#0a0aff" stroke-width="1.150"/></svg>
<svg class="a" style="left:1679px;top:589.5px;" width="16" height="16" viewBox="0 0 16 16"><path d="M1 13L13 1" stroke="#000" stroke-width="1" fill="none" /><path d="M1 1l13 13" stroke="#999" stroke-width=".7" stroke-dasharray="1 1"/><path d="M8 8h3v3" stroke="#666" stroke-width="1.200" fill="none"/><rect x="12.4" y="6.9" width="2.200" height="2.200" fill="#fff" stroke="#0a0aff" stroke-width="1.150"/><rect x="8.4" y="11.4" width="2.200" height="2.200" fill="#fff" stroke="#0a0aff" stroke-width="1.150"/></svg>
<svg class="a" style="left:1707px;top:589.5px;" width="16" height="16" viewBox="0 0 16 16"><path d="M7 2c9 0 9 12 0 13" stroke="#000" stroke-width="1" fill="none" /><text x="2.500" y="5" font-size="5.500" fill="#000" text-anchor="middle">1</text><text x="9.500" y="9.500" font-size="5.500" fill="#000" text-anchor="middle">2</text><text x="2.500" y="15" font-size="5.500" fill="#000" text-anchor="middle">3</text><rect x="5.9" y="0.9" width="2.200" height="2.200" fill="#fff" stroke="#0a0aff" stroke-width="1.150"/><rect x="12.4" y="6.9" width="2.200" height="2.200" fill="#fff" stroke="#0a0aff" stroke-width="1.150"/><rect x="5.9" y="13.9" width="2.200" height="2.200" fill="#fff" stroke="#0a0aff" stroke-width="1.150"/></svg>
<svg class="a" style="left:1735px;top:589.5px;" width="16" height="16" viewBox="0 0 16 16"><path d="M7 2c9 0 9 12 0 13" stroke="#000" stroke-width="1" fill="none" /><text x="2.500" y="5" font-size="5.500" fill="#000" text-anchor="middle">1</text><text x="9.500" y="9.500" font-size="5.500" fill="#000" text-anchor="middle">3</text><text x="2.500" y="15" font-size="5.500" fill="#000" text-anchor="middle">2</text><rect x="5.9" y="0.9" width="2.200" height="2.200" fill="#fff" stroke="#0a0aff" stroke-width="1.150"/><rect x="12.4" y="6.9" width="2.200" height="2.200" fill="#fff" stroke="#0a0aff" stroke-width="1.150"/><rect x="5.9" y="13.9" width="2.200" height="2.200" fill="#fff" stroke="#0a0aff" stroke-width="1.150"/></svg>
<svg class="a" style="left:1763px;top:589.5px;" width="16" height="16" viewBox="0 0 16 16"><path d="M12 2h-9M1 6l3 1M3 4a6.500 6.500 0 1 0 11 3" stroke="#000" stroke-width="1" fill="none" /><path d="M12 2l-4 6h6" stroke="#888" stroke-width=".7" fill="none"/><rect x="6.9" y="0.4" width="2.200" height="2.200" fill="#fff" stroke="#0a0aff" stroke-width="1.150"/><rect x="1.9" y="8.9" width="2.200" height="2.200" fill="#fff" stroke="#0a0aff" stroke-width="1.150"/><rect x="11.9" y="10.9" width="2.200" height="2.200" fill="#fff" stroke="#0a0aff" stroke-width="1.150"/></svg>
<svg class="a" style="left:1791px;top:589.5px;" width="16" height="16" viewBox="0 0 16 16"><path d="M1 12L13 1M5 16c0-4 6-4 6 0" stroke="#000" stroke-width="1" fill="none" /><path d="M8 8h3v3" stroke="#666" stroke-width="1" fill="none"/><rect x="5.9" y="4.9" width="2.200" height="2.200" fill="#fff" stroke="#0a0aff" stroke-width="1.150"/><rect x="12.4" y="7.4" width="2.200" height="2.200" fill="#fff" stroke="#0a0aff" stroke-width="1.150"/><rect x="8.4" y="11.4" width="2.200" height="2.200" fill="#fff" stroke="#0a0aff" stroke-width="1.150"/></svg>
<svg class="a" style="left:1595px;top:617.5px;" width="16" height="16" viewBox="0 0 16 16"><path d="M1 11L13 0M5 16c0-4 6-4 6 0" stroke="#000" stroke-width="1" fill="none" /><circle cx="9" cy="7.500" r="3" stroke="#999" stroke-width=".8" fill="none"/><rect x="5.9" y="3.9" width="2.200" height="2.200" fill="#fff" stroke="#0a0aff" stroke-width="1.150"/><rect x="7.4" y="10.4" width="2.200" height="2.200" fill="#fff" stroke="#0a0aff" stroke-width="1.150"/></svg>
<svg class="a" style="left:1623px;top:617.5px;" width="16" height="16" viewBox="0 0 16 16"><path d="M2 14c-4-12 12-15 13-4M5 1l5 1" stroke="#000" stroke-width="1" fill="none" /><path d="M2 14l6-5h7" stroke="#888" stroke-width=".7" fill="none"/><rect x="3.9" y="0.9" width="2.200" height="2.200" fill="#fff" stroke="#0a0aff" stroke-width="1.150"/><rect x="0.9" y="12.9" width="2.200" height="2.200" fill="#fff" stroke="#0a0aff" stroke-width="1.150"/><rect x="13.9" y="8.4" width="2.200" height="2.200" fill="#fff" stroke="#0a0aff" stroke-width="1.150"/></svg>
<svg class="a" style="left:1651px;top:617.5px;" width="16" height="16" viewBox="0 0 16 16"><ellipse cx="8" cy="8" rx="7" ry="4.500" stroke="#000" stroke-width="1" fill="none" transform="rotate(10 8 8)"/><path d="M4 4l4 4 3-4" stroke="#888" stroke-width=".7" fill="none"/><rect x="0.9" y="0.9" width="2.200" height="2.200" fill="#fff" stroke="#0a0aff" stroke-width="1.150"/><rect x="4.9" y="2.9" width="2.200" height="2.200" fill="#fff" stroke="#0a0aff" stroke-width="1.150"/><rect x="9.9" y="2.9" width="2.200" height="2.200" fill="#fff" stroke="#0a0aff" stroke-width="1.150"/><rect x="13.4" y="9.9" width="2.200" height="2.200" fill="#fff" stroke="#0a0aff" stroke-width="1.150"/></svg>
<svg class="a" style="left:1679px;top:617.5px;" width="16" height="16" viewBox="0 0 16 16"><ellipse cx="8" cy="8.500" rx="8.500" ry="3.800" stroke="#000" stroke-width="1" fill="none" transform="rotate(-48 8 8.500)"/><path d="M2 15L14 2" stroke="#000" stroke-width=".7"/><path d="M8 8l4-1" stroke="#777" stroke-width="1.200"/><rect x="13.4" y="0.9" width="2.200" height="2.200" fill="#fff" stroke="#0a0aff" stroke-width="1.150"/><rect x="0.9" y="13.9" width="2.200" height="2.200" fill="#fff" stroke="#0a0aff" stroke-width="1.150"/><rect x="7.9" y="11.9" width="2.200" height="2.200" fill="#fff" stroke="#0a0aff" stroke-width="1.150"/><rect x="11.9" y="7.9" width="2.200" height="2.200" fill="#fff" stroke="#0a0aff" stroke-width="1.150"/></svg>
<svg class="a" style="left:1707px;top:617.5px;" width="16" height="16" viewBox="0 0 16 16"><path d="M1.500 11.500c0-6 13-6 13 0" stroke="#000" stroke-width="1" fill="none"/><text x="8" y="4" font-size="5.500" font-weight="bold" fill="#1414ff" text-anchor="middle">a:b</text></svg>
<svg class="a" style="left:1581px;top:693px;" width="18" height="18" viewBox="0 0 18 18"><path d="M3 9l6-2 5 2v6l-5 2-6-2z" fill="#e02020" stroke="#400" stroke-width=".8"/><path d="M3 9l6 2 5-2M9 11v6" stroke="#400" stroke-width=".7" fill="none"/><path d="M4 3l4 4M9 2.500l-2 5M6 3l5 3" stroke="#222" stroke-width="1.100"/><path d="M8 5h4v3h-4z" fill="#ddd" stroke="#555" stroke-width=".6"/></svg>
<svg class="a" style="left:1647px;top:693px;" width="16" height="16" viewBox="0 0 16 16"><rect x="4" y="2" width="9" height="8" fill="none" stroke="#00008a" stroke-width="1.200"/><path d="M2.500 .5h3v3h-3zM11.500 .5h3v3h-3zM11.500 8.500h3v3h-3z" fill="#00008a"/><rect x="1" y="7" width="8" height="8" fill="#fff" stroke="#000" stroke-width="1"/><path d="M1 9.500h8" stroke="#000" stroke-width="1.400"/><path d="M3 13l3-2M4 11h2v2" stroke="#000" stroke-width=".8" fill="none"/><path d="M7 4l3 2" stroke="#00008a" stroke-width="1"/></svg>
<svg class="a" style="left:5px;top:173px;" width="24" height="26" viewBox="0 0 24 26"><path d="M6.500 2.500v18l4.500-4.500h8z" fill="#fff" stroke="#000" stroke-width="1.300" stroke-linejoin="miter"/><path d="M11.500 15l3.500 7.500" stroke="#000" stroke-width="3" stroke-linecap="round"/></svg>
<svg class="a" style="left:29px;top:197px;" width="5" height="5" viewBox="0 0 5 5"><path d="M5 0v5h-5z" fill="#111"/></svg>
<svg class="a" style="left:5px;top:203px;" width="24" height="24" viewBox="0 0 24 24"><path d="M3 18c1-7 4-11 9-15" stroke="#222" stroke-width="1" fill="none"/><rect x="6" y="5" width="5" height="5" fill="#3a3aff"/><path d="M12 8v12l3-2.500 2 4.500 2-1-2-4.300h4z" fill="#fff" stroke="#000" stroke-width="1"/></svg>
<svg class="a" style="left:5px;top:234px;" width="24" height="24" viewBox="0 0 24 24"><path d="M1 23L23 1" stroke="#888" stroke-width=".9" stroke-dasharray="1.500 1.200"/><rect x="5.75" y="15.75" width="2.5" height="2.5" fill="#fff" stroke="#2a2aff" stroke-width="1"/><rect x="15.75" y="5.75" width="2.5" height="2.5" fill="#fff" stroke="#2a2aff" stroke-width="1"/></svg>
<svg class="a" style="left:29px;top:257px;" width="5" height="5" viewBox="0 0 5 5"><path d="M5 0v5h-5z" fill="#111"/></svg>
<svg class="a" style="left:5px;top:263px;" width="24" height="24" viewBox="0 0 24 24"><path d="M4 20L20 4" stroke="#222" stroke-width="1"/><rect x="2.75" y="18.75" width="2.5" height="2.5" fill="#fff" stroke="#2a2aff" stroke-width="1"/><rect x="18.75" y="2.75" width="2.5" height="2.5" fill="#fff" stroke="#2a2aff" stroke-width="1"/></svg>
<svg class="a" style="left:29px;top:286px;" width="5" height="5" viewBox="0 0 5 5"><path d="M5 0v5h-5z" fill="#111"/></svg>
<svg class="a" style="left:5px;top:294px;" width="24" height="24" viewBox="0 0 24 24"><circle cx="12" cy="12" r="10" fill="none" stroke="#222" stroke-width="1"/><rect x="10.75" y="10.75" width="2.5" height="2.5" fill="#fff" stroke="#2a2aff" stroke-width="1"/><rect x="20.75" y="10.75" width="2.5" height="2.5" fill="#fff" stroke="#2a2aff" stroke-width="1"/></svg>
<svg class="a" style="left:29px;top:317px;" width="5" height="5" viewBox="0 0 5 5"><path d="M5 0v5h-5z" fill="#111"/></svg>
<svg class="a" style="left:5px;top:324px;" width="24" height="24" viewBox="0 0 24 24"><path d="M3 21c2-18 16-18 18 0" stroke="#222" stroke-width="1" fill="none"/><rect x="1.75" y="19.75" width="2.5" height="2.5" fill="#fff" stroke="#2a2aff" stroke-width="1"/><rect x="19.75" y="19.75" width="2.5" height="2.5" fill="#fff" stroke="#2a2aff" stroke-width="1"/><rect x="3.75" y="2.75" width="2.5" height="2.5" fill="#fff" stroke="#2a2aff" stroke-width="1"/><rect x="17.75" y="2.75" width="2.5" height="2.5" fill="#fff" stroke="#2a2aff" stroke-width="1"/></svg>
<svg class="a" style="left:29px;top:347px;" width="5" height="5" viewBox="0 0 5 5"><path d="M5 0v5h-5z" fill="#111"/></svg>
<svg class="a" style="left:5px;top:353px;" width="24" height="24" viewBox="0 0 24 24"><circle cx="12" cy="12" r="2" fill="#333"/></svg>
<svg class="a" style="left:29px;top:377px;" width="5" height="5" viewBox="0 0 5 5"><path d="M5 0v5h-5z" fill="#111"/></svg>
<span class="t" style="left:6px;top:380.34px;font-size:31px;line-height:31px;color:#333;font-family:'Liberation Serif',serif;">A</span>
<svg class="a" style="left:29px;top:407px;" width="5" height="5" viewBox="0 0 5 5"><path d="M5 0v5h-5z" fill="#111"/></svg>
<svg class="a" style="left:5px;top:415px;" width="24" height="24" viewBox="0 0 24 24"><rect x="2.500" y="3" width="10" height="8" fill="#fff" stroke="#222" stroke-width="1"/><rect x="7" y="12" width="13" height="10" fill="#3a3aff"/><path d="M11 3c8 0 10 5 6 11" stroke="#e02020" stroke-width="1" fill="none"/><path d="M9 5l-4 2 3 2M5 7h5" stroke="#e02020" stroke-width=".9" fill="none"/></svg>
<svg class="a" style="left:29px;top:438px;" width="5" height="5" viewBox="0 0 5 5"><path d="M5 0v5h-5z" fill="#111"/></svg>
<svg class="a" style="left:5px;top:450px;" width="24" height="24" viewBox="0 0 24 24"><text x="6" y="15.500" font-size="10" fill="#222" text-anchor="middle">3D</text><path d="M12 2.500l9 9.500-8 8.500h-9" stroke="#222" stroke-width="1" fill="none"/><rect x="10.75" y="1.25" width="2.5" height="2.5" fill="#fff" stroke="#2a2aff" stroke-width="1"/><rect x="19.75" y="10.75" width="2.5" height="2.5" fill="#fff" stroke="#2a2aff" stroke-width="1"/><rect x="11.75" y="19.25" width="2.5" height="2.5" fill="#fff" stroke="#2a2aff" stroke-width="1"/><rect x="2.25" y="19.25" width="2.5" height="2.5" fill="#fff" stroke="#2a2aff" stroke-width="1"/></svg>
<svg class="a" style="left:29px;top:473px;" width="5" height="5" viewBox="0 0 5 5"><path d="M5 0v5h-5z" fill="#111"/></svg>
<svg class="a" style="left:5px;top:481px;" width="24" height="24" viewBox="0 0 24 24"><circle cx="11" cy="12" r="9.300" fill="#bdbdbd" stroke="#333" stroke-width="1"/><circle cx="9" cy="10" r="5.500" fill="#ececec"/><path d="M3 15c3 5 12 5 16 0" stroke="#777" stroke-width="1.500" fill="none"/><rect x="9.75" y="11.25" width="2.5" height="2.5" fill="#fff" stroke="#2a2aff" stroke-width="1"/><rect x="19.25" y="11.25" width="2.5" height="2.5" fill="#fff" stroke="#2a2aff" stroke-width="1"/></svg>
<svg class="a" style="left:29px;top:504px;" width="5" height="5" viewBox="0 0 5 5"><path d="M5 0v5h-5z" fill="#111"/></svg>
<svg class="a" style="left:5px;top:511px;" width="24" height="24" viewBox="0 0 24 24"><path d="M9 6l8 2.500-3 11.500-8-3z" fill="#fff" stroke="#222" stroke-width="1"/><path d="M12 14l5-5.500-3 11.500z" fill="#bdbdbd"/><ellipse cx="10" cy="18.500" rx="4.500" ry="2" fill="none" stroke="#2a2aff" stroke-width=".9" transform="rotate(18 10 18.500)"/><path d="M7 16l6 2" stroke="#30c0c0" stroke-width=".9"/></svg>
<svg class="a" style="left:29px;top:534px;" width="5" height="5" viewBox="0 0 5 5"><path d="M5 0v5h-5z" fill="#111"/></svg>
<svg class="a" style="left:5px;top:545.5px;" width="24" height="24" viewBox="0 0 24 24"><path d="M12 2v20M2 12h20M12 2l-3 3.500M12 2l3 3.500M12 22l-3-3.500M12 22l3-3.500M2 12l3.500-3M2 12l3.500 3M22 12l-3.500-3M22 12l-3.500 3" stroke="#444" stroke-width="1" fill="none"/><path d="M2 1h20M2 23h20" stroke="#aaa" stroke-width=".8"/></svg>
<svg class="a" style="left:29px;top:570px;" width="5" height="5" viewBox="0 0 5 5"><path d="M5 0v5h-5z" fill="#111"/></svg>
<svg class="a" style="left:5px;top:583px;" width="24" height="24" viewBox="0 0 24 24"><path d="M7 12l8-7 3 2v9l-8 6.500-3-1.500z" fill="#9a9a9a" stroke="#222" stroke-width="1"/><path d="M7 12l3 1.500v9M10 13.500l8-6.500" stroke="#222" stroke-width=".9" fill="none"/><path d="M10 13.500l8-6.500v9l-8 6.500z" fill="#d4d4d4" stroke="#222" stroke-width=".8"/><rect x="7.75" y="20.75" width="2.5" height="2.5" fill="#fff" stroke="#2a2aff" stroke-width="1"/></svg>
<svg class="a" style="left:29px;top:606px;" width="5" height="5" viewBox="0 0 5 5"><path d="M5 0v5h-5z" fill="#111"/></svg>
<svg class="a" style="left:5px;top:612.5px;" width="24" height="24" viewBox="0 0 24 24"><polygon points="12.0,1.0 14.8,5.3 19.8,4.2 18.7,9.2 23.0,12.0 18.7,14.8 19.8,19.8 14.8,18.7 12.0,23.0 9.2,18.7 4.2,19.8 5.3,14.8 1.0,12.0 5.3,9.2 4.2,4.2 9.2,5.3" fill="#d63a3a" stroke="#6a1a1a" stroke-width=".8"/><circle cx="12" cy="12" r="4.600" fill="#fff" stroke="#6a1a1a" stroke-width=".8"/></svg>
<svg class="a" style="left:29px;top:636px;" width="5" height="5" viewBox="0 0 5 5"><path d="M5 0v5h-5z" fill="#111"/></svg>
<svg class="a" style="left:5px;top:648px;" width="24" height="24" viewBox="0 0 24 24"><rect x="1.500" y="2.500" width="21" height="19" fill="#b8b8b8" stroke="#222" stroke-width="1.200"/><rect x="1.500" y="2.500" width="21" height="3.500" fill="#2a2a8a"/><rect x="16" y="3.300" width="2" height="1.800" fill="#fff"/><rect x="19" y="3.300" width="2" height="1.800" fill="#fff"/><rect x="5" y="8.500" width="9" height="8" fill="none" stroke="#222" stroke-width="1.100"/><rect x="10" y="12" width="9" height="7.500" fill="none" stroke="#222" stroke-width="1.100"/><path d="M4 7.500h2.500v2.500h-2.500zM12.500 7.500h2.500v2.500h-2.500zM4 15.500h2.500v2.500h-2.500zM17.500 18h2.500v2.500h-2.500z" fill="#222"/></svg>
<svg class="a" style="left:29px;top:671px;" width="5" height="5" viewBox="0 0 5 5"><path d="M5 0v5h-5z" fill="#111"/></svg>
<svg class="a" style="left:5px;top:677px;" width="24" height="24" viewBox="0 0 24 24"><rect x="1" y="1" width="9" height="9" fill="#e4e4e4" stroke="#a8a8a8"/><path d="M3 3l4.500 4.500M7.500 4v3.500h-3.500" stroke="#8a8a8a" stroke-width="1" fill="none"/><rect x="9" y="10" width="8" height="7" fill="none" stroke="#9a9a9a"/><rect x="13" y="14" width="8" height="7" fill="none" stroke="#9a9a9a"/><path d="M7.500 15h2.500v2.500h-2.500zM16 8h2.500v2.500h-2.500zM20.500 12.500h2.500v2.500h-2.500zM10 19.500h2.500v2.500h-2.500zM20.500 20h2.500v2.500h-2.500z" fill="#9a9a9a"/></svg>
<svg class="a" style="left:29px;top:700px;" width="5" height="5" viewBox="0 0 5 5"><path d="M5 0v5h-5z" fill="#111"/></svg>
<svg class="a" style="left:5px;top:708px;" width="24" height="24" viewBox="0 0 24 24"><rect x="4" y="4" width="16" height="16" fill="#20e0ea" stroke="#333" stroke-width="1.300"/><path d="M4.500 19.500v-4l4-4 3 3 2.500-2.500 5.500 5v2.500z" fill="#10a010"/><circle cx="14.500" cy="8.500" r="2.200" fill="#ffe400" stroke="#555" stroke-width=".6"/><path d="M12 19.500l3.500-3 3.500 3z" fill="#ffe400"/></svg>
<svg class="a" style="left:29px;top:731px;" width="5" height="5" viewBox="0 0 5 5"><path d="M5 0v5h-5z" fill="#111"/></svg>
<svg class="a" style="left:5px;top:744px;" width="24" height="24" viewBox="0 0 24 24"><rect x="7" y="9" width="14" height="13" fill="#fff" stroke="#222" stroke-width="1"/><circle cx="14" cy="15.500" r="4.500" fill="none" stroke="#222" stroke-width="1"/><path d="M14 10v11M8.500 15.500h11" stroke="#222" stroke-width=".8"/><path d="M6 1v11M1 6.500h11M2.500 2.500l7.500 8M9.500 2.500l-7 8" stroke="#e8d800" stroke-width="1.100"/></svg>
<svg class="a" style="left:29px;top:768px;" width="5" height="5" viewBox="0 0 5 5"><path d="M5 0v5h-5z" fill="#111"/></svg>
<svg class="a" style="left:1891px;top:174px;" width="24" height="24" viewBox="0 0 24 24"><path d="M2.500 2.500v18.500h8.500c-5-3-7-9-7-18.500z" fill="#e8e8e8" stroke="#c0c0c0" stroke-width=".8"/><path d="M19 2.500h3.500v18.500h-9c4-3 5.500-9 5.500-18.500z" fill="#b0b0b0" stroke="#9a9a9a" stroke-width=".8"/></svg>
<svg class="a" style="left:1914px;top:197px;" width="5" height="5" viewBox="0 0 5 5"><path d="M5 0v5h-5z" fill="#111"/></svg>
<svg class="a" style="left:1891px;top:209px;" width="24" height="24" viewBox="0 0 24 24"><path d="M2 4l21 6" stroke="#222" stroke-width=".9"/><path d="M2 4l11 18" stroke="#e02020" stroke-width=".9"/></svg>
<svg class="a" style="left:1914px;top:232px;" width="5" height="5" viewBox="0 0 5 5"><path d="M5 0v5h-5z" fill="#111"/></svg>
<svg class="a" style="left:1891px;top:239px;" width="24" height="24" viewBox="0 0 24 24"><path d="M5 19L19 5" stroke="#999" stroke-width="3"/><path d="M5 19L19 5" stroke="#fff" stroke-width="1.200"/><path d="M2 22l2-7 5 5z" fill="#2a2aff"/><path d="M22 2l-7 1.500 5.500 5.500z" fill="#f03030"/></svg>
<svg class="a" style="left:1914px;top:262px;" width="5" height="5" viewBox="0 0 5 5"><path d="M5 0v5h-5z" fill="#111"/></svg>
<svg class="a" style="left:1891px;top:276px;" width="24" height="24" viewBox="0 0 24 24"><rect x="2" y="6" width="8" height="6" fill="none" stroke="#222" stroke-width="1.200" stroke-dasharray="2 1.200" rx="1"/><rect x="12" y="13" width="9" height="8" fill="#fff" stroke="#e02020" stroke-width="1.200"/><path d="M8 5c5-2 9 0 9 5M17 10l-2.500-2M17 10l2-2.500" stroke="#20c020" stroke-width="1.300" fill="none"/></svg>
<svg class="a" style="left:1914px;top:299px;" width="5" height="5" viewBox="0 0 5 5"><path d="M5 0v5h-5z" fill="#111"/></svg>
<svg class="a" style="left:1891px;top:306px;" width="24" height="24" viewBox="0 0 24 24"><path d="M4 12h4v-5h6v5h5v9h-15z" fill="#ececec" stroke="#b4b4b4" stroke-width="1"/><path d="M7 15h9v4h-9M11 4v6M9 8l2 2 2-2" fill="none" stroke="#b4b4b4" stroke-width="1"/></svg>
<svg class="a" style="left:1914px;top:329px;" width="5" height="5" viewBox="0 0 5 5"><path d="M5 0v5h-5z" fill="#111"/></svg>
<svg class="a" style="left:1891px;top:340px;" width="24" height="24" viewBox="0 0 24 24"><rect x="2.500" y="2.500" width="13" height="13" fill="#d8d8d8" stroke="#8a8a8a" stroke-width="1"/><rect x="8.500" y="8.500" width="13" height="13" fill="#c4c4c4" stroke="#8a8a8a" stroke-width="1"/></svg>
<svg class="a" style="left:1914px;top:364px;" width="5" height="5" viewBox="0 0 5 5"><path d="M5 0v5h-5z" fill="#111"/></svg>
<svg class="a" style="left:1891px;top:379px;" width="24" height="24" viewBox="0 0 24 24"><rect x="3" y="4" width="18" height="15" fill="#f4f4f4" stroke="#a8a8a8" stroke-width="1"/><path d="M3 8h18M3 11.500h18M3 15h18M9 8v11M15 8v11" stroke="#a8a8a8" stroke-width="1"/><rect x="3" y="4" width="18" height="4" fill="#c8c8c8"/></svg>
<svg class="a" style="left:1891px;top:408px;" width="24" height="24" viewBox="0 0 24 24"><path d="M4 9l4-4h13v11l-4 4h-13zM4 9h13l4-4M17 9v11M4 14.500h13l4-4" fill="none" stroke="#a6a6a6" stroke-width="1"/><path d="M6 13.500l2-2h9l-2 2z" fill="#b0b0b0" stroke="#8a8a8a" stroke-width=".8"/></svg>
<svg class="a" style="left:1914px;top:431px;" width="5" height="5" viewBox="0 0 5 5"><path d="M5 0v5h-5z" fill="#111"/></svg>
<svg class="a" style="left:1891px;top:438px;" width="24" height="24" viewBox="0 0 24 24"><circle cx="14" cy="9.500" r="7.500" fill="#c8c8c8" stroke="#a8a8a8" stroke-width="1"/><circle cx="12" cy="8" r="3.500" fill="#e8e8e8"/><path d="M3 10h9v9l-3 3h-6z" fill="#e0e0e0" stroke="#a8a8a8" stroke-width="1"/></svg>
<svg class="a" style="left:1914px;top:461px;" width="5" height="5" viewBox="0 0 5 5"><path d="M5 0v5h-5z" fill="#111"/></svg>
<svg class="a" style="left:1891px;top:467px;" width="24" height="24" viewBox="0 0 24 24"><path d="M3 4l5-2 8 8-3 5-7-3z" fill="#f0d800" stroke="#222" stroke-width="1.200"/><path d="M5 5l7 7" stroke="#222" stroke-width="1"/><path d="M13 15l3-5 3 3-2 4z" fill="#ccc" stroke="#222" stroke-width=".9"/><path d="M13 19h3M14.500 17.500v3M19 21h3M20.500 19.500v3M20 15h3M21.500 13.500v3" stroke="#2a2aff" stroke-width="1.200"/><path d="M14 19l1 .5M20 21l1 .5M21 15l1 .5" stroke="#20c020" stroke-width="1"/></svg>
<svg class="a" style="left:1914px;top:490px;" width="5" height="5" viewBox="0 0 5 5"><path d="M5 0v5h-5z" fill="#111"/></svg>
<svg class="a" style="left:1891px;top:498px;" width="24" height="24" viewBox="0 0 24 24"><rect x="1.500" y="2" width="9" height="10" fill="#e8e8e8" stroke="#a8a8a8" stroke-width=".9"/><path d="M1.500 7h9M6 2v10M3 3.500l2 2M7.500 3.500l2 2M3 8.500l2 2M7.500 8.500l2 2" stroke="#a8a8a8" stroke-width=".8"/><rect x="12.500" y="11" width="9" height="11" fill="#fff" stroke="#8a8a8a" stroke-width=".9"/><path d="M13 21.500l8-10" stroke="#8a8a8a" stroke-width=".8"/><path d="M13 3h5v5M18 8l-2-2M18 8l2-2" stroke="#8a8a8a" stroke-width="1" fill="none"/></svg>
<svg class="a" style="left:1914px;top:522px;" width="5" height="5" viewBox="0 0 5 5"><path d="M5 0v5h-5z" fill="#111"/></svg>
<svg class="a" style="left:1891px;top:534px;" width="24" height="24" viewBox="0 0 24 24"><circle cx="12" cy="12" r="10.500" fill="#eaf8ea" stroke="#b8c820" stroke-width="1.500"/><path d="M5 5l5 5M10 10v-3.500M10 10h-3.500M19 5l-5 5M14 10v-3.500M14 10h3.500M5 19l5-5M10 14v3.500M10 14h-3.500M19 19l-5-5M14 14v3.500M14 14h3.500" stroke="#2a2ab0" stroke-width="1.200" fill="none"/></svg>
<svg class="a" style="left:1914px;top:558px;" width="5" height="5" viewBox="0 0 5 5"><path d="M5 0v5h-5z" fill="#111"/></svg>
<svg class="a" style="left:1891px;top:563px;" width="24" height="24" viewBox="0 0 24 24"><rect x="1" y="3" width="9" height="6" rx="1" fill="#555"/><circle cx="5.500" cy="6" r="1.800" fill="#ddd"/><rect x="3" y="1.500" width="3" height="2" fill="#555"/><path d="M8 21L20 9" stroke="#8a8aa0" stroke-width="1"/><rect x="6.75" y="19.75" width="2.5" height="2.5" fill="#fff" stroke="#2a2aff" stroke-width="1"/><rect x="18.75" y="6.75" width="2.5" height="2.5" fill="#fff" stroke="#2a2aff" stroke-width="1"/></svg>
<svg class="a" style="left:1914px;top:587px;" width="5" height="5" viewBox="0 0 5 5"><path d="M5 0v5h-5z" fill="#111"/></svg>
<svg class="a" style="left:1891px;top:601px;" width="24" height="24" viewBox="0 0 24 24"><path d="M5 5h14v14h-14zM12 5v14M5 12h14" fill="none" stroke="#9a9a9a" stroke-width="1.100"/><path d="M2.500 2.500h4v4h-4zM10 2.500h4v4h-4zM17.500 2.500h4v4h-4zM2.500 10h4v4h-4zM17.500 10h4v4h-4zM2.500 17.500h4v4h-4zM10 17.500h4v4h-4zM17.500 17.500h4v4h-4z" fill="#9a9a9a"/></svg>
<svg class="a" style="left:1082px;top:964px;" width="20" height="20" viewBox="0 0 24 24"><path d="M3 10l9-6h9v5h-7l-4 3z" fill="#ddd" stroke="#333" stroke-width="1.300"/><rect x="3" y="11" width="10" height="10" fill="#fff" stroke="#333" stroke-width="1.300"/><path d="M6 14h4v4h-4z" fill="#888"/><path d="M18 3h4v4" stroke="#2a2ab0" stroke-width="1.600" fill="none"/></svg>
<svg class="a" style="left:1104px;top:964px;" width="20" height="20" viewBox="0 0 24 24"><rect x="2" y="2" width="10" height="10" fill="#fff" stroke="#333" stroke-width="1.300"/><path d="M8 22L22 6" stroke="#999" stroke-width="1"/><path d="M12 14h8v7h-8z" fill="none" stroke="#666" stroke-width="1.200" stroke-dasharray="2 1"/><path d="M15 16l3 3M18 16.500v2.500h-2.500" stroke="#666" stroke-width=".9" fill="none"/></svg>
<svg class="a" style="left:1126px;top:964px;" width="20" height="20" viewBox="0 0 24 24"><path d="M3 21c0-9 4-11 9-11s8-2 8-8" stroke="#444" stroke-width="3" fill="none"/><path d="M3 21c0-9 4-11 9-11s8-2 8-8" stroke="#ddd" stroke-width="1" fill="none"/><path d="M15 14l7 7M15 14v5M15 14h5" stroke="#4a7aff" stroke-width="1.800" fill="none"/></svg>
<svg class="a" style="left:1154px;top:964px;" width="20" height="20" viewBox="0 0 24 24"><rect x="1.500" y="2" width="21" height="20" fill="#20e040" stroke="#000" stroke-width="1.600"/><path d="M2 2.500L22 21.500H2z" fill="#0a7a6a"/><path d="M2 2.500L22 21.500" stroke="#000" stroke-width="1.300"/><path d="M4 4h16" stroke="#000" stroke-width="1" stroke-dasharray="1.500 1.500"/></svg>
<svg class="a" style="left:1176px;top:964px;" width="20" height="20" viewBox="0 0 24 24"><path d="M2 22V8L16 22z" fill="#3a9a9a" stroke="#000" stroke-width="1.400"/><path d="M5 8l13 13" stroke="#000" stroke-width="1.200"/><rect x="9" y="1" width="14" height="8" fill="#f0f0f0"/><text x="16" y="8.500" font-size="9" font-weight="bold" fill="#000" text-anchor="middle" textLength="13" lengthAdjust="spacingAndGlyphs">WP</text></svg>
<svg class="a" style="left:1198px;top:964px;" width="20" height="20" viewBox="0 0 24 24"><path d="M2 22V5L19 22z" fill="#30e050" stroke="#000" stroke-width="1.400"/><path d="M4 7l14 14" stroke="#000" stroke-width="1" stroke-dasharray="1.500 1.500"/><rect x="11" y="1" width="12" height="8" fill="#f0f0f0"/><text x="17" y="8.500" font-size="9" font-weight="bold" fill="#000" text-anchor="middle" textLength="11" lengthAdjust="spacingAndGlyphs">CP</text></svg>
<svg class="a" style="left:1220px;top:964px;" width="20" height="20" viewBox="0 0 24 24"><path d="M2 5h12v7h-5v4h8v5h-5" fill="none" stroke="#000" stroke-width="1.400"/><path d="M3.500 6.500h9v4h-5v7h8" fill="none" stroke="#30e050" stroke-width="2.200"/><text x="19.500" y="9" font-size="9.500" font-weight="bold" fill="#000" text-anchor="middle">F</text></svg>
<svg class="a" style="left:1248px;top:964px;" width="20" height="20" viewBox="0 0 24 24"><path d="M2 8l7-6v4h7c4 0 5 3 5 7h-4c0-2-1-3-3-3h-5v4z" fill="#20b030" stroke="#000" stroke-width="1.200"/><path d="M12 10v12l3-2.500 2 4 2-1-2-4h4z" fill="#fff" stroke="#000" stroke-width="1.100"/></svg>
<svg class="a" style="left:1270px;top:964px;" width="20" height="20" viewBox="0 0 24 24"><path d="M3 3h10l-3 8z" fill="#f03030"/><path d="M14 14l7 0-4 8z" fill="#6a8aff" transform="rotate(180 16 17)"/><path d="M6 6l12 12" stroke="#999" stroke-width=".9" stroke-dasharray="1.500 1.500"/><path d="M2 2h1.500M14 2h1.500M22 12h-1.500M22 22h-1.500M12 22h-1.500" stroke="#c8a800" stroke-width="1.500"/></svg>
<svg class="a" style="left:1291px;top:964px;" width="20" height="20" viewBox="0 0 24 24"><path d="M2 19L9 5l7 14z" fill="none" stroke="#333" stroke-width="1.200"/><path d="M5 19l6-11 5 11" fill="none" stroke="#333" stroke-width="1"/><path d="M10 21l6-11 6 11z" fill="none" stroke="#f03030" stroke-width="1.400"/></svg>
<svg class="a" style="left:1314px;top:964px;" width="20" height="20" viewBox="0 0 24 24"><path d="M8 9c-2-8 10-8 8 0M3 20c0-5 18-5 18 0zM6 15c0-4 12-4 12 0" stroke="#b4b4b4" stroke-width="1.300" fill="none"/><path d="M2 21h20" stroke="#b4b4b4" stroke-width="1.300" fill="none"/></svg>
<svg class="a" style="left:1335px;top:964px;" width="20" height="20" viewBox="0 0 24 24"><rect x="3" y="4" width="17" height="17" fill="none" stroke="#999" stroke-width=".9" stroke-dasharray="1.500 1.500"/><rect x="6" y="9" width="11" height="10" fill="#fff" stroke="#333" stroke-width="1.400"/><circle cx="11.500" cy="14" r="3" fill="none" stroke="#333" stroke-width="1"/><path d="M2 22L22 2" stroke="#f03030" stroke-width="1.300"/><path d="M2 3h3v3h-3zM2 19h3v3h-3zM18 19h3v3h-3z" fill="#4a7aff"/></svg>
<svg class="a" style="left:1357px;top:964px;" width="20" height="20" viewBox="0 0 24 24"><rect x="2.500" y="2.500" width="19" height="19" fill="#e8e8e8" stroke="#b4b4b4" stroke-width="1.300" fill="none"/><rect x="5.500" y="5.500" width="13" height="13" stroke="#b4b4b4" stroke-width="1.300" fill="none"/><path d="M7 7l10 10M17 7L7 17" stroke="#b4b4b4" stroke-width="1.300" fill="none"/></svg>
<svg class="a" style="left:1379px;top:964px;" width="20" height="20" viewBox="0 0 24 24"><rect x="3" y="9" width="12" height="12" fill="#e8e8e8" stroke="#b4b4b4" stroke-width="1.300" fill="none"/><path d="M7 13h8v8M10 9V5h10" stroke="#b4b4b4" stroke-width="1.300" fill="none"/><rect x="19" y="3" width="3" height="3" fill="#b4b4b4"/></svg>
<svg class="a" style="left:1401px;top:964px;" width="20" height="20" viewBox="0 0 24 24"><rect x="3" y="8" width="13" height="13" fill="#e8e8e8" stroke="#b4b4b4" stroke-width="1.300" fill="none"/><rect x="6" y="11" width="7" height="7" stroke="#b4b4b4" stroke-width="1.300" fill="none"/><path d="M20 3v14M18 3h4M18 10h4M18 17h4" stroke="#b4b4b4" stroke-width="1.300" fill="none"/></svg>
<svg class="a" style="left:1424px;top:964px;" width="20" height="20" viewBox="0 0 24 24"><path d="M2 6l8-4h11l-8 4zM10 12v9h11v-9l-5-4z" fill="#e8e8e8" stroke="#b4b4b4" stroke-width="1.300" fill="none"/><path d="M13 15h5v6h-5z" stroke="#b4b4b4" stroke-width="1.300" fill="none"/></svg>
<svg class="a" style="left:1446px;top:964px;" width="20" height="20" viewBox="0 0 24 24"><path d="M8 6l8-4h6l-8 4zM3 12l8-4h6l-8 4zM3 12v9h11v-9" fill="#e8e8e8" stroke="#b4b4b4" stroke-width="1.300" fill="none"/><path d="M6 15h5v6h-5z" stroke="#b4b4b4" stroke-width="1.300" fill="none"/></svg>
<svg class="a" style="left:1468px;top:964px;" width="20" height="20" viewBox="0 0 24 24"><rect x="3" y="10" width="9" height="9" fill="#e8e8e8" stroke="#b4b4b4" stroke-width="1.300" fill="none"/><path d="M7 2v20M1 10h12M15 5c0-4 6-4 6 0v8h-6z" stroke="#b4b4b4" stroke-width="1.300" fill="none"/></svg>
<svg class="a" style="left:1490px;top:964px;" width="20" height="20" viewBox="0 0 24 24"><rect x="2" y="2" width="20" height="20" fill="none" stroke="#999" stroke-width=".9" stroke-dasharray="1.500 1.500"/><rect x="5" y="5" width="14" height="14" fill="#fff" stroke="#333" stroke-width="1.400"/><circle cx="12" cy="12" r="4" fill="none" stroke="#333" stroke-width="1.100"/><path d="M1 23L23 1" stroke="#f03030" stroke-width="1.300"/><path d="M3 3h3v3h-3zM18 3h3v3h-3zM3 18h3v3h-3zM18 18h3v3h-3z" fill="#4a7aff"/></svg>
</body></html>
